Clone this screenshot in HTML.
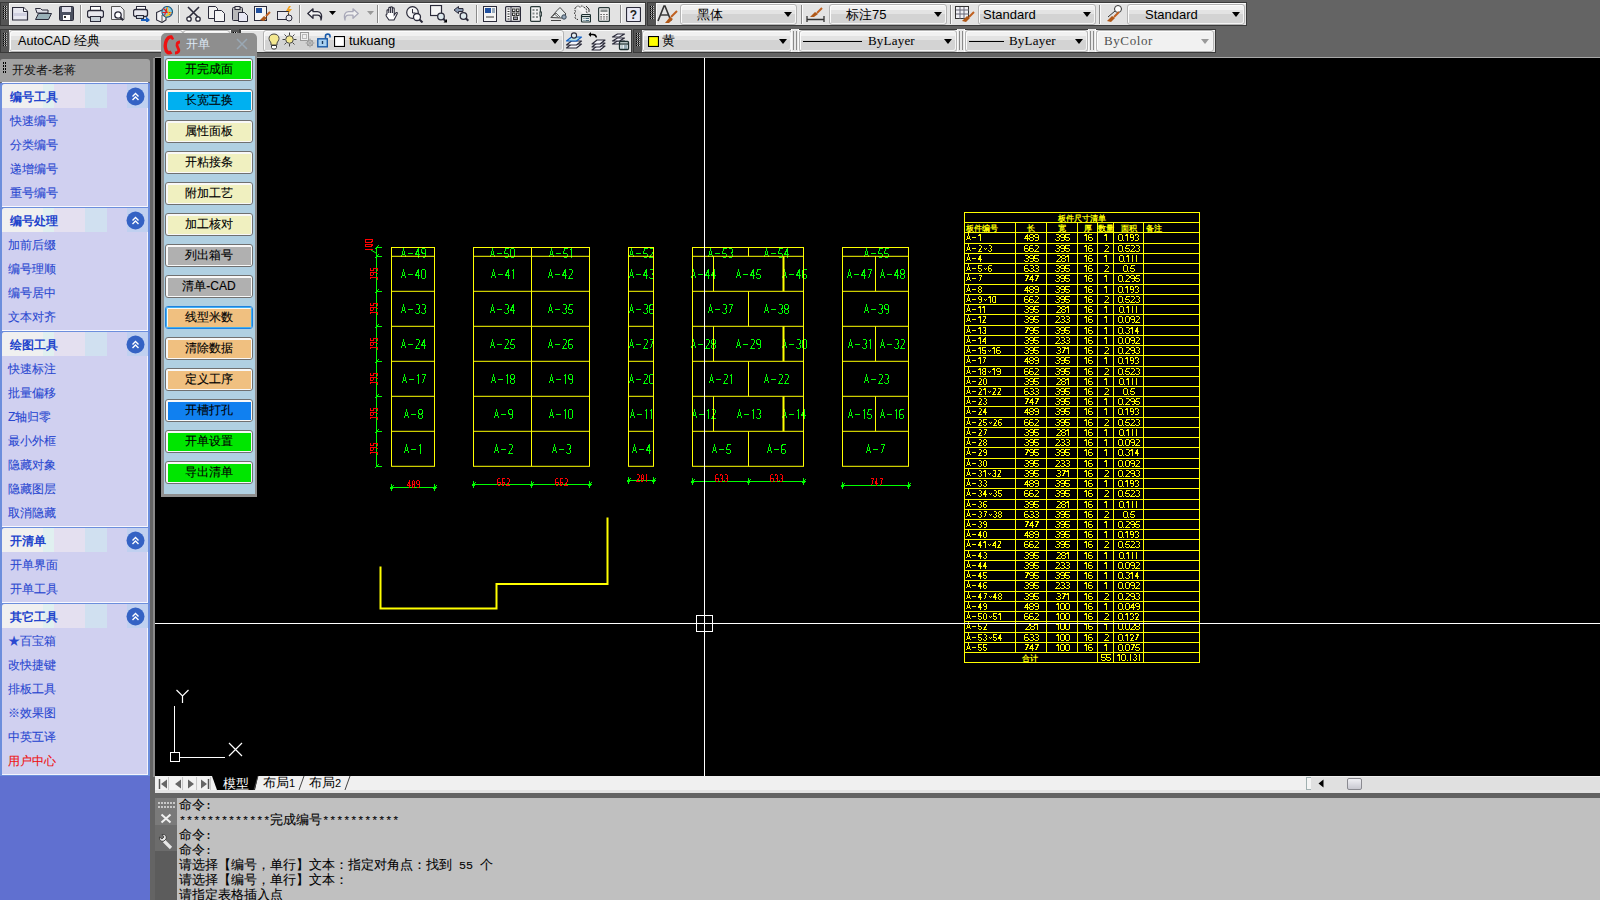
<!DOCTYPE html><html><head><meta charset="utf-8"><title>AutoCAD</title><style>
*{margin:0;padding:0;box-sizing:border-box}
html,body{width:1600px;height:900px;overflow:hidden}
body{background:#646464;position:relative;font-family:"Liberation Sans",sans-serif;font-size:12px;color:#000}
.a{position:absolute}
.cb{position:absolute;background:linear-gradient(#f1f1f1 0,#f1f1f1 5px,#e3e3e3 5px,#e3e3e3 9px,#d3d3d3 9px,#d3d3d3 100%);border:1px solid #b4b4b4;border-radius:3px;box-shadow:inset 1px 1px 0 #fcfcfc,inset -1px -1px 0 #f4f4f4}
.arr{position:absolute;width:0;height:0;border-left:4.5px solid transparent;border-right:4.5px solid transparent;border-top:5px solid #000}
.ic{position:absolute}
.sep{position:absolute;width:1px;background:#8a8a8a;box-shadow:1px 0 0 #fafafa}
.cjk{font-family:"Liberation Sans",sans-serif}
.bt{-webkit-text-stroke:0.12px #000}
.it{-webkit-text-stroke:0.1px currentColor}
</style></head><body>
<div class="a" style="left:0px;top:2px;width:646px;height:24px;background:#3a3a3a;"></div>
<div class="a" style="left:1px;top:3px;width:8px;height:22px;background:#555555;"></div>
<div class="a" style="left:3px;top:6px;width:1px;height:1px;background:#000"></div><div class="a" style="left:4px;top:6px;width:1px;height:1px;background:#c0c0c0"></div><div class="a" style="left:5px;top:6px;width:1px;height:1px;background:#000"></div><div class="a" style="left:6px;top:6px;width:1px;height:1px;background:#c0c0c0"></div><div class="a" style="left:3px;top:8px;width:1px;height:1px;background:#000"></div><div class="a" style="left:4px;top:8px;width:1px;height:1px;background:#c0c0c0"></div><div class="a" style="left:5px;top:8px;width:1px;height:1px;background:#000"></div><div class="a" style="left:6px;top:8px;width:1px;height:1px;background:#c0c0c0"></div><div class="a" style="left:3px;top:10px;width:1px;height:1px;background:#000"></div><div class="a" style="left:4px;top:10px;width:1px;height:1px;background:#c0c0c0"></div><div class="a" style="left:5px;top:10px;width:1px;height:1px;background:#000"></div><div class="a" style="left:6px;top:10px;width:1px;height:1px;background:#c0c0c0"></div><div class="a" style="left:3px;top:12px;width:1px;height:1px;background:#000"></div><div class="a" style="left:4px;top:12px;width:1px;height:1px;background:#c0c0c0"></div><div class="a" style="left:5px;top:12px;width:1px;height:1px;background:#000"></div><div class="a" style="left:6px;top:12px;width:1px;height:1px;background:#c0c0c0"></div><div class="a" style="left:3px;top:14px;width:1px;height:1px;background:#000"></div><div class="a" style="left:4px;top:14px;width:1px;height:1px;background:#c0c0c0"></div><div class="a" style="left:5px;top:14px;width:1px;height:1px;background:#000"></div><div class="a" style="left:6px;top:14px;width:1px;height:1px;background:#c0c0c0"></div><div class="a" style="left:3px;top:16px;width:1px;height:1px;background:#000"></div><div class="a" style="left:4px;top:16px;width:1px;height:1px;background:#c0c0c0"></div><div class="a" style="left:5px;top:16px;width:1px;height:1px;background:#000"></div><div class="a" style="left:6px;top:16px;width:1px;height:1px;background:#c0c0c0"></div><div class="a" style="left:3px;top:18px;width:1px;height:1px;background:#000"></div><div class="a" style="left:4px;top:18px;width:1px;height:1px;background:#c0c0c0"></div><div class="a" style="left:5px;top:18px;width:1px;height:1px;background:#000"></div><div class="a" style="left:6px;top:18px;width:1px;height:1px;background:#c0c0c0"></div>
<div class="a" style="left:9px;top:3px;width:636px;height:22px;background:#e3e3e3;box-shadow:inset 1px 1px 0 #fafafa"></div>
<div class="a" style="left:647px;top:2px;width:600px;height:24px;background:#3a3a3a;"></div>
<div class="a" style="left:648px;top:3px;width:8px;height:22px;background:#555555;"></div>
<div class="a" style="left:650px;top:6px;width:1px;height:1px;background:#000"></div><div class="a" style="left:651px;top:6px;width:1px;height:1px;background:#c0c0c0"></div><div class="a" style="left:652px;top:6px;width:1px;height:1px;background:#000"></div><div class="a" style="left:653px;top:6px;width:1px;height:1px;background:#c0c0c0"></div><div class="a" style="left:650px;top:8px;width:1px;height:1px;background:#000"></div><div class="a" style="left:651px;top:8px;width:1px;height:1px;background:#c0c0c0"></div><div class="a" style="left:652px;top:8px;width:1px;height:1px;background:#000"></div><div class="a" style="left:653px;top:8px;width:1px;height:1px;background:#c0c0c0"></div><div class="a" style="left:650px;top:10px;width:1px;height:1px;background:#000"></div><div class="a" style="left:651px;top:10px;width:1px;height:1px;background:#c0c0c0"></div><div class="a" style="left:652px;top:10px;width:1px;height:1px;background:#000"></div><div class="a" style="left:653px;top:10px;width:1px;height:1px;background:#c0c0c0"></div><div class="a" style="left:650px;top:12px;width:1px;height:1px;background:#000"></div><div class="a" style="left:651px;top:12px;width:1px;height:1px;background:#c0c0c0"></div><div class="a" style="left:652px;top:12px;width:1px;height:1px;background:#000"></div><div class="a" style="left:653px;top:12px;width:1px;height:1px;background:#c0c0c0"></div><div class="a" style="left:650px;top:14px;width:1px;height:1px;background:#000"></div><div class="a" style="left:651px;top:14px;width:1px;height:1px;background:#c0c0c0"></div><div class="a" style="left:652px;top:14px;width:1px;height:1px;background:#000"></div><div class="a" style="left:653px;top:14px;width:1px;height:1px;background:#c0c0c0"></div><div class="a" style="left:650px;top:16px;width:1px;height:1px;background:#000"></div><div class="a" style="left:651px;top:16px;width:1px;height:1px;background:#c0c0c0"></div><div class="a" style="left:652px;top:16px;width:1px;height:1px;background:#000"></div><div class="a" style="left:653px;top:16px;width:1px;height:1px;background:#c0c0c0"></div><div class="a" style="left:650px;top:18px;width:1px;height:1px;background:#000"></div><div class="a" style="left:651px;top:18px;width:1px;height:1px;background:#c0c0c0"></div><div class="a" style="left:652px;top:18px;width:1px;height:1px;background:#000"></div><div class="a" style="left:653px;top:18px;width:1px;height:1px;background:#c0c0c0"></div>
<div class="a" style="left:656px;top:3px;width:590px;height:22px;background:#e3e3e3;box-shadow:inset 1px 1px 0 #fafafa"></div>
<div class="sep" style="left:80px;top:5px;height:18px"></div>
<div class="sep" style="left:178px;top:5px;height:18px"></div>
<div class="sep" style="left:299px;top:5px;height:18px"></div>
<div class="sep" style="left:377px;top:5px;height:18px"></div>
<div class="sep" style="left:476px;top:5px;height:18px"></div>
<div class="sep" style="left:620px;top:5px;height:18px"></div>
<svg class="ic" style="left:12px;top:7px" width="17" height="14" viewBox="0 0 17 14"><path d="M0.5 0.5h11l4 4v8.5h-15z" fill="#e8e8f0" stroke="#2b2b3a" stroke-width="1.2"/><path d="M1 6h14v3H1z" fill="#d0d0e0"/><path d="M11.5 0.5v4h4" fill="#fff" stroke="#2b2b3a"/></svg>
<svg class="ic" style="left:35px;top:8px" width="17" height="12" viewBox="0 0 17 12"><path d="M0.5 0.5h5l1.5 1.5h6v3h-11z" fill="#e0e0e8" stroke="#2b2b3a"/><path d="M0.5 11.5l3-6h13l-3 6z" fill="#9ab0b8" stroke="#2b2b3a"/></svg>
<svg class="ic" style="left:59px;top:6px" width="15" height="15" viewBox="0 0 15 15"><rect x="0.5" y="0.5" width="14" height="14" rx="1" fill="#4a5060" stroke="#2b2b3a"/><rect x="3" y="1" width="9" height="5" fill="#e0e0ea"/><rect x="4" y="9" width="7" height="5" fill="#fff"/><rect x="5" y="10" width="2" height="2" fill="#333"/></svg>
<svg class="ic" style="left:87px;top:6px" width="17" height="16" viewBox="0 0 17 16"><rect x="3.5" y="0.5" width="10" height="5" fill="#fff" stroke="#2b2b3a"/><rect x="0.5" y="4.5" width="16" height="7" rx="2" fill="#e8e8ee" stroke="#2b2b3a" stroke-width="1.3"/><rect x="3.5" y="10.5" width="10" height="5" fill="#c8d0d8" stroke="#2b2b3a"/></svg>
<svg class="ic" style="left:111px;top:6px" width="14" height="16" viewBox="0 0 14 16"><path d="M0.5 0.5h9l3.5 3.5v9.5h-12.5z" fill="#f0f0f4" stroke="#555"/><circle cx="7" cy="9" r="3.2" fill="#fff" stroke="#2b2b3a" stroke-width="1.3"/><path d="M9.2 11.2l3 3" stroke="#2b2b3a" stroke-width="2"/></svg>
<svg class="ic" style="left:133px;top:6px" width="17" height="16" viewBox="0 0 17 16"><rect x="3.5" y="0.5" width="9" height="4" fill="#fff" stroke="#2b2b3a"/><rect x="0.5" y="3.5" width="14" height="7" rx="2" fill="#e8e8ee" stroke="#2b2b3a" stroke-width="1.3"/><rect x="3.5" y="9.5" width="7" height="3" fill="#c8d0d8" stroke="#2b2b3a"/><path d="M8 13h5v-2.5l4 3.5-4 3.5v-2.5h-5z" fill="#1a60c0"/></svg>
<svg class="ic" style="left:156px;top:6px" width="17" height="17" viewBox="0 0 17 17"><path d="M0.6 6.5L6 4l4 1.5V14l-4 2.5-5.4-2.5z" fill="#f2f2f4" stroke="#2b2b3a" stroke-width="1.1"/><path d="M6 16.5V9l8 -2" stroke="#555" fill="none"/><circle cx="11.2" cy="5.8" r="5.3" fill="#88c8e0" stroke="#1a5a80" stroke-width="1.1"/><path d="M7.5 2.5l7 6.5M8.5 9.5l3-8.5M6.5 6.5h9" stroke="#e02020" stroke-width="1.1"/><path d="M9.5 10.5l5.5-4M11 1l2 9" stroke="#f0d020" stroke-width="1.1"/></svg>
<svg class="ic" style="left:186px;top:6px" width="15" height="16" viewBox="0 0 15 16"><path d="M2 1l11 11M13 1L2 12" stroke="#2b2b3a" stroke-width="1.6"/><circle cx="3" cy="13" r="2.2" fill="#fff" stroke="#2b2b3a" stroke-width="1.3"/><circle cx="12" cy="13" r="2.2" fill="#fff" stroke="#2b2b3a" stroke-width="1.3"/></svg>
<svg class="ic" style="left:208px;top:6px" width="17" height="16" viewBox="0 0 17 16"><path d="M0.5 0.5h7l2 2v10h-9z" fill="#f0f0f0" stroke="#2b2b3a"/><path d="M6.5 4.5h7l3 3v8h-10z" fill="#f4f4f4" stroke="#2b2b3a"/></svg>
<svg class="ic" style="left:232px;top:6px" width="16" height="16" viewBox="0 0 16 16"><rect x="0.5" y="1.5" width="10" height="13" rx="1" fill="#b8b8b8" stroke="#2b2b3a"/><rect x="3" y="0.5" width="5" height="3" fill="#ddd" stroke="#2b2b3a"/><path d="M6.5 6.5h6l3 3v6h-9z" fill="#e8e8f4" stroke="#2b2b3a"/></svg>
<svg class="ic" style="left:254px;top:6px" width="17" height="16" viewBox="0 0 17 16"><rect x="0.5" y="0.5" width="12" height="14" fill="#f4f4f4" stroke="#2b2b3a"/><rect x="2" y="2" width="6" height="5" fill="#2050a0"/><path d="M6 14l4-4 3 2-3 3z" fill="#b05818"/><path d="M12 10l4-4" stroke="#c06020" stroke-width="2"/></svg>
<svg class="ic" style="left:277px;top:6px" width="17" height="16" viewBox="0 0 17 16"><rect x="0.5" y="5.5" width="11" height="8" fill="#e8e8ee" stroke="#2b2b3a"/><circle cx="12" cy="12" r="3" fill="#e8e8ee" stroke="#2b2b3a"/><path d="M12 0l-3 5h3l-2 4 5-6h-3l2-3z" fill="#f0a020"/></svg>
<svg class="ic" style="left:307px;top:8px" width="16" height="13" viewBox="0 0 16 13"><path d="M6 0.8L0.8 5.5 6 10.2V7.2h4.5c2.5 0 3.5 1.5 3.5 4.8 1.5-5 0-8.3-3.5-8.3H6z" fill="#f4f4f4" stroke="#2b2b3a" stroke-width="1.3" stroke-linejoin="round"/></svg>
<svg class="ic" style="left:329px;top:11px" width="7" height="4" viewBox="0 0 7 4"><path d="M0 0h7L3.5 4z" fill="#000"/></svg>
<svg class="ic" style="left:343px;top:8px" width="16" height="13" viewBox="0 0 16 13"><path d="M10 0.8l5.2 4.7L10 10.2V7.2H5.5C3 7.2 2 8.7 2 12 .5 7 2 3.7 5.5 3.7H10z" fill="#f0f0f0" stroke="#a8a8b8" stroke-width="1.3" stroke-linejoin="round"/></svg>
<svg class="ic" style="left:367px;top:11px" width="7" height="4" viewBox="0 0 7 4"><path d="M0 0h7L3.5 4z" fill="#999"/></svg>
<svg class="ic" style="left:384px;top:6px" width="17" height="16" viewBox="0 0 17 16"><path d="M3 8V4.5c0-1 1.8-1 1.8 0V7V2c0-1 1.8-1 1.8 0v5V1.5c0-1 1.8-1 1.8 0V7V2.5c0-1 1.8-1 1.8 0V9l1.5-2c.8-1 2-.3 1.5.7L10 14H5L2.5 10.5C1.8 9.5 2 8 3 8z" fill="#fff" stroke="#2b2b3a" stroke-width="1.1"/></svg>
<svg class="ic" style="left:406px;top:6px" width="18" height="17" viewBox="0 0 18 17"><circle cx="6.5" cy="6.5" r="5.8" fill="#f4f4f4" stroke="#2b2b3a" stroke-width="1.2"/><path d="M6.5 3v4h3" stroke="#2b2b3a" fill="none"/><circle cx="11" cy="11" r="3.5" fill="#fff" stroke="#2b2b3a" stroke-width="1.3"/><path d="M13.5 13.5l3 3" stroke="#2b2b3a" stroke-width="2"/></svg>
<svg class="ic" style="left:430px;top:5px" width="17" height="18" viewBox="0 0 17 18"><rect x="0.5" y="0.5" width="11" height="10" fill="#f4f4f4" stroke="#2b2b3a" stroke-width="1.2"/><circle cx="11" cy="11.5" r="3.3" fill="#dde8ec" stroke="#2b2b3a" stroke-width="1.3"/><path d="M13.3 13.8l2.2 2.2" stroke="#2b2b3a" stroke-width="2"/><path d="M13.5 17.5h3.5v-3.5z" fill="#000"/></svg>
<svg class="ic" style="left:453px;top:5px" width="17" height="18" viewBox="0 0 17 18"><path d="M1 5l4.5-3.5V3.5H10V6.5H5.5v2z" fill="#8898b0" stroke="#2b2b3a" stroke-width="1" stroke-linejoin="round"/><circle cx="10.5" cy="11" r="3.3" fill="#dde8ec" stroke="#2b2b3a" stroke-width="1.3"/><path d="M12.8 13.3l2.5 2.5" stroke="#2b2b3a" stroke-width="2"/></svg>
<svg class="ic" style="left:483px;top:6px" width="14" height="16" viewBox="0 0 14 16"><rect x="0.5" y="0.5" width="13" height="15" fill="#f4f4f4" stroke="#2b2b3a"/><rect x="2" y="2" width="6" height="5" fill="#2050a0"/><rect x="9" y="2" width="3" height="5" fill="#9ab"/><path d="M3 11h8" stroke="#333"/></svg>
<svg class="ic" style="left:505px;top:6px" width="16" height="16" viewBox="0 0 16 16"><rect x="0.6" y="0.6" width="14.8" height="14.8" rx="1" fill="#f4f4f4" stroke="#2b2b3a" stroke-width="1.2"/><path d="M6 1v14" stroke="#2b2b3a"/><path d="M2.5 3h2M2.5 5.5h2M2.5 8h2M2.5 10.5h2M2.5 13h2" stroke="#333"/><rect x="7.5" y="3" width="2.5" height="2.5" fill="none" stroke="#333"/><rect x="11.5" y="3" width="2.5" height="2.5" fill="none" stroke="#333"/><rect x="7.5" y="7" width="2.5" height="2.5" fill="none" stroke="#333"/><rect x="11.5" y="7" width="2.5" height="2.5" fill="none" stroke="#333"/><rect x="8.5" y="11" width="4" height="2.5" fill="#99a" stroke="#333"/></svg>
<svg class="ic" style="left:530px;top:6px" width="12" height="16" viewBox="0 0 12 16"><rect x="0.6" y="0.6" width="9.8" height="14.8" rx="1" fill="#f0f0f0" stroke="#2b3a3a" stroke-width="1.2"/><rect x="10" y="6" width="1.6" height="4" fill="#f0f0f0" stroke="#2b3a3a"/><path d="M2.5 3h2v2h-2zM6 3h2v2H6zM2.5 6.5h2v2h-2zM6 6.5h2v2H6zM2.5 10h2v2h-2zM6 10h2v2H6z" fill="#8a9090"/></svg>
<svg class="ic" style="left:550px;top:6px" width="18" height="16" viewBox="0 0 18 16"><path d="M1 11.5l6-7 3-3 6 6.5-4 4z" fill="#e8ecec" stroke="#444" stroke-width="1"/><path d="M1 11.5l3.5-3.5 4.5 4M3 10l3-3 4 4" stroke="#666" fill="none"/><circle cx="14" cy="11" r="2.2" fill="#9ab" stroke="#345"/><path d="M1 14.5h10" stroke="#444"/></svg>
<svg class="ic" style="left:574px;top:5px" width="17" height="18" viewBox="0 0 17 18"><path d="M2 2.5c1-2 3-2 4 0 1-2 3-2 4 0 2 0 3 2 2 4 2 1 1 4-1 4" stroke="#333" stroke-dasharray="2 1" fill="#f2f2f2"/><path d="M2 2.5c-2 1-2 3 0 4-2 1-2 3 0 4-2 1-1 4 2 4" stroke="#333" stroke-dasharray="2 1" fill="none"/><rect x="7.5" y="9.5" width="9" height="7.5" rx="1" fill="#e8f0f0" stroke="#1e3030" stroke-width="1.2"/><path d="M7.5 11.5h9" stroke="#1e3030" stroke-width="1.2"/><path d="M9.5 13.5h1M11.5 13.5h3.5M9.5 15.5h1M11.5 15.5h3.5" stroke="#4a6a7a"/><path d="M12 1l3 3v3" stroke="#333" fill="none"/></svg>
<svg class="ic" style="left:598px;top:7px" width="12" height="15" viewBox="0 0 12 15"><rect x="0.6" y="0.6" width="10.8" height="13.8" rx="1" fill="#f0f0f0" stroke="#2b3a3a" stroke-width="1.2"/><rect x="2.5" y="2.5" width="7" height="2.5" fill="#8a9090"/><path d="M2.5 7.5h1.2M5.4 7.5h1.2M8.3 7.5h1.2M2.5 9.8h1.2M5.4 9.8h1.2M8.3 9.8h1.2M2.5 12h1.2M5.4 12h1.2M8.3 12h1.2" stroke="#333" stroke-width="1.2"/></svg>
<svg class="ic" style="left:626px;top:7px" width="15" height="15" viewBox="0 0 15 15"><rect x="0.5" y="0.5" width="14" height="14" rx="1" fill="#e8e8f4" stroke="#2b2b3a" stroke-width="1.2"/><text x="7.5" y="12" font-family="Liberation Sans" font-weight="bold" font-size="12" text-anchor="middle" fill="#222">?</text></svg>
<svg class="ic" style="left:657px;top:5px" width="21" height="19" viewBox="0 0 21 19"><path d="M1 16L7 1h1l6 15" stroke="#333" stroke-width="1.6" fill="none"/><path d="M4 10h7" stroke="#333" stroke-width="1.4"/><path d="M8 18l5-6 3 2-4 4z" fill="#b05818"/><path d="M14 12l6-6" stroke="#c06020" stroke-width="2"/></svg>
<div class="cb" style="left:680px;top:4px;width:117px;height:21px;"></div>
<div class="a" style="left:697px;top:4px;height:21px;line-height:21px;white-space:nowrap;"><span class="cjk" style="font-size:13px">黑体</span></div>
<div class="arr" style="left:784px;top:12px;border-top-color:#000"></div>
<div class="sep" style="left:801px;top:5px;height:19px"></div>
<svg class="ic" style="left:806px;top:5px" width="20" height="17" viewBox="0 0 20 17"><path d="M1 11v7M1 14.5h17M18 11v7" stroke="#333" stroke-width="1.3" fill="none"/><path d="M4 12l5-5 3 2-4 3z" fill="#b05818"/><path d="M11 8l5-5" stroke="#c06020" stroke-width="2"/></svg>
<div class="cb" style="left:829px;top:4px;width:118px;height:21px;"></div>
<div class="a" style="left:846px;top:4px;height:21px;line-height:21px;white-space:nowrap;"><span class="cjk" style="font-size:13px">标注75</span></div>
<div class="arr" style="left:934px;top:12px;border-top-color:#000"></div>
<div class="sep" style="left:950px;top:5px;height:19px"></div>
<svg class="ic" style="left:955px;top:6px" width="20" height="17" viewBox="0 0 20 17"><rect x="0.5" y="0.5" width="13" height="12" fill="#f0f0f4" stroke="#333"/><path d="M1 4h13M5 1v12M9 1v12M1 8h13" stroke="#667"/><path d="M7 15l5-5 3 2-4 4z" fill="#b05818"/><path d="M14 11l5-5" stroke="#c06020" stroke-width="2"/></svg>
<div class="cb" style="left:978px;top:4px;width:118px;height:21px;"></div>
<div class="a" style="left:983px;top:4px;height:21px;line-height:21px;white-space:nowrap;font-size:13px">Standard</div>
<div class="arr" style="left:1083px;top:12px;border-top-color:#000"></div>
<div class="sep" style="left:1099px;top:5px;height:19px"></div>
<svg class="ic" style="left:1104px;top:5px" width="20" height="18" viewBox="0 0 20 18"><circle cx="14" cy="4" r="3.5" fill="#fff" stroke="#333"/><path d="M11 6L4 12" stroke="#333"/><path d="M3 16l5-5 3 2-4 4z" fill="#b05818"/><path d="M10 12l5-5" stroke="#c06020" stroke-width="2"/></svg>
<div class="cb" style="left:1127px;top:4px;width:118px;height:21px;"></div>
<div class="a" style="left:1145px;top:4px;height:21px;line-height:21px;white-space:nowrap;font-size:13px">Standard</div>
<div class="arr" style="left:1232px;top:12px;border-top-color:#000"></div>
<div class="a" style="left:0px;top:29px;width:632px;height:24px;background:#3a3a3a;"></div>
<div class="a" style="left:1px;top:30px;width:8px;height:22px;background:#555555;"></div>
<div class="a" style="left:3px;top:33px;width:1px;height:1px;background:#000"></div><div class="a" style="left:4px;top:33px;width:1px;height:1px;background:#c0c0c0"></div><div class="a" style="left:5px;top:33px;width:1px;height:1px;background:#000"></div><div class="a" style="left:6px;top:33px;width:1px;height:1px;background:#c0c0c0"></div><div class="a" style="left:3px;top:35px;width:1px;height:1px;background:#000"></div><div class="a" style="left:4px;top:35px;width:1px;height:1px;background:#c0c0c0"></div><div class="a" style="left:5px;top:35px;width:1px;height:1px;background:#000"></div><div class="a" style="left:6px;top:35px;width:1px;height:1px;background:#c0c0c0"></div><div class="a" style="left:3px;top:37px;width:1px;height:1px;background:#000"></div><div class="a" style="left:4px;top:37px;width:1px;height:1px;background:#c0c0c0"></div><div class="a" style="left:5px;top:37px;width:1px;height:1px;background:#000"></div><div class="a" style="left:6px;top:37px;width:1px;height:1px;background:#c0c0c0"></div><div class="a" style="left:3px;top:39px;width:1px;height:1px;background:#000"></div><div class="a" style="left:4px;top:39px;width:1px;height:1px;background:#c0c0c0"></div><div class="a" style="left:5px;top:39px;width:1px;height:1px;background:#000"></div><div class="a" style="left:6px;top:39px;width:1px;height:1px;background:#c0c0c0"></div><div class="a" style="left:3px;top:41px;width:1px;height:1px;background:#000"></div><div class="a" style="left:4px;top:41px;width:1px;height:1px;background:#c0c0c0"></div><div class="a" style="left:5px;top:41px;width:1px;height:1px;background:#000"></div><div class="a" style="left:6px;top:41px;width:1px;height:1px;background:#c0c0c0"></div><div class="a" style="left:3px;top:43px;width:1px;height:1px;background:#000"></div><div class="a" style="left:4px;top:43px;width:1px;height:1px;background:#c0c0c0"></div><div class="a" style="left:5px;top:43px;width:1px;height:1px;background:#000"></div><div class="a" style="left:6px;top:43px;width:1px;height:1px;background:#c0c0c0"></div><div class="a" style="left:3px;top:45px;width:1px;height:1px;background:#000"></div><div class="a" style="left:4px;top:45px;width:1px;height:1px;background:#c0c0c0"></div><div class="a" style="left:5px;top:45px;width:1px;height:1px;background:#000"></div><div class="a" style="left:6px;top:45px;width:1px;height:1px;background:#c0c0c0"></div>
<div class="a" style="left:9px;top:30px;width:622px;height:22px;background:#e3e3e3;box-shadow:inset 1px 1px 0 #fafafa"></div>
<div class="cb" style="left:9px;top:30px;width:174px;height:22px;"></div>
<div class="a" style="left:18px;top:30px;height:22px;line-height:22px;white-space:nowrap;font-size:12.6px">AutoCAD <span class="cjk">经典</span></div>
<div class="arr" style="left:170px;top:39px;border-top-color:#000"></div>
<div class="a" style="left:183px;top:30px;width:47px;height:22px;background:#e3e3e3;"></div>
<div class="cb" style="left:183px;top:30px;width:47px;height:22px"></div>
<div class="a" style="left:231px;top:29px;width:8px;height:23px;background:#555555;"></div>
<div class="a" style="left:233px;top:32px;width:1px;height:1px;background:#000"></div><div class="a" style="left:234px;top:32px;width:1px;height:1px;background:#c0c0c0"></div><div class="a" style="left:235px;top:32px;width:1px;height:1px;background:#000"></div><div class="a" style="left:236px;top:32px;width:1px;height:1px;background:#c0c0c0"></div><div class="a" style="left:233px;top:34px;width:1px;height:1px;background:#000"></div><div class="a" style="left:234px;top:34px;width:1px;height:1px;background:#c0c0c0"></div><div class="a" style="left:235px;top:34px;width:1px;height:1px;background:#000"></div><div class="a" style="left:236px;top:34px;width:1px;height:1px;background:#c0c0c0"></div><div class="a" style="left:233px;top:36px;width:1px;height:1px;background:#000"></div><div class="a" style="left:234px;top:36px;width:1px;height:1px;background:#c0c0c0"></div><div class="a" style="left:235px;top:36px;width:1px;height:1px;background:#000"></div><div class="a" style="left:236px;top:36px;width:1px;height:1px;background:#c0c0c0"></div><div class="a" style="left:233px;top:38px;width:1px;height:1px;background:#000"></div><div class="a" style="left:234px;top:38px;width:1px;height:1px;background:#c0c0c0"></div><div class="a" style="left:235px;top:38px;width:1px;height:1px;background:#000"></div><div class="a" style="left:236px;top:38px;width:1px;height:1px;background:#c0c0c0"></div><div class="a" style="left:233px;top:40px;width:1px;height:1px;background:#000"></div><div class="a" style="left:234px;top:40px;width:1px;height:1px;background:#c0c0c0"></div><div class="a" style="left:235px;top:40px;width:1px;height:1px;background:#000"></div><div class="a" style="left:236px;top:40px;width:1px;height:1px;background:#c0c0c0"></div><div class="a" style="left:233px;top:42px;width:1px;height:1px;background:#000"></div><div class="a" style="left:234px;top:42px;width:1px;height:1px;background:#c0c0c0"></div><div class="a" style="left:235px;top:42px;width:1px;height:1px;background:#000"></div><div class="a" style="left:236px;top:42px;width:1px;height:1px;background:#c0c0c0"></div><div class="a" style="left:233px;top:44px;width:1px;height:1px;background:#000"></div><div class="a" style="left:234px;top:44px;width:1px;height:1px;background:#c0c0c0"></div><div class="a" style="left:235px;top:44px;width:1px;height:1px;background:#000"></div><div class="a" style="left:236px;top:44px;width:1px;height:1px;background:#c0c0c0"></div>
<div class="a" style="left:239px;top:29px;width:2px;height:23px;background:#3a3a3a;"></div>
<div class="cb" style="left:263px;top:30px;width:301px;height:22px;"></div>
<div class="arr" style="left:551px;top:39px;border-top-color:#000"></div>
<svg class="ic" style="left:268px;top:33px" width="12" height="17" viewBox="0 0 12 17"><path d="M6 1C3 1 1 3 1 5.5c0 2 1.5 3 2 4.5v2h6v-2c.5-1.5 2-2.5 2-4.5C11 3 9 1 6 1z" fill="#f4e890" stroke="#444" stroke-width="1"/><path d="M3.5 12.5h5v2l-1 1.5h-3l-1-1.5z" fill="#fff" stroke="#333"/></svg>
<svg class="ic" style="left:282px;top:32px" width="15" height="15" viewBox="0 0 15 15"><circle cx="7.5" cy="7.5" r="3.8" fill="#f4e890" stroke="#444"/><path d="M7.5 0.5v2.5M7.5 12v2.5M0.5 7.5h2.5M12 7.5h2.5M2.5 2.5l1.8 1.8M10.7 10.7l1.8 1.8M12.5 2.5l-1.8 1.8M4.3 10.7l-1.8 1.8" stroke="#444"/></svg>
<svg class="ic" style="left:300px;top:32px" width="15" height="16" viewBox="0 0 15 16"><rect x="0.5" y="0.5" width="8" height="8" fill="#f0f0f0" stroke="#999"/><rect x="2.5" y="2.5" width="4" height="4" fill="none" stroke="#bbb"/><circle cx="10" cy="11" r="3" fill="#ccc" stroke="#999"/><path d="M10 6.5v9M5.5 11h9M7 8l6 6M13 8l-6 6" stroke="#aaa"/></svg>
<svg class="ic" style="left:317px;top:32px" width="15" height="17" viewBox="0 0 15 17"><path d="M8.5 6.5V4c0-2.5 4.5-2.5 4.5 0v1.5" stroke="#1a5aa8" stroke-width="1.6" fill="none"/><rect x="0.8" y="6.8" width="9.5" height="8" fill="#a8d0f0" stroke="#1a5aa8" stroke-width="1.4"/><path d="M5.5 9v3" stroke="#1a3a60" stroke-width="1.4"/></svg>
<svg class="ic" style="left:334px;top:36px" width="11" height="11" viewBox="0 0 11 11"><rect x="0.5" y="0.5" width="10" height="10" fill="#fff" stroke="#000" stroke-width="1.2"/></svg>
<div class="a" style="left:349px;top:30px;height:22px;line-height:22px;font-size:13px">tukuang</div>
<svg class="ic" style="left:565px;top:31px" width="20" height="20" viewBox="0 0 20 20"><path d="M1.5 17H11.5L16.5 13H6.5Z" fill="#f4f4fa" stroke="#2b2b3a" stroke-width="1.2" stroke-linejoin="round"/><path d="M1.5 14H11.5L16.5 10H6.5Z" fill="#f4f4fa" stroke="#2b2b3a" stroke-width="1.2" stroke-linejoin="round"/><path d="M1.5 10H11.5L16.5 6H6.5Z" fill="#b8e0e0" stroke="#1060c8" stroke-width="1.2" stroke-linejoin="round"/><circle cx="9" cy="4.5" r="2.6" fill="#e0ecf0" stroke="#2b2b3a" stroke-width="1.1"/></svg>
<svg class="ic" style="left:588px;top:31px" width="20" height="20" viewBox="0 0 20 20"><path d="M4 19H12L17 15H9Z" fill="#f4f4fa" stroke="#2b2b3a" stroke-width="1.2" stroke-linejoin="round"/><path d="M4 16H12L17 12H9Z" fill="#f4f4fa" stroke="#2b2b3a" stroke-width="1.2" stroke-linejoin="round"/><path d="M4 13H12L17 9H9Z" fill="#f4f4fa" stroke="#2b2b3a" stroke-width="1.2" stroke-linejoin="round"/><path d="M1 3.5h4c2 0 3 1 3.5 3" stroke="#000" stroke-width="1.3" fill="none"/><path d="M0.5 3.5l2.5-2.5v5z" fill="#000"/></svg>
<svg class="ic" style="left:611px;top:31px" width="20" height="20" viewBox="0 0 20 20"><path d="M1.5 13H8.5L13.5 10H6.5Z" fill="#f4f4fa" stroke="#2b2b3a" stroke-width="1.2" stroke-linejoin="round"/><path d="M1.5 10H8.5L13.5 7H6.5Z" fill="#f4f4fa" stroke="#2b2b3a" stroke-width="1.2" stroke-linejoin="round"/><path d="M1.5 6H8.5L13.5 3H6.5Z" fill="#f4f4fa" stroke="#2b2b3a" stroke-width="1.2" stroke-linejoin="round"/><rect x="8.5" y="10.5" width="9" height="8" rx="1" fill="#e8f0f0" stroke="#1e3030" stroke-width="1.3"/><path d="M8.5 13h9" stroke="#1e3030" stroke-width="1.3"/><path d="M10.5 15h1M13 15h3M10.5 17h1M13 17h3" stroke="#4a6a7a"/></svg>
<div class="a" style="left:633px;top:29px;width:583px;height:24px;background:#3a3a3a;"></div>
<div class="a" style="left:634px;top:30px;width:8px;height:22px;background:#555555;"></div>
<div class="a" style="left:636px;top:33px;width:1px;height:1px;background:#000"></div><div class="a" style="left:637px;top:33px;width:1px;height:1px;background:#c0c0c0"></div><div class="a" style="left:638px;top:33px;width:1px;height:1px;background:#000"></div><div class="a" style="left:639px;top:33px;width:1px;height:1px;background:#c0c0c0"></div><div class="a" style="left:636px;top:35px;width:1px;height:1px;background:#000"></div><div class="a" style="left:637px;top:35px;width:1px;height:1px;background:#c0c0c0"></div><div class="a" style="left:638px;top:35px;width:1px;height:1px;background:#000"></div><div class="a" style="left:639px;top:35px;width:1px;height:1px;background:#c0c0c0"></div><div class="a" style="left:636px;top:37px;width:1px;height:1px;background:#000"></div><div class="a" style="left:637px;top:37px;width:1px;height:1px;background:#c0c0c0"></div><div class="a" style="left:638px;top:37px;width:1px;height:1px;background:#000"></div><div class="a" style="left:639px;top:37px;width:1px;height:1px;background:#c0c0c0"></div><div class="a" style="left:636px;top:39px;width:1px;height:1px;background:#000"></div><div class="a" style="left:637px;top:39px;width:1px;height:1px;background:#c0c0c0"></div><div class="a" style="left:638px;top:39px;width:1px;height:1px;background:#000"></div><div class="a" style="left:639px;top:39px;width:1px;height:1px;background:#c0c0c0"></div><div class="a" style="left:636px;top:41px;width:1px;height:1px;background:#000"></div><div class="a" style="left:637px;top:41px;width:1px;height:1px;background:#c0c0c0"></div><div class="a" style="left:638px;top:41px;width:1px;height:1px;background:#000"></div><div class="a" style="left:639px;top:41px;width:1px;height:1px;background:#c0c0c0"></div><div class="a" style="left:636px;top:43px;width:1px;height:1px;background:#000"></div><div class="a" style="left:637px;top:43px;width:1px;height:1px;background:#c0c0c0"></div><div class="a" style="left:638px;top:43px;width:1px;height:1px;background:#000"></div><div class="a" style="left:639px;top:43px;width:1px;height:1px;background:#c0c0c0"></div><div class="a" style="left:636px;top:45px;width:1px;height:1px;background:#000"></div><div class="a" style="left:637px;top:45px;width:1px;height:1px;background:#c0c0c0"></div><div class="a" style="left:638px;top:45px;width:1px;height:1px;background:#000"></div><div class="a" style="left:639px;top:45px;width:1px;height:1px;background:#c0c0c0"></div>
<div class="a" style="left:642px;top:30px;width:573px;height:22px;background:#e3e3e3;box-shadow:inset 1px 1px 0 #fafafa"></div>
<div class="cb" style="left:642px;top:30px;width:150px;height:22px;"></div>
<div class="arr" style="left:779px;top:39px;border-top-color:#000"></div>
<svg class="ic" style="left:648px;top:36px" width="11" height="11" viewBox="0 0 11 11"><rect x="0.5" y="0.5" width="10" height="10" fill="#ffff00" stroke="#000" stroke-width="1.2"/></svg>
<div class="a cjk" style="left:662px;top:30px;height:22px;line-height:22px;font-size:13px">黄</div>
<div class="a" style="left:791px;top:29px;width:8px;height:23px;background:#e8e8e8;border-left:1px solid #fafafa;border-right:1px solid #fafafa"></div>
<div class="a" style="left:793px;top:31px;width:1px;height:19px;background:#8a8a8a;"></div>
<div class="a" style="left:796px;top:31px;width:1px;height:19px;background:#8a8a8a;"></div>
<div class="cb" style="left:799px;top:30px;width:158px;height:22px;"></div>
<div class="a" style="left:868px;top:30px;height:22px;line-height:22px;white-space:nowrap;font-family:'Liberation Serif',serif;font-size:13px;letter-spacing:0.2px">ByLayer</div>
<div class="arr" style="left:944px;top:39px;border-top-color:#000"></div>
<div class="a" style="left:803px;top:41px;width:59px;height:1px;background:#000;"></div>
<div class="a" style="left:957px;top:29px;width:8px;height:23px;background:#e8e8e8;border-left:1px solid #fafafa;border-right:1px solid #fafafa"></div>
<div class="a" style="left:959px;top:31px;width:1px;height:19px;background:#8a8a8a;"></div>
<div class="a" style="left:962px;top:31px;width:1px;height:19px;background:#8a8a8a;"></div>
<div class="cb" style="left:965px;top:30px;width:123px;height:22px;"></div>
<div class="a" style="left:1009px;top:30px;height:22px;line-height:22px;white-space:nowrap;font-family:'Liberation Serif',serif;font-size:13px;letter-spacing:0.2px">ByLayer</div>
<div class="arr" style="left:1075px;top:39px;border-top-color:#000"></div>
<div class="a" style="left:969px;top:41px;width:35px;height:1px;background:#000;"></div>
<div class="a" style="left:1088px;top:29px;width:8px;height:23px;background:#e8e8e8;border-left:1px solid #fafafa;border-right:1px solid #fafafa"></div>
<div class="a" style="left:1090px;top:31px;width:1px;height:19px;background:#8a8a8a;"></div>
<div class="a" style="left:1093px;top:31px;width:1px;height:19px;background:#8a8a8a;"></div>
<div class="cb" style="left:1096px;top:30px;width:118px;height:22px;background:#f1f1f1"></div>
<div class="a" style="left:1104px;top:30px;height:22px;line-height:22px;white-space:nowrap;font-family:'Liberation Serif',serif;font-size:13px;color:#505050;letter-spacing:0.6px">ByColor</div>
<div class="arr" style="left:1201px;top:39px;border-top-color:#999"></div>
<div class="a" style="left:0px;top:53px;width:1600px;height:4px;background:#646464;"></div>
<div class="a" style="left:155px;top:57px;width:1445px;height:1px;background:#a8a8a8;"></div>
<div class="a" style="left:0px;top:58px;width:150px;height:842px;background:#6070d0;"></div>
<div class="a" style="left:0px;top:58px;width:150px;height:25px;background:#646464;"></div>
<div class="a" style="left:150px;top:58px;width:5px;height:842px;background:#646464;"></div>
<div class="a" style="left:153px;top:58px;width:2px;height:719px;background:#8a8a8a;"></div>
<div class="a" style="left:0;top:59px;width:150px;height:23px;background:#a2a2a2;border-radius:3px 3px 0 0"></div>
<div class="a" style="left:3px;top:62px;width:1px;height:2px;background:#000"></div><div class="a" style="left:5px;top:62px;width:1px;height:2px;background:#000"></div>
<div class="a" style="left:3px;top:65px;width:1px;height:2px;background:#000"></div><div class="a" style="left:5px;top:65px;width:1px;height:2px;background:#000"></div>
<div class="a" style="left:3px;top:68px;width:1px;height:2px;background:#000"></div><div class="a" style="left:5px;top:68px;width:1px;height:2px;background:#000"></div>
<div class="a" style="left:3px;top:71px;width:1px;height:2px;background:#000"></div><div class="a" style="left:5px;top:71px;width:1px;height:2px;background:#000"></div>
<div class="a cjk" style="left:12px;top:59px;height:23px;line-height:23px;font-size:12px;color:#111">开发者-老蒋</div>
<div class="a" style="left:0px;top:82px;width:150px;height:126px;background:#6c8edc;border-radius:4px 4px 0 0"></div>
<div class="a" style="left:2px;top:82px;width:146px;height:1px;background:#f8f8ff;"></div>
<div class="a" style="left:2px;top:84px;width:146px;height:123px;background:#d0d0f0;border-radius:3px 3px 0 0"></div>
<div class="a" style="left:2px;top:84px;width:41px;height:24px;background:#f0f0f0;border-top-left-radius:3px"></div>
<div class="a" style="left:43px;top:84px;width:11px;height:24px;background:#e0f0f0;"></div>
<div class="a" style="left:54px;top:84px;width:31px;height:24px;background:#e4e0f0;"></div>
<div class="a" style="left:85px;top:84px;width:22px;height:24px;background:#d0e0f0;"></div>
<div class="a" style="left:107px;top:84px;width:20px;height:24px;background:#d0d0f0;"></div>
<div class="a" style="left:127px;top:84px;width:21px;height:24px;background:#c0d0f0;"></div>
<div class="a cjk" style="left:10px;top:85px;height:24px;line-height:24px;font-size:12px;font-weight:bold;color:#2244cc">编号工具</div>
<svg class="ic" style="left:126px;top:87px" width="19" height="19" viewBox="0 0 19 19"><circle cx="9.5" cy="9.5" r="9" fill="#3462c4"/><path d="M6.5 9.5l3-3 3 3M6.5 13l3-3 3 3" stroke="#fff" stroke-width="1.4" fill="none"/></svg>
<div class="a cjk it" style="left:10px;top:109px;height:24px;line-height:24px;font-size:12px;color:#2a48d0">快速编号</div>
<div class="a cjk it" style="left:10px;top:133px;height:24px;line-height:24px;font-size:12px;color:#2a48d0">分类编号</div>
<div class="a cjk it" style="left:10px;top:157px;height:24px;line-height:24px;font-size:12px;color:#2a48d0">递增编号</div>
<div class="a cjk it" style="left:10px;top:181px;height:24px;line-height:24px;font-size:12px;color:#2a48d0">重号编号</div>
<div class="a" style="left:2px;top:206px;width:146px;height:1px;background:#f4f4fc;"></div>
<div class="a" style="left:147px;top:108px;width:1px;height:98px;background:#f4f4fc;"></div>
<div class="a" style="left:0px;top:206px;width:150px;height:126px;background:#6c8edc;border-radius:4px 4px 0 0"></div>
<div class="a" style="left:2px;top:206px;width:146px;height:1px;background:#f8f8ff;"></div>
<div class="a" style="left:2px;top:208px;width:146px;height:123px;background:#d0d0f0;border-radius:3px 3px 0 0"></div>
<div class="a" style="left:2px;top:208px;width:41px;height:24px;background:#f0f0f0;border-top-left-radius:3px"></div>
<div class="a" style="left:43px;top:208px;width:11px;height:24px;background:#e0f0f0;"></div>
<div class="a" style="left:54px;top:208px;width:31px;height:24px;background:#e4e0f0;"></div>
<div class="a" style="left:85px;top:208px;width:22px;height:24px;background:#d0e0f0;"></div>
<div class="a" style="left:107px;top:208px;width:20px;height:24px;background:#d0d0f0;"></div>
<div class="a" style="left:127px;top:208px;width:21px;height:24px;background:#c0d0f0;"></div>
<div class="a cjk" style="left:10px;top:209px;height:24px;line-height:24px;font-size:12px;font-weight:bold;color:#2244cc">编号处理</div>
<svg class="ic" style="left:126px;top:211px" width="19" height="19" viewBox="0 0 19 19"><circle cx="9.5" cy="9.5" r="9" fill="#3462c4"/><path d="M6.5 9.5l3-3 3 3M6.5 13l3-3 3 3" stroke="#fff" stroke-width="1.4" fill="none"/></svg>
<div class="a cjk it" style="left:8px;top:233px;height:24px;line-height:24px;font-size:12px;color:#2a48d0">加前后缀</div>
<div class="a cjk it" style="left:8px;top:257px;height:24px;line-height:24px;font-size:12px;color:#2a48d0">编号理顺</div>
<div class="a cjk it" style="left:8px;top:281px;height:24px;line-height:24px;font-size:12px;color:#2a48d0">编号居中</div>
<div class="a cjk it" style="left:8px;top:305px;height:24px;line-height:24px;font-size:12px;color:#2a48d0">文本对齐</div>
<div class="a" style="left:2px;top:330px;width:146px;height:1px;background:#f4f4fc;"></div>
<div class="a" style="left:147px;top:232px;width:1px;height:98px;background:#f4f4fc;"></div>
<div class="a" style="left:0px;top:330px;width:150px;height:198px;background:#6c8edc;border-radius:4px 4px 0 0"></div>
<div class="a" style="left:2px;top:330px;width:146px;height:1px;background:#f8f8ff;"></div>
<div class="a" style="left:2px;top:332px;width:146px;height:195px;background:#d0d0f0;border-radius:3px 3px 0 0"></div>
<div class="a" style="left:2px;top:332px;width:41px;height:24px;background:#f0f0f0;border-top-left-radius:3px"></div>
<div class="a" style="left:43px;top:332px;width:11px;height:24px;background:#e0f0f0;"></div>
<div class="a" style="left:54px;top:332px;width:31px;height:24px;background:#e4e0f0;"></div>
<div class="a" style="left:85px;top:332px;width:22px;height:24px;background:#d0e0f0;"></div>
<div class="a" style="left:107px;top:332px;width:20px;height:24px;background:#d0d0f0;"></div>
<div class="a" style="left:127px;top:332px;width:21px;height:24px;background:#c0d0f0;"></div>
<div class="a cjk" style="left:10px;top:333px;height:24px;line-height:24px;font-size:12px;font-weight:bold;color:#2244cc">绘图工具</div>
<svg class="ic" style="left:126px;top:335px" width="19" height="19" viewBox="0 0 19 19"><circle cx="9.5" cy="9.5" r="9" fill="#3462c4"/><path d="M6.5 9.5l3-3 3 3M6.5 13l3-3 3 3" stroke="#fff" stroke-width="1.4" fill="none"/></svg>
<div class="a cjk it" style="left:8px;top:357px;height:24px;line-height:24px;font-size:12px;color:#2a48d0">快速标注</div>
<div class="a cjk it" style="left:8px;top:381px;height:24px;line-height:24px;font-size:12px;color:#2a48d0">批量偏移</div>
<div class="a cjk it" style="left:8px;top:405px;height:24px;line-height:24px;font-size:12px;color:#2a48d0">Z轴归零</div>
<div class="a cjk it" style="left:8px;top:429px;height:24px;line-height:24px;font-size:12px;color:#2a48d0">最小外框</div>
<div class="a cjk it" style="left:8px;top:453px;height:24px;line-height:24px;font-size:12px;color:#2a48d0">隐藏对象</div>
<div class="a cjk it" style="left:8px;top:477px;height:24px;line-height:24px;font-size:12px;color:#2a48d0">隐藏图层</div>
<div class="a cjk it" style="left:8px;top:501px;height:24px;line-height:24px;font-size:12px;color:#2a48d0">取消隐藏</div>
<div class="a" style="left:2px;top:526px;width:146px;height:1px;background:#f4f4fc;"></div>
<div class="a" style="left:147px;top:356px;width:1px;height:170px;background:#f4f4fc;"></div>
<div class="a" style="left:0px;top:526px;width:150px;height:78px;background:#6c8edc;border-radius:4px 4px 0 0"></div>
<div class="a" style="left:2px;top:526px;width:146px;height:1px;background:#f8f8ff;"></div>
<div class="a" style="left:2px;top:528px;width:146px;height:75px;background:#d0d0f0;border-radius:3px 3px 0 0"></div>
<div class="a" style="left:2px;top:528px;width:41px;height:24px;background:#f0f0f0;border-top-left-radius:3px"></div>
<div class="a" style="left:43px;top:528px;width:11px;height:24px;background:#e0f0f0;"></div>
<div class="a" style="left:54px;top:528px;width:31px;height:24px;background:#e4e0f0;"></div>
<div class="a" style="left:85px;top:528px;width:22px;height:24px;background:#d0e0f0;"></div>
<div class="a" style="left:107px;top:528px;width:20px;height:24px;background:#d0d0f0;"></div>
<div class="a" style="left:127px;top:528px;width:21px;height:24px;background:#c0d0f0;"></div>
<div class="a cjk" style="left:10px;top:529px;height:24px;line-height:24px;font-size:12px;font-weight:bold;color:#2244cc">开清单</div>
<svg class="ic" style="left:126px;top:531px" width="19" height="19" viewBox="0 0 19 19"><circle cx="9.5" cy="9.5" r="9" fill="#3462c4"/><path d="M6.5 9.5l3-3 3 3M6.5 13l3-3 3 3" stroke="#fff" stroke-width="1.4" fill="none"/></svg>
<div class="a cjk it" style="left:10px;top:553px;height:24px;line-height:24px;font-size:12px;color:#2a48d0">开单界面</div>
<div class="a cjk it" style="left:10px;top:577px;height:24px;line-height:24px;font-size:12px;color:#2a48d0">开单工具</div>
<div class="a" style="left:2px;top:602px;width:146px;height:1px;background:#f4f4fc;"></div>
<div class="a" style="left:147px;top:552px;width:1px;height:50px;background:#f4f4fc;"></div>
<div class="a" style="left:0px;top:602px;width:150px;height:174px;background:#6c8edc;border-radius:4px 4px 0 0"></div>
<div class="a" style="left:2px;top:602px;width:146px;height:1px;background:#f8f8ff;"></div>
<div class="a" style="left:2px;top:604px;width:146px;height:171px;background:#d0d0f0;border-radius:3px 3px 0 0"></div>
<div class="a" style="left:2px;top:604px;width:41px;height:24px;background:#f0f0f0;border-top-left-radius:3px"></div>
<div class="a" style="left:43px;top:604px;width:11px;height:24px;background:#e0f0f0;"></div>
<div class="a" style="left:54px;top:604px;width:31px;height:24px;background:#e4e0f0;"></div>
<div class="a" style="left:85px;top:604px;width:22px;height:24px;background:#d0e0f0;"></div>
<div class="a" style="left:107px;top:604px;width:20px;height:24px;background:#d0d0f0;"></div>
<div class="a" style="left:127px;top:604px;width:21px;height:24px;background:#c0d0f0;"></div>
<div class="a cjk" style="left:10px;top:605px;height:24px;line-height:24px;font-size:12px;font-weight:bold;color:#2244cc">其它工具</div>
<svg class="ic" style="left:126px;top:607px" width="19" height="19" viewBox="0 0 19 19"><circle cx="9.5" cy="9.5" r="9" fill="#3462c4"/><path d="M6.5 9.5l3-3 3 3M6.5 13l3-3 3 3" stroke="#fff" stroke-width="1.4" fill="none"/></svg>
<div class="a cjk it" style="left:8px;top:629px;height:24px;line-height:24px;font-size:12px;color:#2a48d0">★百宝箱</div>
<div class="a cjk it" style="left:8px;top:653px;height:24px;line-height:24px;font-size:12px;color:#2a48d0">改快捷键</div>
<div class="a cjk it" style="left:8px;top:677px;height:24px;line-height:24px;font-size:12px;color:#2a48d0">排板工具</div>
<div class="a cjk it" style="left:8px;top:701px;height:24px;line-height:24px;font-size:12px;color:#2a48d0">※效果图</div>
<div class="a cjk it" style="left:8px;top:725px;height:24px;line-height:24px;font-size:12px;color:#2a48d0">中英互译</div>
<div class="a cjk it" style="left:8px;top:749px;height:24px;line-height:24px;font-size:12px;color:#ee1111">用户中心</div>
<div class="a" style="left:2px;top:774px;width:146px;height:1px;background:#f4f4fc;"></div>
<div class="a" style="left:147px;top:628px;width:1px;height:146px;background:#f4f4fc;"></div>
<div class="a" style="left:155px;top:58px;width:1445px;height:719px;background:#000"></div>
<svg class="a" style="left:155px;top:58px" width="1445" height="719" viewBox="155 58 1445 719" font-family="Liberation Sans, sans-serif"><g shape-rendering="crispEdges"><path d="M401.5 257.5L403.5 248.5L405.5 257.5 M402.5 254.5L404.5 254.5 M407.5 253.5L412.5 253.5 M418.5 257.5L418.5 248.5L415.5 254.5L419.5 254.5 M425.5 253.5L422.5 253.5L421.5 251.5L421.5 249.5L422.5 248.5L424.5 248.5L425.5 249.5L425.5 256.5L424.5 257.5L422.5 257.5" stroke="#00ff00" stroke-width="1" fill="none"/><path d="M401.5 278.5L403.5 269.5L405.5 278.5 M402.5 275.5L404.5 275.5 M407.5 274.5L412.5 274.5 M418.5 278.5L418.5 269.5L415.5 275.5L419.5 275.5 M422.5 269.5L424.5 269.5L425.5 270.5L425.5 277.5L424.5 278.5L422.5 278.5L421.5 277.5L421.5 270.5L422.5 269.5" stroke="#00ff00" stroke-width="1" fill="none"/><path d="M401.5 313.5L403.5 304.5L405.5 313.5 M402.5 310.5L404.5 310.5 M407.5 309.5L412.5 309.5 M415.5 305.5L416.5 304.5L418.5 304.5L419.5 305.5L419.5 307.5L418.5 309.5L417.5 309.5 M418.5 309.5L419.5 310.5L419.5 312.5L418.5 313.5L416.5 313.5L415.5 312.5 M421.5 305.5L422.5 304.5L424.5 304.5L425.5 305.5L425.5 307.5L424.5 309.5L423.5 309.5 M424.5 309.5L425.5 310.5L425.5 312.5L424.5 313.5L422.5 313.5L421.5 312.5" stroke="#00ff00" stroke-width="1" fill="none"/><path d="M401.5 348.5L403.5 339.5L405.5 348.5 M402.5 345.5L404.5 345.5 M407.5 344.5L412.5 344.5 M415.5 340.5L416.5 339.5L418.5 339.5L419.5 340.5L419.5 342.5L415.5 348.5L419.5 348.5 M424.5 348.5L424.5 339.5L421.5 345.5L425.5 345.5" stroke="#00ff00" stroke-width="1" fill="none"/><path d="M402.5 383.5L404.5 374.5L406.5 383.5 M403.5 380.5L405.5 380.5 M408.5 379.5L413.5 379.5 M416.5 376.5L418.5 374.5L418.5 383.5 M421.5 374.5L425.5 374.5L422.5 383.5" stroke="#00ff00" stroke-width="1" fill="none"/><path d="M404.5 418.5L406.5 409.5L408.5 418.5 M405.5 415.5L407.5 415.5 M410.5 414.5L415.5 414.5 M419.5 409.5L421.5 409.5L422.5 410.5L422.5 412.5L421.5 414.5L419.5 414.5L418.5 412.5L418.5 410.5L419.5 409.5 M419.5 414.5L421.5 414.5L422.5 415.5L422.5 417.5L421.5 418.5L419.5 418.5L418.5 417.5L418.5 415.5L419.5 414.5" stroke="#00ff00" stroke-width="1" fill="none"/><path d="M404.5 453.5L406.5 444.5L408.5 453.5 M405.5 450.5L407.5 450.5 M410.5 449.5L415.5 449.5 M418.5 446.5L420.5 444.5L420.5 453.5" stroke="#00ff00" stroke-width="1" fill="none"/><path d="M490.5 257.5L492.5 248.5L494.5 257.5 M491.5 254.5L493.5 254.5 M496.5 253.5L501.5 253.5 M508.5 248.5L505.5 248.5L504.5 253.5L507.5 253.5L508.5 254.5L508.5 256.5L507.5 257.5L505.5 257.5L504.5 256.5 M511.5 248.5L513.5 248.5L514.5 249.5L514.5 256.5L513.5 257.5L511.5 257.5L510.5 256.5L510.5 249.5L511.5 248.5" stroke="#00ff00" stroke-width="1" fill="none"/><path d="M549.5 257.5L551.5 248.5L553.5 257.5 M550.5 254.5L552.5 254.5 M555.5 253.5L560.5 253.5 M567.5 248.5L564.5 248.5L563.5 253.5L566.5 253.5L567.5 254.5L567.5 256.5L566.5 257.5L564.5 257.5L563.5 256.5 M569.5 250.5L571.5 248.5L571.5 257.5" stroke="#00ff00" stroke-width="1" fill="none"/><path d="M491.5 278.5L493.5 269.5L495.5 278.5 M492.5 275.5L494.5 275.5 M497.5 274.5L502.5 274.5 M508.5 278.5L508.5 269.5L505.5 275.5L509.5 275.5 M511.5 271.5L513.5 269.5L513.5 278.5" stroke="#00ff00" stroke-width="1" fill="none"/><path d="M548.5 278.5L550.5 269.5L552.5 278.5 M549.5 275.5L551.5 275.5 M554.5 274.5L559.5 274.5 M565.5 278.5L565.5 269.5L562.5 275.5L566.5 275.5 M568.5 270.5L569.5 269.5L571.5 269.5L572.5 270.5L572.5 272.5L568.5 278.5L572.5 278.5" stroke="#00ff00" stroke-width="1" fill="none"/><path d="M490.5 313.5L492.5 304.5L494.5 313.5 M491.5 310.5L493.5 310.5 M496.5 309.5L501.5 309.5 M504.5 305.5L505.5 304.5L507.5 304.5L508.5 305.5L508.5 307.5L507.5 309.5L506.5 309.5 M507.5 309.5L508.5 310.5L508.5 312.5L507.5 313.5L505.5 313.5L504.5 312.5 M513.5 313.5L513.5 304.5L510.5 310.5L514.5 310.5" stroke="#00ff00" stroke-width="1" fill="none"/><path d="M548.5 313.5L550.5 304.5L552.5 313.5 M549.5 310.5L551.5 310.5 M554.5 309.5L559.5 309.5 M562.5 305.5L563.5 304.5L565.5 304.5L566.5 305.5L566.5 307.5L565.5 309.5L564.5 309.5 M565.5 309.5L566.5 310.5L566.5 312.5L565.5 313.5L563.5 313.5L562.5 312.5 M572.5 304.5L569.5 304.5L568.5 309.5L571.5 309.5L572.5 310.5L572.5 312.5L571.5 313.5L569.5 313.5L568.5 312.5" stroke="#00ff00" stroke-width="1" fill="none"/><path d="M490.5 348.5L492.5 339.5L494.5 348.5 M491.5 345.5L493.5 345.5 M496.5 344.5L501.5 344.5 M504.5 340.5L505.5 339.5L507.5 339.5L508.5 340.5L508.5 342.5L504.5 348.5L508.5 348.5 M514.5 339.5L511.5 339.5L510.5 344.5L513.5 344.5L514.5 345.5L514.5 347.5L513.5 348.5L511.5 348.5L510.5 347.5" stroke="#00ff00" stroke-width="1" fill="none"/><path d="M548.5 348.5L550.5 339.5L552.5 348.5 M549.5 345.5L551.5 345.5 M554.5 344.5L559.5 344.5 M562.5 340.5L563.5 339.5L565.5 339.5L566.5 340.5L566.5 342.5L562.5 348.5L566.5 348.5 M572.5 339.5L569.5 339.5L568.5 341.5L568.5 347.5L569.5 348.5L571.5 348.5L572.5 347.5L572.5 345.5L571.5 344.5L568.5 344.5" stroke="#00ff00" stroke-width="1" fill="none"/><path d="M491.5 383.5L493.5 374.5L495.5 383.5 M492.5 380.5L494.5 380.5 M497.5 379.5L502.5 379.5 M505.5 376.5L507.5 374.5L507.5 383.5 M511.5 374.5L513.5 374.5L514.5 375.5L514.5 377.5L513.5 379.5L511.5 379.5L510.5 377.5L510.5 375.5L511.5 374.5 M511.5 379.5L513.5 379.5L514.5 380.5L514.5 382.5L513.5 383.5L511.5 383.5L510.5 382.5L510.5 380.5L511.5 379.5" stroke="#00ff00" stroke-width="1" fill="none"/><path d="M549.5 383.5L551.5 374.5L553.5 383.5 M550.5 380.5L552.5 380.5 M555.5 379.5L560.5 379.5 M563.5 376.5L565.5 374.5L565.5 383.5 M572.5 379.5L569.5 379.5L568.5 377.5L568.5 375.5L569.5 374.5L571.5 374.5L572.5 375.5L572.5 382.5L571.5 383.5L569.5 383.5" stroke="#00ff00" stroke-width="1" fill="none"/><path d="M494.5 418.5L496.5 409.5L498.5 418.5 M495.5 415.5L497.5 415.5 M500.5 414.5L505.5 414.5 M512.5 414.5L509.5 414.5L508.5 412.5L508.5 410.5L509.5 409.5L511.5 409.5L512.5 410.5L512.5 417.5L511.5 418.5L509.5 418.5" stroke="#00ff00" stroke-width="1" fill="none"/><path d="M549.5 418.5L551.5 409.5L553.5 418.5 M550.5 415.5L552.5 415.5 M555.5 414.5L560.5 414.5 M563.5 411.5L565.5 409.5L565.5 418.5 M569.5 409.5L571.5 409.5L572.5 410.5L572.5 417.5L571.5 418.5L569.5 418.5L568.5 417.5L568.5 410.5L569.5 409.5" stroke="#00ff00" stroke-width="1" fill="none"/><path d="M494.5 453.5L496.5 444.5L498.5 453.5 M495.5 450.5L497.5 450.5 M500.5 449.5L505.5 449.5 M508.5 445.5L509.5 444.5L511.5 444.5L512.5 445.5L512.5 447.5L508.5 453.5L512.5 453.5" stroke="#00ff00" stroke-width="1" fill="none"/><path d="M552.5 453.5L554.5 444.5L556.5 453.5 M553.5 450.5L555.5 450.5 M558.5 449.5L563.5 449.5 M566.5 445.5L567.5 444.5L569.5 444.5L570.5 445.5L570.5 447.5L569.5 449.5L568.5 449.5 M569.5 449.5L570.5 450.5L570.5 452.5L569.5 453.5L567.5 453.5L566.5 452.5" stroke="#00ff00" stroke-width="1" fill="none"/><path d="M629.5 257.5L631.5 248.5L633.5 257.5 M630.5 254.5L632.5 254.5 M635.5 253.5L640.5 253.5 M647.5 248.5L644.5 248.5L643.5 253.5L646.5 253.5L647.5 254.5L647.5 256.5L646.5 257.5L644.5 257.5L643.5 256.5 M649.5 249.5L650.5 248.5L652.5 248.5L653.5 249.5L653.5 251.5L649.5 257.5L653.5 257.5" stroke="#00ff00" stroke-width="1" fill="none"/><path d="M629.5 278.5L631.5 269.5L633.5 278.5 M630.5 275.5L632.5 275.5 M635.5 274.5L640.5 274.5 M646.5 278.5L646.5 269.5L643.5 275.5L647.5 275.5 M649.5 270.5L650.5 269.5L652.5 269.5L653.5 270.5L653.5 272.5L652.5 274.5L651.5 274.5 M652.5 274.5L653.5 275.5L653.5 277.5L652.5 278.5L650.5 278.5L649.5 277.5" stroke="#00ff00" stroke-width="1" fill="none"/><path d="M629.5 313.5L631.5 304.5L633.5 313.5 M630.5 310.5L632.5 310.5 M635.5 309.5L640.5 309.5 M643.5 305.5L644.5 304.5L646.5 304.5L647.5 305.5L647.5 307.5L646.5 309.5L645.5 309.5 M646.5 309.5L647.5 310.5L647.5 312.5L646.5 313.5L644.5 313.5L643.5 312.5 M653.5 304.5L650.5 304.5L649.5 306.5L649.5 312.5L650.5 313.5L652.5 313.5L653.5 312.5L653.5 310.5L652.5 309.5L649.5 309.5" stroke="#00ff00" stroke-width="1" fill="none"/><path d="M629.5 348.5L631.5 339.5L633.5 348.5 M630.5 345.5L632.5 345.5 M635.5 344.5L640.5 344.5 M643.5 340.5L644.5 339.5L646.5 339.5L647.5 340.5L647.5 342.5L643.5 348.5L647.5 348.5 M649.5 339.5L653.5 339.5L650.5 348.5" stroke="#00ff00" stroke-width="1" fill="none"/><path d="M629.5 383.5L631.5 374.5L633.5 383.5 M630.5 380.5L632.5 380.5 M635.5 379.5L640.5 379.5 M643.5 375.5L644.5 374.5L646.5 374.5L647.5 375.5L647.5 377.5L643.5 383.5L647.5 383.5 M650.5 374.5L652.5 374.5L653.5 375.5L653.5 382.5L652.5 383.5L650.5 383.5L649.5 382.5L649.5 375.5L650.5 374.5" stroke="#00ff00" stroke-width="1" fill="none"/><path d="M630.5 418.5L632.5 409.5L634.5 418.5 M631.5 415.5L633.5 415.5 M636.5 414.5L641.5 414.5 M644.5 411.5L646.5 409.5L646.5 418.5 M649.5 411.5L651.5 409.5L651.5 418.5" stroke="#00ff00" stroke-width="1" fill="none"/><path d="M632.5 453.5L634.5 444.5L636.5 453.5 M633.5 450.5L635.5 450.5 M638.5 449.5L643.5 449.5 M649.5 453.5L649.5 444.5L646.5 450.5L650.5 450.5" stroke="#00ff00" stroke-width="1" fill="none"/><path d="M708.5 257.5L710.5 248.5L712.5 257.5 M709.5 254.5L711.5 254.5 M714.5 253.5L719.5 253.5 M726.5 248.5L723.5 248.5L722.5 253.5L725.5 253.5L726.5 254.5L726.5 256.5L725.5 257.5L723.5 257.5L722.5 256.5 M728.5 249.5L729.5 248.5L731.5 248.5L732.5 249.5L732.5 251.5L731.5 253.5L730.5 253.5 M731.5 253.5L732.5 254.5L732.5 256.5L731.5 257.5L729.5 257.5L728.5 256.5" stroke="#00ff00" stroke-width="1" fill="none"/><path d="M764.5 257.5L766.5 248.5L768.5 257.5 M765.5 254.5L767.5 254.5 M770.5 253.5L775.5 253.5 M782.5 248.5L779.5 248.5L778.5 253.5L781.5 253.5L782.5 254.5L782.5 256.5L781.5 257.5L779.5 257.5L778.5 256.5 M787.5 257.5L787.5 248.5L784.5 254.5L788.5 254.5" stroke="#00ff00" stroke-width="1" fill="none"/><path d="M691.5 278.5L693.5 269.5L695.5 278.5 M692.5 275.5L694.5 275.5 M697.5 274.5L702.5 274.5 M708.5 278.5L708.5 269.5L705.5 275.5L709.5 275.5 M714.5 278.5L714.5 269.5L711.5 275.5L715.5 275.5" stroke="#00ff00" stroke-width="1" fill="none"/><path d="M736.5 278.5L738.5 269.5L740.5 278.5 M737.5 275.5L739.5 275.5 M742.5 274.5L747.5 274.5 M753.5 278.5L753.5 269.5L750.5 275.5L754.5 275.5 M760.5 269.5L757.5 269.5L756.5 274.5L759.5 274.5L760.5 275.5L760.5 277.5L759.5 278.5L757.5 278.5L756.5 277.5" stroke="#00ff00" stroke-width="1" fill="none"/><path d="M782.5 278.5L784.5 269.5L786.5 278.5 M783.5 275.5L785.5 275.5 M788.5 274.5L793.5 274.5 M799.5 278.5L799.5 269.5L796.5 275.5L800.5 275.5 M806.5 269.5L803.5 269.5L802.5 271.5L802.5 277.5L803.5 278.5L805.5 278.5L806.5 277.5L806.5 275.5L805.5 274.5L802.5 274.5" stroke="#00ff00" stroke-width="1" fill="none"/><path d="M708.5 313.5L710.5 304.5L712.5 313.5 M709.5 310.5L711.5 310.5 M714.5 309.5L719.5 309.5 M722.5 305.5L723.5 304.5L725.5 304.5L726.5 305.5L726.5 307.5L725.5 309.5L724.5 309.5 M725.5 309.5L726.5 310.5L726.5 312.5L725.5 313.5L723.5 313.5L722.5 312.5 M728.5 304.5L732.5 304.5L729.5 313.5" stroke="#00ff00" stroke-width="1" fill="none"/><path d="M764.5 313.5L766.5 304.5L768.5 313.5 M765.5 310.5L767.5 310.5 M770.5 309.5L775.5 309.5 M778.5 305.5L779.5 304.5L781.5 304.5L782.5 305.5L782.5 307.5L781.5 309.5L780.5 309.5 M781.5 309.5L782.5 310.5L782.5 312.5L781.5 313.5L779.5 313.5L778.5 312.5 M785.5 304.5L787.5 304.5L788.5 305.5L788.5 307.5L787.5 309.5L785.5 309.5L784.5 307.5L784.5 305.5L785.5 304.5 M785.5 309.5L787.5 309.5L788.5 310.5L788.5 312.5L787.5 313.5L785.5 313.5L784.5 312.5L784.5 310.5L785.5 309.5" stroke="#00ff00" stroke-width="1" fill="none"/><path d="M691.5 348.5L693.5 339.5L695.5 348.5 M692.5 345.5L694.5 345.5 M697.5 344.5L702.5 344.5 M705.5 340.5L706.5 339.5L708.5 339.5L709.5 340.5L709.5 342.5L705.5 348.5L709.5 348.5 M712.5 339.5L714.5 339.5L715.5 340.5L715.5 342.5L714.5 344.5L712.5 344.5L711.5 342.5L711.5 340.5L712.5 339.5 M712.5 344.5L714.5 344.5L715.5 345.5L715.5 347.5L714.5 348.5L712.5 348.5L711.5 347.5L711.5 345.5L712.5 344.5" stroke="#00ff00" stroke-width="1" fill="none"/><path d="M736.5 348.5L738.5 339.5L740.5 348.5 M737.5 345.5L739.5 345.5 M742.5 344.5L747.5 344.5 M750.5 340.5L751.5 339.5L753.5 339.5L754.5 340.5L754.5 342.5L750.5 348.5L754.5 348.5 M760.5 344.5L757.5 344.5L756.5 342.5L756.5 340.5L757.5 339.5L759.5 339.5L760.5 340.5L760.5 347.5L759.5 348.5L757.5 348.5" stroke="#00ff00" stroke-width="1" fill="none"/><path d="M782.5 348.5L784.5 339.5L786.5 348.5 M783.5 345.5L785.5 345.5 M788.5 344.5L793.5 344.5 M796.5 340.5L797.5 339.5L799.5 339.5L800.5 340.5L800.5 342.5L799.5 344.5L798.5 344.5 M799.5 344.5L800.5 345.5L800.5 347.5L799.5 348.5L797.5 348.5L796.5 347.5 M803.5 339.5L805.5 339.5L806.5 340.5L806.5 347.5L805.5 348.5L803.5 348.5L802.5 347.5L802.5 340.5L803.5 339.5" stroke="#00ff00" stroke-width="1" fill="none"/><path d="M709.5 383.5L711.5 374.5L713.5 383.5 M710.5 380.5L712.5 380.5 M715.5 379.5L720.5 379.5 M723.5 375.5L724.5 374.5L726.5 374.5L727.5 375.5L727.5 377.5L723.5 383.5L727.5 383.5 M729.5 376.5L731.5 374.5L731.5 383.5" stroke="#00ff00" stroke-width="1" fill="none"/><path d="M764.5 383.5L766.5 374.5L768.5 383.5 M765.5 380.5L767.5 380.5 M770.5 379.5L775.5 379.5 M778.5 375.5L779.5 374.5L781.5 374.5L782.5 375.5L782.5 377.5L778.5 383.5L782.5 383.5 M784.5 375.5L785.5 374.5L787.5 374.5L788.5 375.5L788.5 377.5L784.5 383.5L788.5 383.5" stroke="#00ff00" stroke-width="1" fill="none"/><path d="M692.5 418.5L694.5 409.5L696.5 418.5 M693.5 415.5L695.5 415.5 M698.5 414.5L703.5 414.5 M706.5 411.5L708.5 409.5L708.5 418.5 M711.5 410.5L712.5 409.5L714.5 409.5L715.5 410.5L715.5 412.5L711.5 418.5L715.5 418.5" stroke="#00ff00" stroke-width="1" fill="none"/><path d="M737.5 418.5L739.5 409.5L741.5 418.5 M738.5 415.5L740.5 415.5 M743.5 414.5L748.5 414.5 M751.5 411.5L753.5 409.5L753.5 418.5 M756.5 410.5L757.5 409.5L759.5 409.5L760.5 410.5L760.5 412.5L759.5 414.5L758.5 414.5 M759.5 414.5L760.5 415.5L760.5 417.5L759.5 418.5L757.5 418.5L756.5 417.5" stroke="#00ff00" stroke-width="1" fill="none"/><path d="M782.5 418.5L784.5 409.5L786.5 418.5 M783.5 415.5L785.5 415.5 M788.5 414.5L793.5 414.5 M796.5 411.5L798.5 409.5L798.5 418.5 M804.5 418.5L804.5 409.5L801.5 415.5L805.5 415.5" stroke="#00ff00" stroke-width="1" fill="none"/><path d="M712.5 453.5L714.5 444.5L716.5 453.5 M713.5 450.5L715.5 450.5 M718.5 449.5L723.5 449.5 M730.5 444.5L727.5 444.5L726.5 449.5L729.5 449.5L730.5 450.5L730.5 452.5L729.5 453.5L727.5 453.5L726.5 452.5" stroke="#00ff00" stroke-width="1" fill="none"/><path d="M767.5 453.5L769.5 444.5L771.5 453.5 M768.5 450.5L770.5 450.5 M773.5 449.5L778.5 449.5 M785.5 444.5L782.5 444.5L781.5 446.5L781.5 452.5L782.5 453.5L784.5 453.5L785.5 452.5L785.5 450.5L784.5 449.5L781.5 449.5" stroke="#00ff00" stroke-width="1" fill="none"/><path d="M864.5 257.5L866.5 248.5L868.5 257.5 M865.5 254.5L867.5 254.5 M870.5 253.5L875.5 253.5 M882.5 248.5L879.5 248.5L878.5 253.5L881.5 253.5L882.5 254.5L882.5 256.5L881.5 257.5L879.5 257.5L878.5 256.5 M888.5 248.5L885.5 248.5L884.5 253.5L887.5 253.5L888.5 254.5L888.5 256.5L887.5 257.5L885.5 257.5L884.5 256.5" stroke="#00ff00" stroke-width="1" fill="none"/><path d="M847.5 278.5L849.5 269.5L851.5 278.5 M848.5 275.5L850.5 275.5 M853.5 274.5L858.5 274.5 M864.5 278.5L864.5 269.5L861.5 275.5L865.5 275.5 M867.5 269.5L871.5 269.5L868.5 278.5" stroke="#00ff00" stroke-width="1" fill="none"/><path d="M880.5 278.5L882.5 269.5L884.5 278.5 M881.5 275.5L883.5 275.5 M886.5 274.5L891.5 274.5 M897.5 278.5L897.5 269.5L894.5 275.5L898.5 275.5 M901.5 269.5L903.5 269.5L904.5 270.5L904.5 272.5L903.5 274.5L901.5 274.5L900.5 272.5L900.5 270.5L901.5 269.5 M901.5 274.5L903.5 274.5L904.5 275.5L904.5 277.5L903.5 278.5L901.5 278.5L900.5 277.5L900.5 275.5L901.5 274.5" stroke="#00ff00" stroke-width="1" fill="none"/><path d="M864.5 313.5L866.5 304.5L868.5 313.5 M865.5 310.5L867.5 310.5 M870.5 309.5L875.5 309.5 M878.5 305.5L879.5 304.5L881.5 304.5L882.5 305.5L882.5 307.5L881.5 309.5L880.5 309.5 M881.5 309.5L882.5 310.5L882.5 312.5L881.5 313.5L879.5 313.5L878.5 312.5 M888.5 309.5L885.5 309.5L884.5 307.5L884.5 305.5L885.5 304.5L887.5 304.5L888.5 305.5L888.5 312.5L887.5 313.5L885.5 313.5" stroke="#00ff00" stroke-width="1" fill="none"/><path d="M848.5 348.5L850.5 339.5L852.5 348.5 M849.5 345.5L851.5 345.5 M854.5 344.5L859.5 344.5 M862.5 340.5L863.5 339.5L865.5 339.5L866.5 340.5L866.5 342.5L865.5 344.5L864.5 344.5 M865.5 344.5L866.5 345.5L866.5 347.5L865.5 348.5L863.5 348.5L862.5 347.5 M868.5 341.5L870.5 339.5L870.5 348.5" stroke="#00ff00" stroke-width="1" fill="none"/><path d="M880.5 348.5L882.5 339.5L884.5 348.5 M881.5 345.5L883.5 345.5 M886.5 344.5L891.5 344.5 M894.5 340.5L895.5 339.5L897.5 339.5L898.5 340.5L898.5 342.5L897.5 344.5L896.5 344.5 M897.5 344.5L898.5 345.5L898.5 347.5L897.5 348.5L895.5 348.5L894.5 347.5 M900.5 340.5L901.5 339.5L903.5 339.5L904.5 340.5L904.5 342.5L900.5 348.5L904.5 348.5" stroke="#00ff00" stroke-width="1" fill="none"/><path d="M864.5 383.5L866.5 374.5L868.5 383.5 M865.5 380.5L867.5 380.5 M870.5 379.5L875.5 379.5 M878.5 375.5L879.5 374.5L881.5 374.5L882.5 375.5L882.5 377.5L878.5 383.5L882.5 383.5 M884.5 375.5L885.5 374.5L887.5 374.5L888.5 375.5L888.5 377.5L887.5 379.5L886.5 379.5 M887.5 379.5L888.5 380.5L888.5 382.5L887.5 383.5L885.5 383.5L884.5 382.5" stroke="#00ff00" stroke-width="1" fill="none"/><path d="M848.5 418.5L850.5 409.5L852.5 418.5 M849.5 415.5L851.5 415.5 M854.5 414.5L859.5 414.5 M862.5 411.5L864.5 409.5L864.5 418.5 M871.5 409.5L868.5 409.5L867.5 414.5L870.5 414.5L871.5 415.5L871.5 417.5L870.5 418.5L868.5 418.5L867.5 417.5" stroke="#00ff00" stroke-width="1" fill="none"/><path d="M880.5 418.5L882.5 409.5L884.5 418.5 M881.5 415.5L883.5 415.5 M886.5 414.5L891.5 414.5 M894.5 411.5L896.5 409.5L896.5 418.5 M903.5 409.5L900.5 409.5L899.5 411.5L899.5 417.5L900.5 418.5L902.5 418.5L903.5 417.5L903.5 415.5L902.5 414.5L899.5 414.5" stroke="#00ff00" stroke-width="1" fill="none"/><path d="M866.5 453.5L868.5 444.5L870.5 453.5 M867.5 450.5L869.5 450.5 M872.5 449.5L877.5 449.5 M880.5 444.5L884.5 444.5L881.5 453.5" stroke="#00ff00" stroke-width="1" fill="none"/><path d="M389.5 487.5H436.5" stroke="#00ff00" stroke-width="1"/><path d="M391.5 483.5V490.5M389.5 489.5L393.5 485.5M390.5 488.5h2" stroke="#00ff00" stroke-width="1" fill="none"/><path d="M434.5 483.5V490.5M432.5 489.5L436.5 485.5M433.5 488.5h2" stroke="#00ff00" stroke-width="1" fill="none"/><path d="M409.5 487.5L409.5 480.5L407.5 485.5L410.5 485.5 M412.5 480.5L413.5 480.5L414.5 481.5L414.5 483.5L413.5 484.5L412.5 484.5L412.5 483.5L412.5 481.5L412.5 480.5 M412.5 484.5L413.5 484.5L414.5 484.5L414.5 486.5L413.5 487.5L412.5 487.5L412.5 486.5L412.5 484.5L412.5 484.5 M419.5 484.5L417.5 484.5L416.5 483.5L416.5 481.5L417.5 480.5L418.5 480.5L419.5 481.5L419.5 486.5L418.5 487.5L416.5 487.5" stroke="#ff0000" stroke-width="1" fill="none"/><path d="M471.5 484.5H591.5" stroke="#00ff00" stroke-width="1"/><path d="M473.5 480.5V487.5M471.5 486.5L475.5 482.5M472.5 485.5h2" stroke="#00ff00" stroke-width="1" fill="none"/><path d="M531.5 480.5V487.5M529.5 486.5L533.5 482.5M530.5 485.5h2" stroke="#00ff00" stroke-width="1" fill="none"/><path d="M589.5 480.5V487.5M587.5 486.5L591.5 482.5M588.5 485.5h2" stroke="#00ff00" stroke-width="1" fill="none"/><path d="M499.5 478.5L498.5 478.5L497.5 479.5L497.5 484.5L498.5 485.5L499.5 485.5L500.5 484.5L500.5 482.5L499.5 482.5L497.5 482.5 M504.5 478.5L502.5 478.5L502.5 479.5L502.5 484.5L502.5 485.5L503.5 485.5L504.5 484.5L504.5 482.5L503.5 482.5L502.5 482.5 M506.5 479.5L507.5 478.5L508.5 478.5L509.5 479.5L509.5 481.5L506.5 485.5L509.5 485.5" stroke="#ff0000" stroke-width="1" fill="none"/><path d="M557.5 478.5L556.5 478.5L555.5 479.5L555.5 484.5L556.5 485.5L557.5 485.5L558.5 484.5L558.5 482.5L557.5 482.5L555.5 482.5 M562.5 478.5L560.5 478.5L560.5 479.5L560.5 484.5L560.5 485.5L561.5 485.5L562.5 484.5L562.5 482.5L561.5 482.5L560.5 482.5 M564.5 479.5L565.5 478.5L566.5 478.5L567.5 479.5L567.5 481.5L564.5 485.5L567.5 485.5" stroke="#ff0000" stroke-width="1" fill="none"/><path d="M626.5 480.5H655.5" stroke="#00ff00" stroke-width="1"/><path d="M628.5 476.5V483.5M626.5 482.5L630.5 478.5M627.5 481.5h2" stroke="#00ff00" stroke-width="1" fill="none"/><path d="M653.5 476.5V483.5M651.5 482.5L655.5 478.5M652.5 481.5h2" stroke="#00ff00" stroke-width="1" fill="none"/><path d="M636.5 475.5L637.5 474.5L638.5 474.5L639.5 475.5L639.5 477.5L636.5 481.5L639.5 481.5 M641.5 474.5L642.5 474.5L643.5 475.5L643.5 477.5L642.5 478.5L641.5 478.5L641.5 477.5L641.5 475.5L641.5 474.5 M641.5 478.5L642.5 478.5L643.5 478.5L643.5 480.5L642.5 481.5L641.5 481.5L641.5 480.5L641.5 478.5L641.5 478.5 M645.5 475.5L646.5 474.5L646.5 481.5" stroke="#ff0000" stroke-width="1" fill="none"/><path d="M690.5 481.5H805.5" stroke="#00ff00" stroke-width="1"/><path d="M692.5 477.5V484.5M690.5 483.5L694.5 479.5M691.5 482.5h2" stroke="#00ff00" stroke-width="1" fill="none"/><path d="M748.5 477.5V484.5M746.5 483.5L750.5 479.5M747.5 482.5h2" stroke="#00ff00" stroke-width="1" fill="none"/><path d="M803.5 477.5V484.5M801.5 483.5L805.5 479.5M802.5 482.5h2" stroke="#00ff00" stroke-width="1" fill="none"/><path d="M717.5 474.5L716.5 474.5L715.5 475.5L715.5 480.5L716.5 481.5L717.5 481.5L718.5 480.5L718.5 478.5L717.5 478.5L715.5 478.5 M720.5 475.5L720.5 474.5L721.5 474.5L722.5 475.5L722.5 477.5L721.5 478.5L720.5 478.5 M721.5 478.5L722.5 478.5L722.5 480.5L721.5 481.5L720.5 481.5L720.5 480.5 M724.5 475.5L725.5 474.5L726.5 474.5L727.5 475.5L727.5 477.5L726.5 478.5L725.5 478.5 M726.5 478.5L727.5 478.5L727.5 480.5L726.5 481.5L725.5 481.5L724.5 480.5" stroke="#ff0000" stroke-width="1" fill="none"/><path d="M772.5 474.5L771.5 474.5L770.5 475.5L770.5 480.5L771.5 481.5L772.5 481.5L773.5 480.5L773.5 478.5L772.5 478.5L770.5 478.5 M775.5 475.5L775.5 474.5L776.5 474.5L777.5 475.5L777.5 477.5L776.5 478.5L775.5 478.5 M776.5 478.5L777.5 478.5L777.5 480.5L776.5 481.5L775.5 481.5L775.5 480.5 M779.5 475.5L780.5 474.5L781.5 474.5L782.5 475.5L782.5 477.5L781.5 478.5L780.5 478.5 M781.5 478.5L782.5 478.5L782.5 480.5L781.5 481.5L780.5 481.5L779.5 480.5" stroke="#ff0000" stroke-width="1" fill="none"/><path d="M840.5 485.5H910.5" stroke="#00ff00" stroke-width="1"/><path d="M842.5 481.5V488.5M840.5 487.5L844.5 483.5M841.5 486.5h2" stroke="#00ff00" stroke-width="1" fill="none"/><path d="M908.5 481.5V488.5M906.5 487.5L910.5 483.5M907.5 486.5h2" stroke="#00ff00" stroke-width="1" fill="none"/><path d="M870.5 478.5L873.5 478.5L871.5 485.5 M876.5 485.5L876.5 478.5L875.5 483.5L877.5 483.5 M879.5 478.5L882.5 478.5L880.5 485.5" stroke="#ff0000" stroke-width="1" fill="none"/><path d="M376.5 247.5V467" stroke="#00ff00" stroke-width="1"/><path d="M375.5 247.5H381.5M374.5 249.5L378.5 245.5M376.5 246.5v2" stroke="#00ff00" stroke-width="1" fill="none"/><path d="M375.5 256.3H381.5M374.5 258.3L378.5 254.3M376.5 255.3v2" stroke="#00ff00" stroke-width="1" fill="none"/><path d="M375.5 291.3H381.5M374.5 293.3L378.5 289.3M376.5 290.3v2" stroke="#00ff00" stroke-width="1" fill="none"/><path d="M375.5 326.3H381.5M374.5 328.3L378.5 324.3M376.5 325.3v2" stroke="#00ff00" stroke-width="1" fill="none"/><path d="M375.5 361.3H381.5M374.5 363.3L378.5 359.3M376.5 360.3v2" stroke="#00ff00" stroke-width="1" fill="none"/><path d="M375.5 396.3H381.5M374.5 398.3L378.5 394.3M376.5 395.3v2" stroke="#00ff00" stroke-width="1" fill="none"/><path d="M375.5 431.3H381.5M374.5 433.3L378.5 429.3M376.5 430.3v2" stroke="#00ff00" stroke-width="1" fill="none"/><path d="M375.5 466.3H381.5M374.5 468.3L378.5 464.3M376.5 465.3v2" stroke="#00ff00" stroke-width="1" fill="none"/><g transform="translate(377 273.8) rotate(-90)"><path d="M-5.5 -6.5L-5.5 -6.5L-3.5 -6.5L-3.5 -6.5L-3.5 -4.5L-3.5 -3.5L-4.5 -3.5 M-3.5 -3.5L-3.5 -2.5L-3.5 -0.5L-3.5 0.5L-5.5 0.5L-5.5 -0.5 M1.5 -3.5L-0.5 -3.5L-1.5 -4.5L-1.5 -6.5L-0.5 -6.5L0.5 -6.5L1.5 -6.5L1.5 -0.5L0.5 0.5L-0.5 0.5 M5.5 -6.5L3.5 -6.5L3.5 -3.5L5.5 -3.5L5.5 -2.5L5.5 -0.5L5.5 0.5L3.5 0.5L3.5 -0.5" stroke="#ff0000" stroke-width="1" fill="none"/></g><g transform="translate(377 308.8) rotate(-90)"><path d="M-5.5 -6.5L-5.5 -6.5L-3.5 -6.5L-3.5 -6.5L-3.5 -4.5L-3.5 -3.5L-4.5 -3.5 M-3.5 -3.5L-3.5 -2.5L-3.5 -0.5L-3.5 0.5L-5.5 0.5L-5.5 -0.5 M1.5 -3.5L-0.5 -3.5L-1.5 -4.5L-1.5 -6.5L-0.5 -6.5L0.5 -6.5L1.5 -6.5L1.5 -0.5L0.5 0.5L-0.5 0.5 M5.5 -6.5L3.5 -6.5L3.5 -3.5L5.5 -3.5L5.5 -2.5L5.5 -0.5L5.5 0.5L3.5 0.5L3.5 -0.5" stroke="#ff0000" stroke-width="1" fill="none"/></g><g transform="translate(377 343.8) rotate(-90)"><path d="M-5.5 -6.5L-5.5 -6.5L-3.5 -6.5L-3.5 -6.5L-3.5 -4.5L-3.5 -3.5L-4.5 -3.5 M-3.5 -3.5L-3.5 -2.5L-3.5 -0.5L-3.5 0.5L-5.5 0.5L-5.5 -0.5 M1.5 -3.5L-0.5 -3.5L-1.5 -4.5L-1.5 -6.5L-0.5 -6.5L0.5 -6.5L1.5 -6.5L1.5 -0.5L0.5 0.5L-0.5 0.5 M5.5 -6.5L3.5 -6.5L3.5 -3.5L5.5 -3.5L5.5 -2.5L5.5 -0.5L5.5 0.5L3.5 0.5L3.5 -0.5" stroke="#ff0000" stroke-width="1" fill="none"/></g><g transform="translate(377 378.8) rotate(-90)"><path d="M-5.5 -6.5L-5.5 -6.5L-3.5 -6.5L-3.5 -6.5L-3.5 -4.5L-3.5 -3.5L-4.5 -3.5 M-3.5 -3.5L-3.5 -2.5L-3.5 -0.5L-3.5 0.5L-5.5 0.5L-5.5 -0.5 M1.5 -3.5L-0.5 -3.5L-1.5 -4.5L-1.5 -6.5L-0.5 -6.5L0.5 -6.5L1.5 -6.5L1.5 -0.5L0.5 0.5L-0.5 0.5 M5.5 -6.5L3.5 -6.5L3.5 -3.5L5.5 -3.5L5.5 -2.5L5.5 -0.5L5.5 0.5L3.5 0.5L3.5 -0.5" stroke="#ff0000" stroke-width="1" fill="none"/></g><g transform="translate(377 413.8) rotate(-90)"><path d="M-5.5 -6.5L-5.5 -6.5L-3.5 -6.5L-3.5 -6.5L-3.5 -4.5L-3.5 -3.5L-4.5 -3.5 M-3.5 -3.5L-3.5 -2.5L-3.5 -0.5L-3.5 0.5L-5.5 0.5L-5.5 -0.5 M1.5 -3.5L-0.5 -3.5L-1.5 -4.5L-1.5 -6.5L-0.5 -6.5L0.5 -6.5L1.5 -6.5L1.5 -0.5L0.5 0.5L-0.5 0.5 M5.5 -6.5L3.5 -6.5L3.5 -3.5L5.5 -3.5L5.5 -2.5L5.5 -0.5L5.5 0.5L3.5 0.5L3.5 -0.5" stroke="#ff0000" stroke-width="1" fill="none"/></g><g transform="translate(377 448.8) rotate(-90)"><path d="M-5.5 -6.5L-5.5 -6.5L-3.5 -6.5L-3.5 -6.5L-3.5 -4.5L-3.5 -3.5L-4.5 -3.5 M-3.5 -3.5L-3.5 -2.5L-3.5 -0.5L-3.5 0.5L-5.5 0.5L-5.5 -0.5 M1.5 -3.5L-0.5 -3.5L-1.5 -4.5L-1.5 -6.5L-0.5 -6.5L0.5 -6.5L1.5 -6.5L1.5 -0.5L0.5 0.5L-0.5 0.5 M5.5 -6.5L3.5 -6.5L3.5 -3.5L5.5 -3.5L5.5 -2.5L5.5 -0.5L5.5 0.5L3.5 0.5L3.5 -0.5" stroke="#ff0000" stroke-width="1" fill="none"/></g><g transform="translate(372 244.5) rotate(-90)"><path d="M-5.5 -5.5L-4.5 -6.5L-4.5 0.5 M-0.5 -6.5L0.5 -6.5L0.5 -6.5L0.5 -0.5L0.5 0.5L-0.5 0.5L-1.5 -0.5L-1.5 -6.5L-0.5 -6.5 M3.5 -6.5L4.5 -6.5L5.5 -6.5L5.5 -0.5L4.5 0.5L3.5 0.5L2.5 -0.5L2.5 -6.5L3.5 -6.5" stroke="#ff0000" stroke-width="1" fill="none"/></g><path d="M966.5 240.5L968.5 234.5L970.5 240.5 M967.5 238.5L969.5 238.5 M971.5 237.5L975.5 237.5 M978.5 235.5L980.5 234.5L980.5 240.5" stroke="#ffff00" stroke-width="1" fill="none"/><path d="M1027.5 240.5L1027.5 234.5L1024.5 238.5L1028.5 238.5 M1030.5 234.5L1032.5 234.5L1033.5 235.5L1033.5 236.5L1032.5 237.5L1030.5 237.5L1029.5 236.5L1029.5 235.5L1030.5 234.5 M1030.5 237.5L1032.5 237.5L1033.5 238.5L1033.5 239.5L1032.5 240.5L1030.5 240.5L1029.5 239.5L1029.5 238.5L1030.5 237.5 M1038.5 237.5L1035.5 237.5L1034.5 236.5L1034.5 235.5L1035.5 234.5L1037.5 234.5L1038.5 235.5L1038.5 239.5L1037.5 240.5L1034.5 240.5" stroke="#ffff00" stroke-width="1" fill="none"/><path d="M1055.5 235.5L1056.5 234.5L1058.5 234.5L1059.5 235.5L1059.5 236.5L1058.5 237.5L1056.5 237.5 M1058.5 237.5L1059.5 238.5L1059.5 239.5L1058.5 240.5L1056.5 240.5L1055.5 239.5 M1064.5 237.5L1061.5 237.5L1060.5 236.5L1060.5 235.5L1061.5 234.5L1063.5 234.5L1064.5 235.5L1064.5 239.5L1063.5 240.5L1060.5 240.5 M1069.5 234.5L1065.5 234.5L1065.5 237.5L1068.5 237.5L1069.5 238.5L1069.5 239.5L1068.5 240.5L1066.5 240.5L1065.5 239.5" stroke="#ffff00" stroke-width="1" fill="none"/><path d="M1084.5 235.5L1086.5 234.5L1086.5 240.5 M1091.5 234.5L1089.5 234.5L1088.5 235.5L1088.5 239.5L1089.5 240.5L1091.5 240.5L1092.5 239.5L1092.5 238.5L1091.5 237.5L1088.5 237.5" stroke="#ffff00" stroke-width="1" fill="none"/><path d="M1104.5 235.5L1106.5 234.5L1106.5 240.5" stroke="#ffff00" stroke-width="1" fill="none"/><path d="M1119.5 234.5L1121.5 234.5L1122.5 235.5L1122.5 239.5L1121.5 240.5L1119.5 240.5L1118.5 239.5L1118.5 235.5L1119.5 234.5 M1123.5 239.5L1123.5 240.5 M1125.5 235.5L1127.5 234.5L1127.5 240.5 M1133.5 237.5L1130.5 237.5L1130.5 236.5L1130.5 235.5L1130.5 234.5L1132.5 234.5L1133.5 235.5L1133.5 239.5L1132.5 240.5L1130.5 240.5 M1135.5 235.5L1135.5 234.5L1137.5 234.5L1138.5 235.5L1138.5 236.5L1137.5 237.5L1136.5 237.5 M1137.5 237.5L1138.5 238.5L1138.5 239.5L1137.5 240.5L1135.5 240.5L1135.5 239.5" stroke="#ffff00" stroke-width="1" fill="none"/><path d="M966.5 251.5L968.5 245.5L970.5 251.5 M967.5 249.5L969.5 249.5 M971.5 248.5L975.5 248.5 M978.5 246.5L979.5 245.5L980.5 245.5L981.5 246.5L981.5 247.5L978.5 251.5L981.5 251.5 M983.5 249.5L984.5 248.5L985.5 249.5L986.5 248.5 M988.5 246.5L989.5 245.5L990.5 245.5L991.5 246.5L991.5 247.5L990.5 248.5L989.5 248.5 M990.5 248.5L991.5 249.5L991.5 250.5L990.5 251.5L989.5 251.5L988.5 250.5" stroke="#ffff00" stroke-width="1" fill="none"/><path d="M1027.5 245.5L1025.5 245.5L1024.5 246.5L1024.5 250.5L1025.5 251.5L1027.5 251.5L1028.5 250.5L1028.5 249.5L1027.5 248.5L1024.5 248.5 M1032.5 245.5L1030.5 245.5L1029.5 246.5L1029.5 250.5L1030.5 251.5L1032.5 251.5L1033.5 250.5L1033.5 249.5L1032.5 248.5L1029.5 248.5 M1034.5 246.5L1035.5 245.5L1037.5 245.5L1038.5 246.5L1038.5 247.5L1034.5 251.5L1038.5 251.5" stroke="#ffff00" stroke-width="1" fill="none"/><path d="M1055.5 246.5L1056.5 245.5L1058.5 245.5L1059.5 246.5L1059.5 247.5L1058.5 248.5L1056.5 248.5 M1058.5 248.5L1059.5 249.5L1059.5 250.5L1058.5 251.5L1056.5 251.5L1055.5 250.5 M1064.5 248.5L1061.5 248.5L1060.5 247.5L1060.5 246.5L1061.5 245.5L1063.5 245.5L1064.5 246.5L1064.5 250.5L1063.5 251.5L1060.5 251.5 M1069.5 245.5L1065.5 245.5L1065.5 248.5L1068.5 248.5L1069.5 249.5L1069.5 250.5L1068.5 251.5L1066.5 251.5L1065.5 250.5" stroke="#ffff00" stroke-width="1" fill="none"/><path d="M1084.5 246.5L1086.5 245.5L1086.5 251.5 M1091.5 245.5L1089.5 245.5L1088.5 246.5L1088.5 250.5L1089.5 251.5L1091.5 251.5L1092.5 250.5L1092.5 249.5L1091.5 248.5L1088.5 248.5" stroke="#ffff00" stroke-width="1" fill="none"/><path d="M1104.5 246.5L1105.5 245.5L1107.5 245.5L1108.5 246.5L1108.5 247.5L1104.5 251.5L1108.5 251.5" stroke="#ffff00" stroke-width="1" fill="none"/><path d="M1119.5 245.5L1121.5 245.5L1122.5 246.5L1122.5 250.5L1121.5 251.5L1119.5 251.5L1118.5 250.5L1118.5 246.5L1119.5 245.5 M1123.5 250.5L1123.5 251.5 M1129.5 245.5L1126.5 245.5L1125.5 248.5L1128.5 248.5L1129.5 249.5L1129.5 250.5L1128.5 251.5L1126.5 251.5L1125.5 250.5 M1130.5 246.5L1131.5 245.5L1133.5 245.5L1134.5 246.5L1134.5 247.5L1130.5 251.5L1134.5 251.5 M1135.5 246.5L1136.5 245.5L1138.5 245.5L1139.5 246.5L1139.5 247.5L1138.5 248.5L1137.5 248.5 M1138.5 248.5L1139.5 249.5L1139.5 250.5L1138.5 251.5L1136.5 251.5L1135.5 250.5" stroke="#ffff00" stroke-width="1" fill="none"/><path d="M966.5 261.5L968.5 255.5L970.5 261.5 M967.5 259.5L969.5 259.5 M971.5 258.5L975.5 258.5 M980.5 261.5L980.5 255.5L978.5 259.5L981.5 259.5" stroke="#ffff00" stroke-width="1" fill="none"/><path d="M1024.5 256.5L1025.5 255.5L1027.5 255.5L1028.5 256.5L1028.5 257.5L1027.5 258.5L1025.5 258.5 M1027.5 258.5L1028.5 259.5L1028.5 260.5L1027.5 261.5L1025.5 261.5L1024.5 260.5 M1033.5 258.5L1030.5 258.5L1029.5 257.5L1029.5 256.5L1030.5 255.5L1032.5 255.5L1033.5 256.5L1033.5 260.5L1032.5 261.5L1029.5 261.5 M1038.5 255.5L1034.5 255.5L1034.5 258.5L1037.5 258.5L1038.5 259.5L1038.5 260.5L1037.5 261.5L1035.5 261.5L1034.5 260.5" stroke="#ffff00" stroke-width="1" fill="none"/><path d="M1056.5 256.5L1057.5 255.5L1059.5 255.5L1060.5 256.5L1060.5 257.5L1056.5 261.5L1060.5 261.5 M1062.5 255.5L1064.5 255.5L1065.5 256.5L1065.5 257.5L1064.5 258.5L1062.5 258.5L1061.5 257.5L1061.5 256.5L1062.5 255.5 M1062.5 258.5L1064.5 258.5L1065.5 259.5L1065.5 260.5L1064.5 261.5L1062.5 261.5L1061.5 260.5L1061.5 259.5L1062.5 258.5 M1066.5 256.5L1068.5 255.5L1068.5 261.5" stroke="#ffff00" stroke-width="1" fill="none"/><path d="M1084.5 256.5L1086.5 255.5L1086.5 261.5 M1091.5 255.5L1089.5 255.5L1088.5 256.5L1088.5 260.5L1089.5 261.5L1091.5 261.5L1092.5 260.5L1092.5 259.5L1091.5 258.5L1088.5 258.5" stroke="#ffff00" stroke-width="1" fill="none"/><path d="M1104.5 256.5L1106.5 255.5L1106.5 261.5" stroke="#ffff00" stroke-width="1" fill="none"/><path d="M1120.5 255.5L1122.5 255.5L1123.5 256.5L1123.5 260.5L1122.5 261.5L1120.5 261.5L1119.5 260.5L1119.5 256.5L1120.5 255.5 M1124.5 260.5L1124.5 261.5 M1126.5 256.5L1128.5 255.5L1128.5 261.5 M1131.5 256.5L1132.5 255.5L1132.5 261.5 M1135.5 256.5L1136.5 255.5L1136.5 261.5" stroke="#ffff00" stroke-width="1" fill="none"/><path d="M966.5 271.5L968.5 265.5L970.5 271.5 M967.5 269.5L969.5 269.5 M971.5 268.5L975.5 268.5 M981.5 265.5L978.5 265.5L978.5 268.5L980.5 268.5L981.5 269.5L981.5 270.5L980.5 271.5L979.5 271.5L978.5 270.5 M983.5 269.5L984.5 268.5L985.5 269.5L986.5 268.5 M991.5 265.5L989.5 265.5L988.5 266.5L988.5 270.5L989.5 271.5L990.5 271.5L991.5 270.5L991.5 269.5L990.5 268.5L988.5 268.5" stroke="#ffff00" stroke-width="1" fill="none"/><path d="M1027.5 265.5L1025.5 265.5L1024.5 266.5L1024.5 270.5L1025.5 271.5L1027.5 271.5L1028.5 270.5L1028.5 269.5L1027.5 268.5L1024.5 268.5 M1029.5 266.5L1030.5 265.5L1032.5 265.5L1033.5 266.5L1033.5 267.5L1032.5 268.5L1030.5 268.5 M1032.5 268.5L1033.5 269.5L1033.5 270.5L1032.5 271.5L1030.5 271.5L1029.5 270.5 M1034.5 266.5L1035.5 265.5L1037.5 265.5L1038.5 266.5L1038.5 267.5L1037.5 268.5L1035.5 268.5 M1037.5 268.5L1038.5 269.5L1038.5 270.5L1037.5 271.5L1035.5 271.5L1034.5 270.5" stroke="#ffff00" stroke-width="1" fill="none"/><path d="M1055.5 266.5L1056.5 265.5L1058.5 265.5L1059.5 266.5L1059.5 267.5L1058.5 268.5L1056.5 268.5 M1058.5 268.5L1059.5 269.5L1059.5 270.5L1058.5 271.5L1056.5 271.5L1055.5 270.5 M1064.5 268.5L1061.5 268.5L1060.5 267.5L1060.5 266.5L1061.5 265.5L1063.5 265.5L1064.5 266.5L1064.5 270.5L1063.5 271.5L1060.5 271.5 M1069.5 265.5L1065.5 265.5L1065.5 268.5L1068.5 268.5L1069.5 269.5L1069.5 270.5L1068.5 271.5L1066.5 271.5L1065.5 270.5" stroke="#ffff00" stroke-width="1" fill="none"/><path d="M1084.5 266.5L1086.5 265.5L1086.5 271.5 M1091.5 265.5L1089.5 265.5L1088.5 266.5L1088.5 270.5L1089.5 271.5L1091.5 271.5L1092.5 270.5L1092.5 269.5L1091.5 268.5L1088.5 268.5" stroke="#ffff00" stroke-width="1" fill="none"/><path d="M1104.5 266.5L1105.5 265.5L1107.5 265.5L1108.5 266.5L1108.5 267.5L1104.5 271.5L1108.5 271.5" stroke="#ffff00" stroke-width="1" fill="none"/><path d="M1124.5 265.5L1126.5 265.5L1127.5 266.5L1127.5 270.5L1126.5 271.5L1124.5 271.5L1123.5 270.5L1123.5 266.5L1124.5 265.5 M1128.5 270.5L1128.5 271.5 M1134.5 265.5L1131.5 265.5L1130.5 268.5L1133.5 268.5L1134.5 269.5L1134.5 270.5L1133.5 271.5L1131.5 271.5L1130.5 270.5" stroke="#ffff00" stroke-width="1" fill="none"/><path d="M966.5 281.5L968.5 275.5L970.5 281.5 M967.5 279.5L969.5 279.5 M971.5 278.5L975.5 278.5 M978.5 275.5L981.5 275.5L979.5 281.5" stroke="#ffff00" stroke-width="1" fill="none"/><path d="M1024.5 275.5L1028.5 275.5L1025.5 281.5 M1032.5 281.5L1032.5 275.5L1029.5 279.5L1033.5 279.5 M1034.5 275.5L1038.5 275.5L1035.5 281.5" stroke="#ffff00" stroke-width="1" fill="none"/><path d="M1055.5 276.5L1056.5 275.5L1058.5 275.5L1059.5 276.5L1059.5 277.5L1058.5 278.5L1056.5 278.5 M1058.5 278.5L1059.5 279.5L1059.5 280.5L1058.5 281.5L1056.5 281.5L1055.5 280.5 M1064.5 278.5L1061.5 278.5L1060.5 277.5L1060.5 276.5L1061.5 275.5L1063.5 275.5L1064.5 276.5L1064.5 280.5L1063.5 281.5L1060.5 281.5 M1069.5 275.5L1065.5 275.5L1065.5 278.5L1068.5 278.5L1069.5 279.5L1069.5 280.5L1068.5 281.5L1066.5 281.5L1065.5 280.5" stroke="#ffff00" stroke-width="1" fill="none"/><path d="M1084.5 276.5L1086.5 275.5L1086.5 281.5 M1091.5 275.5L1089.5 275.5L1088.5 276.5L1088.5 280.5L1089.5 281.5L1091.5 281.5L1092.5 280.5L1092.5 279.5L1091.5 278.5L1088.5 278.5" stroke="#ffff00" stroke-width="1" fill="none"/><path d="M1104.5 276.5L1106.5 275.5L1106.5 281.5" stroke="#ffff00" stroke-width="1" fill="none"/><path d="M1119.5 275.5L1121.5 275.5L1122.5 276.5L1122.5 280.5L1121.5 281.5L1119.5 281.5L1118.5 280.5L1118.5 276.5L1119.5 275.5 M1123.5 280.5L1123.5 281.5 M1125.5 276.5L1126.5 275.5L1128.5 275.5L1129.5 276.5L1129.5 277.5L1125.5 281.5L1129.5 281.5 M1134.5 278.5L1131.5 278.5L1130.5 277.5L1130.5 276.5L1131.5 275.5L1133.5 275.5L1134.5 276.5L1134.5 280.5L1133.5 281.5L1131.5 281.5 M1139.5 275.5L1136.5 275.5L1135.5 278.5L1138.5 278.5L1139.5 279.5L1139.5 280.5L1138.5 281.5L1136.5 281.5L1135.5 280.5" stroke="#ffff00" stroke-width="1" fill="none"/><path d="M966.5 292.5L968.5 286.5L970.5 292.5 M967.5 290.5L969.5 290.5 M971.5 289.5L975.5 289.5 M979.5 286.5L980.5 286.5L981.5 287.5L981.5 288.5L980.5 289.5L979.5 289.5L978.5 288.5L978.5 287.5L979.5 286.5 M979.5 289.5L980.5 289.5L981.5 290.5L981.5 291.5L980.5 292.5L979.5 292.5L978.5 291.5L978.5 290.5L979.5 289.5" stroke="#ffff00" stroke-width="1" fill="none"/><path d="M1027.5 292.5L1027.5 286.5L1024.5 290.5L1028.5 290.5 M1030.5 286.5L1032.5 286.5L1033.5 287.5L1033.5 288.5L1032.5 289.5L1030.5 289.5L1029.5 288.5L1029.5 287.5L1030.5 286.5 M1030.5 289.5L1032.5 289.5L1033.5 290.5L1033.5 291.5L1032.5 292.5L1030.5 292.5L1029.5 291.5L1029.5 290.5L1030.5 289.5 M1038.5 289.5L1035.5 289.5L1034.5 288.5L1034.5 287.5L1035.5 286.5L1037.5 286.5L1038.5 287.5L1038.5 291.5L1037.5 292.5L1034.5 292.5" stroke="#ffff00" stroke-width="1" fill="none"/><path d="M1055.5 287.5L1056.5 286.5L1058.5 286.5L1059.5 287.5L1059.5 288.5L1058.5 289.5L1056.5 289.5 M1058.5 289.5L1059.5 290.5L1059.5 291.5L1058.5 292.5L1056.5 292.5L1055.5 291.5 M1064.5 289.5L1061.5 289.5L1060.5 288.5L1060.5 287.5L1061.5 286.5L1063.5 286.5L1064.5 287.5L1064.5 291.5L1063.5 292.5L1060.5 292.5 M1069.5 286.5L1065.5 286.5L1065.5 289.5L1068.5 289.5L1069.5 290.5L1069.5 291.5L1068.5 292.5L1066.5 292.5L1065.5 291.5" stroke="#ffff00" stroke-width="1" fill="none"/><path d="M1084.5 287.5L1086.5 286.5L1086.5 292.5 M1091.5 286.5L1089.5 286.5L1088.5 287.5L1088.5 291.5L1089.5 292.5L1091.5 292.5L1092.5 291.5L1092.5 290.5L1091.5 289.5L1088.5 289.5" stroke="#ffff00" stroke-width="1" fill="none"/><path d="M1104.5 287.5L1106.5 286.5L1106.5 292.5" stroke="#ffff00" stroke-width="1" fill="none"/><path d="M1119.5 286.5L1121.5 286.5L1122.5 287.5L1122.5 291.5L1121.5 292.5L1119.5 292.5L1118.5 291.5L1118.5 287.5L1119.5 286.5 M1123.5 291.5L1123.5 292.5 M1125.5 287.5L1127.5 286.5L1127.5 292.5 M1133.5 289.5L1130.5 289.5L1130.5 288.5L1130.5 287.5L1130.5 286.5L1132.5 286.5L1133.5 287.5L1133.5 291.5L1132.5 292.5L1130.5 292.5 M1135.5 287.5L1135.5 286.5L1137.5 286.5L1138.5 287.5L1138.5 288.5L1137.5 289.5L1136.5 289.5 M1137.5 289.5L1138.5 290.5L1138.5 291.5L1137.5 292.5L1135.5 292.5L1135.5 291.5" stroke="#ffff00" stroke-width="1" fill="none"/><path d="M966.5 302.5L968.5 296.5L970.5 302.5 M967.5 300.5L969.5 300.5 M971.5 299.5L975.5 299.5 M981.5 299.5L979.5 299.5L978.5 298.5L978.5 297.5L979.5 296.5L980.5 296.5L981.5 297.5L981.5 301.5L980.5 302.5L978.5 302.5 M983.5 300.5L984.5 299.5L985.5 300.5L986.5 299.5 M988.5 297.5L990.5 296.5L990.5 302.5 M993.5 296.5L995.5 296.5L995.5 297.5L995.5 301.5L995.5 302.5L993.5 302.5L992.5 301.5L992.5 297.5L993.5 296.5" stroke="#ffff00" stroke-width="1" fill="none"/><path d="M1027.5 296.5L1025.5 296.5L1024.5 297.5L1024.5 301.5L1025.5 302.5L1027.5 302.5L1028.5 301.5L1028.5 300.5L1027.5 299.5L1024.5 299.5 M1032.5 296.5L1030.5 296.5L1029.5 297.5L1029.5 301.5L1030.5 302.5L1032.5 302.5L1033.5 301.5L1033.5 300.5L1032.5 299.5L1029.5 299.5 M1034.5 297.5L1035.5 296.5L1037.5 296.5L1038.5 297.5L1038.5 298.5L1034.5 302.5L1038.5 302.5" stroke="#ffff00" stroke-width="1" fill="none"/><path d="M1055.5 297.5L1056.5 296.5L1058.5 296.5L1059.5 297.5L1059.5 298.5L1058.5 299.5L1056.5 299.5 M1058.5 299.5L1059.5 300.5L1059.5 301.5L1058.5 302.5L1056.5 302.5L1055.5 301.5 M1064.5 299.5L1061.5 299.5L1060.5 298.5L1060.5 297.5L1061.5 296.5L1063.5 296.5L1064.5 297.5L1064.5 301.5L1063.5 302.5L1060.5 302.5 M1069.5 296.5L1065.5 296.5L1065.5 299.5L1068.5 299.5L1069.5 300.5L1069.5 301.5L1068.5 302.5L1066.5 302.5L1065.5 301.5" stroke="#ffff00" stroke-width="1" fill="none"/><path d="M1084.5 297.5L1086.5 296.5L1086.5 302.5 M1091.5 296.5L1089.5 296.5L1088.5 297.5L1088.5 301.5L1089.5 302.5L1091.5 302.5L1092.5 301.5L1092.5 300.5L1091.5 299.5L1088.5 299.5" stroke="#ffff00" stroke-width="1" fill="none"/><path d="M1104.5 297.5L1105.5 296.5L1107.5 296.5L1108.5 297.5L1108.5 298.5L1104.5 302.5L1108.5 302.5" stroke="#ffff00" stroke-width="1" fill="none"/><path d="M1119.5 296.5L1121.5 296.5L1122.5 297.5L1122.5 301.5L1121.5 302.5L1119.5 302.5L1118.5 301.5L1118.5 297.5L1119.5 296.5 M1123.5 301.5L1123.5 302.5 M1129.5 296.5L1126.5 296.5L1125.5 299.5L1128.5 299.5L1129.5 300.5L1129.5 301.5L1128.5 302.5L1126.5 302.5L1125.5 301.5 M1130.5 297.5L1131.5 296.5L1133.5 296.5L1134.5 297.5L1134.5 298.5L1130.5 302.5L1134.5 302.5 M1135.5 297.5L1136.5 296.5L1138.5 296.5L1139.5 297.5L1139.5 298.5L1138.5 299.5L1137.5 299.5 M1138.5 299.5L1139.5 300.5L1139.5 301.5L1138.5 302.5L1136.5 302.5L1135.5 301.5" stroke="#ffff00" stroke-width="1" fill="none"/><path d="M966.5 312.5L968.5 306.5L970.5 312.5 M967.5 310.5L969.5 310.5 M971.5 309.5L975.5 309.5 M978.5 307.5L980.5 306.5L980.5 312.5 M982.5 307.5L984.5 306.5L984.5 312.5" stroke="#ffff00" stroke-width="1" fill="none"/><path d="M1024.5 307.5L1025.5 306.5L1027.5 306.5L1028.5 307.5L1028.5 308.5L1027.5 309.5L1025.5 309.5 M1027.5 309.5L1028.5 310.5L1028.5 311.5L1027.5 312.5L1025.5 312.5L1024.5 311.5 M1033.5 309.5L1030.5 309.5L1029.5 308.5L1029.5 307.5L1030.5 306.5L1032.5 306.5L1033.5 307.5L1033.5 311.5L1032.5 312.5L1029.5 312.5 M1038.5 306.5L1034.5 306.5L1034.5 309.5L1037.5 309.5L1038.5 310.5L1038.5 311.5L1037.5 312.5L1035.5 312.5L1034.5 311.5" stroke="#ffff00" stroke-width="1" fill="none"/><path d="M1056.5 307.5L1057.5 306.5L1059.5 306.5L1060.5 307.5L1060.5 308.5L1056.5 312.5L1060.5 312.5 M1062.5 306.5L1064.5 306.5L1065.5 307.5L1065.5 308.5L1064.5 309.5L1062.5 309.5L1061.5 308.5L1061.5 307.5L1062.5 306.5 M1062.5 309.5L1064.5 309.5L1065.5 310.5L1065.5 311.5L1064.5 312.5L1062.5 312.5L1061.5 311.5L1061.5 310.5L1062.5 309.5 M1066.5 307.5L1068.5 306.5L1068.5 312.5" stroke="#ffff00" stroke-width="1" fill="none"/><path d="M1084.5 307.5L1086.5 306.5L1086.5 312.5 M1091.5 306.5L1089.5 306.5L1088.5 307.5L1088.5 311.5L1089.5 312.5L1091.5 312.5L1092.5 311.5L1092.5 310.5L1091.5 309.5L1088.5 309.5" stroke="#ffff00" stroke-width="1" fill="none"/><path d="M1104.5 307.5L1106.5 306.5L1106.5 312.5" stroke="#ffff00" stroke-width="1" fill="none"/><path d="M1120.5 306.5L1122.5 306.5L1123.5 307.5L1123.5 311.5L1122.5 312.5L1120.5 312.5L1119.5 311.5L1119.5 307.5L1120.5 306.5 M1124.5 311.5L1124.5 312.5 M1126.5 307.5L1128.5 306.5L1128.5 312.5 M1131.5 307.5L1132.5 306.5L1132.5 312.5 M1135.5 307.5L1136.5 306.5L1136.5 312.5" stroke="#ffff00" stroke-width="1" fill="none"/><path d="M966.5 322.5L968.5 316.5L970.5 322.5 M967.5 320.5L969.5 320.5 M971.5 319.5L975.5 319.5 M978.5 317.5L980.5 316.5L980.5 322.5 M982.5 317.5L983.5 316.5L985.5 316.5L985.5 317.5L985.5 318.5L982.5 322.5L985.5 322.5" stroke="#ffff00" stroke-width="1" fill="none"/><path d="M1024.5 317.5L1025.5 316.5L1027.5 316.5L1028.5 317.5L1028.5 318.5L1027.5 319.5L1025.5 319.5 M1027.5 319.5L1028.5 320.5L1028.5 321.5L1027.5 322.5L1025.5 322.5L1024.5 321.5 M1033.5 319.5L1030.5 319.5L1029.5 318.5L1029.5 317.5L1030.5 316.5L1032.5 316.5L1033.5 317.5L1033.5 321.5L1032.5 322.5L1029.5 322.5 M1038.5 316.5L1034.5 316.5L1034.5 319.5L1037.5 319.5L1038.5 320.5L1038.5 321.5L1037.5 322.5L1035.5 322.5L1034.5 321.5" stroke="#ffff00" stroke-width="1" fill="none"/><path d="M1055.5 317.5L1056.5 316.5L1058.5 316.5L1059.5 317.5L1059.5 318.5L1055.5 322.5L1059.5 322.5 M1060.5 317.5L1061.5 316.5L1063.5 316.5L1064.5 317.5L1064.5 318.5L1063.5 319.5L1061.5 319.5 M1063.5 319.5L1064.5 320.5L1064.5 321.5L1063.5 322.5L1061.5 322.5L1060.5 321.5 M1065.5 317.5L1066.5 316.5L1068.5 316.5L1069.5 317.5L1069.5 318.5L1068.5 319.5L1066.5 319.5 M1068.5 319.5L1069.5 320.5L1069.5 321.5L1068.5 322.5L1066.5 322.5L1065.5 321.5" stroke="#ffff00" stroke-width="1" fill="none"/><path d="M1084.5 317.5L1086.5 316.5L1086.5 322.5 M1091.5 316.5L1089.5 316.5L1088.5 317.5L1088.5 321.5L1089.5 322.5L1091.5 322.5L1092.5 321.5L1092.5 320.5L1091.5 319.5L1088.5 319.5" stroke="#ffff00" stroke-width="1" fill="none"/><path d="M1104.5 317.5L1106.5 316.5L1106.5 322.5" stroke="#ffff00" stroke-width="1" fill="none"/><path d="M1119.5 316.5L1121.5 316.5L1122.5 317.5L1122.5 321.5L1121.5 322.5L1119.5 322.5L1118.5 321.5L1118.5 317.5L1119.5 316.5 M1123.5 321.5L1123.5 322.5 M1126.5 316.5L1128.5 316.5L1129.5 317.5L1129.5 321.5L1128.5 322.5L1126.5 322.5L1125.5 321.5L1125.5 317.5L1126.5 316.5 M1134.5 319.5L1131.5 319.5L1130.5 318.5L1130.5 317.5L1131.5 316.5L1133.5 316.5L1134.5 317.5L1134.5 321.5L1133.5 322.5L1131.5 322.5 M1135.5 317.5L1136.5 316.5L1138.5 316.5L1139.5 317.5L1139.5 318.5L1135.5 322.5L1139.5 322.5" stroke="#ffff00" stroke-width="1" fill="none"/><path d="M966.5 333.5L968.5 327.5L970.5 333.5 M967.5 331.5L969.5 331.5 M971.5 330.5L975.5 330.5 M978.5 328.5L980.5 327.5L980.5 333.5 M982.5 328.5L983.5 327.5L985.5 327.5L985.5 328.5L985.5 329.5L985.5 330.5L983.5 330.5 M985.5 330.5L985.5 331.5L985.5 332.5L985.5 333.5L983.5 333.5L982.5 332.5" stroke="#ffff00" stroke-width="1" fill="none"/><path d="M1024.5 327.5L1028.5 327.5L1025.5 333.5 M1033.5 330.5L1030.5 330.5L1029.5 329.5L1029.5 328.5L1030.5 327.5L1032.5 327.5L1033.5 328.5L1033.5 332.5L1032.5 333.5L1029.5 333.5 M1038.5 327.5L1034.5 327.5L1034.5 330.5L1037.5 330.5L1038.5 331.5L1038.5 332.5L1037.5 333.5L1035.5 333.5L1034.5 332.5" stroke="#ffff00" stroke-width="1" fill="none"/><path d="M1055.5 328.5L1056.5 327.5L1058.5 327.5L1059.5 328.5L1059.5 329.5L1058.5 330.5L1056.5 330.5 M1058.5 330.5L1059.5 331.5L1059.5 332.5L1058.5 333.5L1056.5 333.5L1055.5 332.5 M1064.5 330.5L1061.5 330.5L1060.5 329.5L1060.5 328.5L1061.5 327.5L1063.5 327.5L1064.5 328.5L1064.5 332.5L1063.5 333.5L1060.5 333.5 M1069.5 327.5L1065.5 327.5L1065.5 330.5L1068.5 330.5L1069.5 331.5L1069.5 332.5L1068.5 333.5L1066.5 333.5L1065.5 332.5" stroke="#ffff00" stroke-width="1" fill="none"/><path d="M1084.5 328.5L1086.5 327.5L1086.5 333.5 M1091.5 327.5L1089.5 327.5L1088.5 328.5L1088.5 332.5L1089.5 333.5L1091.5 333.5L1092.5 332.5L1092.5 331.5L1091.5 330.5L1088.5 330.5" stroke="#ffff00" stroke-width="1" fill="none"/><path d="M1104.5 328.5L1106.5 327.5L1106.5 333.5" stroke="#ffff00" stroke-width="1" fill="none"/><path d="M1119.5 327.5L1121.5 327.5L1122.5 328.5L1122.5 332.5L1121.5 333.5L1119.5 333.5L1118.5 332.5L1118.5 328.5L1119.5 327.5 M1123.5 332.5L1123.5 333.5 M1125.5 328.5L1126.5 327.5L1128.5 327.5L1129.5 328.5L1129.5 329.5L1128.5 330.5L1127.5 330.5 M1128.5 330.5L1129.5 331.5L1129.5 332.5L1128.5 333.5L1126.5 333.5L1125.5 332.5 M1130.5 328.5L1132.5 327.5L1132.5 333.5 M1137.5 333.5L1137.5 327.5L1135.5 331.5L1138.5 331.5" stroke="#ffff00" stroke-width="1" fill="none"/><path d="M966.5 343.5L968.5 337.5L970.5 343.5 M967.5 341.5L969.5 341.5 M971.5 340.5L975.5 340.5 M978.5 338.5L980.5 337.5L980.5 343.5 M985.5 343.5L985.5 337.5L982.5 341.5L985.5 341.5" stroke="#ffff00" stroke-width="1" fill="none"/><path d="M1024.5 338.5L1025.5 337.5L1027.5 337.5L1028.5 338.5L1028.5 339.5L1027.5 340.5L1025.5 340.5 M1027.5 340.5L1028.5 341.5L1028.5 342.5L1027.5 343.5L1025.5 343.5L1024.5 342.5 M1033.5 340.5L1030.5 340.5L1029.5 339.5L1029.5 338.5L1030.5 337.5L1032.5 337.5L1033.5 338.5L1033.5 342.5L1032.5 343.5L1029.5 343.5 M1038.5 337.5L1034.5 337.5L1034.5 340.5L1037.5 340.5L1038.5 341.5L1038.5 342.5L1037.5 343.5L1035.5 343.5L1034.5 342.5" stroke="#ffff00" stroke-width="1" fill="none"/><path d="M1055.5 338.5L1056.5 337.5L1058.5 337.5L1059.5 338.5L1059.5 339.5L1055.5 343.5L1059.5 343.5 M1060.5 338.5L1061.5 337.5L1063.5 337.5L1064.5 338.5L1064.5 339.5L1063.5 340.5L1061.5 340.5 M1063.5 340.5L1064.5 341.5L1064.5 342.5L1063.5 343.5L1061.5 343.5L1060.5 342.5 M1065.5 338.5L1066.5 337.5L1068.5 337.5L1069.5 338.5L1069.5 339.5L1068.5 340.5L1066.5 340.5 M1068.5 340.5L1069.5 341.5L1069.5 342.5L1068.5 343.5L1066.5 343.5L1065.5 342.5" stroke="#ffff00" stroke-width="1" fill="none"/><path d="M1084.5 338.5L1086.5 337.5L1086.5 343.5 M1091.5 337.5L1089.5 337.5L1088.5 338.5L1088.5 342.5L1089.5 343.5L1091.5 343.5L1092.5 342.5L1092.5 341.5L1091.5 340.5L1088.5 340.5" stroke="#ffff00" stroke-width="1" fill="none"/><path d="M1104.5 338.5L1106.5 337.5L1106.5 343.5" stroke="#ffff00" stroke-width="1" fill="none"/><path d="M1119.5 337.5L1121.5 337.5L1122.5 338.5L1122.5 342.5L1121.5 343.5L1119.5 343.5L1118.5 342.5L1118.5 338.5L1119.5 337.5 M1123.5 342.5L1123.5 343.5 M1126.5 337.5L1128.5 337.5L1129.5 338.5L1129.5 342.5L1128.5 343.5L1126.5 343.5L1125.5 342.5L1125.5 338.5L1126.5 337.5 M1134.5 340.5L1131.5 340.5L1130.5 339.5L1130.5 338.5L1131.5 337.5L1133.5 337.5L1134.5 338.5L1134.5 342.5L1133.5 343.5L1131.5 343.5 M1135.5 338.5L1136.5 337.5L1138.5 337.5L1139.5 338.5L1139.5 339.5L1135.5 343.5L1139.5 343.5" stroke="#ffff00" stroke-width="1" fill="none"/><path d="M966.5 353.5L968.5 347.5L970.5 353.5 M967.5 351.5L969.5 351.5 M971.5 350.5L975.5 350.5 M978.5 348.5L980.5 347.5L980.5 353.5 M985.5 347.5L982.5 347.5L982.5 350.5L985.5 350.5L985.5 351.5L985.5 352.5L985.5 353.5L983.5 353.5L982.5 352.5 M987.5 351.5L988.5 350.5L989.5 351.5L990.5 350.5 M992.5 348.5L994.5 347.5L994.5 353.5 M999.5 347.5L997.5 347.5L996.5 348.5L996.5 352.5L997.5 353.5L999.5 353.5L1000.5 352.5L1000.5 351.5L999.5 350.5L996.5 350.5" stroke="#ffff00" stroke-width="1" fill="none"/><path d="M1024.5 348.5L1025.5 347.5L1027.5 347.5L1028.5 348.5L1028.5 349.5L1027.5 350.5L1025.5 350.5 M1027.5 350.5L1028.5 351.5L1028.5 352.5L1027.5 353.5L1025.5 353.5L1024.5 352.5 M1033.5 350.5L1030.5 350.5L1029.5 349.5L1029.5 348.5L1030.5 347.5L1032.5 347.5L1033.5 348.5L1033.5 352.5L1032.5 353.5L1029.5 353.5 M1038.5 347.5L1034.5 347.5L1034.5 350.5L1037.5 350.5L1038.5 351.5L1038.5 352.5L1037.5 353.5L1035.5 353.5L1034.5 352.5" stroke="#ffff00" stroke-width="1" fill="none"/><path d="M1056.5 348.5L1057.5 347.5L1059.5 347.5L1060.5 348.5L1060.5 349.5L1059.5 350.5L1057.5 350.5 M1059.5 350.5L1060.5 351.5L1060.5 352.5L1059.5 353.5L1057.5 353.5L1056.5 352.5 M1061.5 347.5L1065.5 347.5L1062.5 353.5 M1066.5 348.5L1068.5 347.5L1068.5 353.5" stroke="#ffff00" stroke-width="1" fill="none"/><path d="M1084.5 348.5L1086.5 347.5L1086.5 353.5 M1091.5 347.5L1089.5 347.5L1088.5 348.5L1088.5 352.5L1089.5 353.5L1091.5 353.5L1092.5 352.5L1092.5 351.5L1091.5 350.5L1088.5 350.5" stroke="#ffff00" stroke-width="1" fill="none"/><path d="M1104.5 348.5L1105.5 347.5L1107.5 347.5L1108.5 348.5L1108.5 349.5L1104.5 353.5L1108.5 353.5" stroke="#ffff00" stroke-width="1" fill="none"/><path d="M1119.5 347.5L1121.5 347.5L1122.5 348.5L1122.5 352.5L1121.5 353.5L1119.5 353.5L1118.5 352.5L1118.5 348.5L1119.5 347.5 M1123.5 352.5L1123.5 353.5 M1125.5 348.5L1126.5 347.5L1128.5 347.5L1129.5 348.5L1129.5 349.5L1125.5 353.5L1129.5 353.5 M1134.5 350.5L1131.5 350.5L1130.5 349.5L1130.5 348.5L1131.5 347.5L1133.5 347.5L1134.5 348.5L1134.5 352.5L1133.5 353.5L1131.5 353.5 M1135.5 348.5L1136.5 347.5L1138.5 347.5L1139.5 348.5L1139.5 349.5L1138.5 350.5L1137.5 350.5 M1138.5 350.5L1139.5 351.5L1139.5 352.5L1138.5 353.5L1136.5 353.5L1135.5 352.5" stroke="#ffff00" stroke-width="1" fill="none"/><path d="M966.5 363.5L968.5 357.5L970.5 363.5 M967.5 361.5L969.5 361.5 M971.5 360.5L975.5 360.5 M978.5 358.5L980.5 357.5L980.5 363.5 M982.5 357.5L985.5 357.5L983.5 363.5" stroke="#ffff00" stroke-width="1" fill="none"/><path d="M1027.5 363.5L1027.5 357.5L1024.5 361.5L1028.5 361.5 M1030.5 357.5L1032.5 357.5L1033.5 358.5L1033.5 359.5L1032.5 360.5L1030.5 360.5L1029.5 359.5L1029.5 358.5L1030.5 357.5 M1030.5 360.5L1032.5 360.5L1033.5 361.5L1033.5 362.5L1032.5 363.5L1030.5 363.5L1029.5 362.5L1029.5 361.5L1030.5 360.5 M1038.5 360.5L1035.5 360.5L1034.5 359.5L1034.5 358.5L1035.5 357.5L1037.5 357.5L1038.5 358.5L1038.5 362.5L1037.5 363.5L1034.5 363.5" stroke="#ffff00" stroke-width="1" fill="none"/><path d="M1055.5 358.5L1056.5 357.5L1058.5 357.5L1059.5 358.5L1059.5 359.5L1058.5 360.5L1056.5 360.5 M1058.5 360.5L1059.5 361.5L1059.5 362.5L1058.5 363.5L1056.5 363.5L1055.5 362.5 M1064.5 360.5L1061.5 360.5L1060.5 359.5L1060.5 358.5L1061.5 357.5L1063.5 357.5L1064.5 358.5L1064.5 362.5L1063.5 363.5L1060.5 363.5 M1069.5 357.5L1065.5 357.5L1065.5 360.5L1068.5 360.5L1069.5 361.5L1069.5 362.5L1068.5 363.5L1066.5 363.5L1065.5 362.5" stroke="#ffff00" stroke-width="1" fill="none"/><path d="M1084.5 358.5L1086.5 357.5L1086.5 363.5 M1091.5 357.5L1089.5 357.5L1088.5 358.5L1088.5 362.5L1089.5 363.5L1091.5 363.5L1092.5 362.5L1092.5 361.5L1091.5 360.5L1088.5 360.5" stroke="#ffff00" stroke-width="1" fill="none"/><path d="M1104.5 358.5L1106.5 357.5L1106.5 363.5" stroke="#ffff00" stroke-width="1" fill="none"/><path d="M1119.5 357.5L1121.5 357.5L1122.5 358.5L1122.5 362.5L1121.5 363.5L1119.5 363.5L1118.5 362.5L1118.5 358.5L1119.5 357.5 M1123.5 362.5L1123.5 363.5 M1125.5 358.5L1127.5 357.5L1127.5 363.5 M1133.5 360.5L1130.5 360.5L1130.5 359.5L1130.5 358.5L1130.5 357.5L1132.5 357.5L1133.5 358.5L1133.5 362.5L1132.5 363.5L1130.5 363.5 M1135.5 358.5L1135.5 357.5L1137.5 357.5L1138.5 358.5L1138.5 359.5L1137.5 360.5L1136.5 360.5 M1137.5 360.5L1138.5 361.5L1138.5 362.5L1137.5 363.5L1135.5 363.5L1135.5 362.5" stroke="#ffff00" stroke-width="1" fill="none"/><path d="M966.5 374.5L968.5 368.5L970.5 374.5 M967.5 372.5L969.5 372.5 M971.5 371.5L975.5 371.5 M978.5 369.5L980.5 368.5L980.5 374.5 M983.5 368.5L985.5 368.5L985.5 369.5L985.5 370.5L985.5 371.5L983.5 371.5L982.5 370.5L982.5 369.5L983.5 368.5 M983.5 371.5L985.5 371.5L985.5 372.5L985.5 373.5L985.5 374.5L983.5 374.5L982.5 373.5L982.5 372.5L983.5 371.5 M987.5 372.5L988.5 371.5L989.5 372.5L990.5 371.5 M992.5 369.5L994.5 368.5L994.5 374.5 M1000.5 371.5L997.5 371.5L996.5 370.5L996.5 369.5L997.5 368.5L999.5 368.5L1000.5 369.5L1000.5 373.5L999.5 374.5L996.5 374.5" stroke="#ffff00" stroke-width="1" fill="none"/><path d="M1027.5 368.5L1025.5 368.5L1024.5 369.5L1024.5 373.5L1025.5 374.5L1027.5 374.5L1028.5 373.5L1028.5 372.5L1027.5 371.5L1024.5 371.5 M1032.5 368.5L1030.5 368.5L1029.5 369.5L1029.5 373.5L1030.5 374.5L1032.5 374.5L1033.5 373.5L1033.5 372.5L1032.5 371.5L1029.5 371.5 M1034.5 369.5L1035.5 368.5L1037.5 368.5L1038.5 369.5L1038.5 370.5L1034.5 374.5L1038.5 374.5" stroke="#ffff00" stroke-width="1" fill="none"/><path d="M1055.5 369.5L1056.5 368.5L1058.5 368.5L1059.5 369.5L1059.5 370.5L1058.5 371.5L1056.5 371.5 M1058.5 371.5L1059.5 372.5L1059.5 373.5L1058.5 374.5L1056.5 374.5L1055.5 373.5 M1064.5 371.5L1061.5 371.5L1060.5 370.5L1060.5 369.5L1061.5 368.5L1063.5 368.5L1064.5 369.5L1064.5 373.5L1063.5 374.5L1060.5 374.5 M1069.5 368.5L1065.5 368.5L1065.5 371.5L1068.5 371.5L1069.5 372.5L1069.5 373.5L1068.5 374.5L1066.5 374.5L1065.5 373.5" stroke="#ffff00" stroke-width="1" fill="none"/><path d="M1084.5 369.5L1086.5 368.5L1086.5 374.5 M1091.5 368.5L1089.5 368.5L1088.5 369.5L1088.5 373.5L1089.5 374.5L1091.5 374.5L1092.5 373.5L1092.5 372.5L1091.5 371.5L1088.5 371.5" stroke="#ffff00" stroke-width="1" fill="none"/><path d="M1104.5 369.5L1105.5 368.5L1107.5 368.5L1108.5 369.5L1108.5 370.5L1104.5 374.5L1108.5 374.5" stroke="#ffff00" stroke-width="1" fill="none"/><path d="M1119.5 368.5L1121.5 368.5L1122.5 369.5L1122.5 373.5L1121.5 374.5L1119.5 374.5L1118.5 373.5L1118.5 369.5L1119.5 368.5 M1123.5 373.5L1123.5 374.5 M1129.5 368.5L1126.5 368.5L1125.5 371.5L1128.5 371.5L1129.5 372.5L1129.5 373.5L1128.5 374.5L1126.5 374.5L1125.5 373.5 M1130.5 369.5L1131.5 368.5L1133.5 368.5L1134.5 369.5L1134.5 370.5L1130.5 374.5L1134.5 374.5 M1135.5 369.5L1136.5 368.5L1138.5 368.5L1139.5 369.5L1139.5 370.5L1138.5 371.5L1137.5 371.5 M1138.5 371.5L1139.5 372.5L1139.5 373.5L1138.5 374.5L1136.5 374.5L1135.5 373.5" stroke="#ffff00" stroke-width="1" fill="none"/><path d="M966.5 384.5L968.5 378.5L970.5 384.5 M967.5 382.5L969.5 382.5 M971.5 381.5L975.5 381.5 M978.5 379.5L979.5 378.5L980.5 378.5L981.5 379.5L981.5 380.5L978.5 384.5L981.5 384.5 M984.5 378.5L985.5 378.5L986.5 379.5L986.5 383.5L985.5 384.5L984.5 384.5L983.5 383.5L983.5 379.5L984.5 378.5" stroke="#ffff00" stroke-width="1" fill="none"/><path d="M1024.5 379.5L1025.5 378.5L1027.5 378.5L1028.5 379.5L1028.5 380.5L1027.5 381.5L1025.5 381.5 M1027.5 381.5L1028.5 382.5L1028.5 383.5L1027.5 384.5L1025.5 384.5L1024.5 383.5 M1033.5 381.5L1030.5 381.5L1029.5 380.5L1029.5 379.5L1030.5 378.5L1032.5 378.5L1033.5 379.5L1033.5 383.5L1032.5 384.5L1029.5 384.5 M1038.5 378.5L1034.5 378.5L1034.5 381.5L1037.5 381.5L1038.5 382.5L1038.5 383.5L1037.5 384.5L1035.5 384.5L1034.5 383.5" stroke="#ffff00" stroke-width="1" fill="none"/><path d="M1056.5 379.5L1057.5 378.5L1059.5 378.5L1060.5 379.5L1060.5 380.5L1056.5 384.5L1060.5 384.5 M1062.5 378.5L1064.5 378.5L1065.5 379.5L1065.5 380.5L1064.5 381.5L1062.5 381.5L1061.5 380.5L1061.5 379.5L1062.5 378.5 M1062.5 381.5L1064.5 381.5L1065.5 382.5L1065.5 383.5L1064.5 384.5L1062.5 384.5L1061.5 383.5L1061.5 382.5L1062.5 381.5 M1066.5 379.5L1068.5 378.5L1068.5 384.5" stroke="#ffff00" stroke-width="1" fill="none"/><path d="M1084.5 379.5L1086.5 378.5L1086.5 384.5 M1091.5 378.5L1089.5 378.5L1088.5 379.5L1088.5 383.5L1089.5 384.5L1091.5 384.5L1092.5 383.5L1092.5 382.5L1091.5 381.5L1088.5 381.5" stroke="#ffff00" stroke-width="1" fill="none"/><path d="M1104.5 379.5L1106.5 378.5L1106.5 384.5" stroke="#ffff00" stroke-width="1" fill="none"/><path d="M1120.5 378.5L1122.5 378.5L1123.5 379.5L1123.5 383.5L1122.5 384.5L1120.5 384.5L1119.5 383.5L1119.5 379.5L1120.5 378.5 M1124.5 383.5L1124.5 384.5 M1126.5 379.5L1128.5 378.5L1128.5 384.5 M1131.5 379.5L1132.5 378.5L1132.5 384.5 M1135.5 379.5L1136.5 378.5L1136.5 384.5" stroke="#ffff00" stroke-width="1" fill="none"/><path d="M966.5 394.5L968.5 388.5L970.5 394.5 M967.5 392.5L969.5 392.5 M971.5 391.5L975.5 391.5 M978.5 389.5L979.5 388.5L980.5 388.5L981.5 389.5L981.5 390.5L978.5 394.5L981.5 394.5 M983.5 389.5L985.5 388.5L985.5 394.5 M987.5 392.5L988.5 391.5L989.5 392.5L990.5 391.5 M992.5 389.5L993.5 388.5L995.5 388.5L995.5 389.5L995.5 390.5L992.5 394.5L995.5 394.5 M997.5 389.5L998.5 388.5L1000.5 388.5L1000.5 389.5L1000.5 390.5L997.5 394.5L1000.5 394.5" stroke="#ffff00" stroke-width="1" fill="none"/><path d="M1027.5 388.5L1025.5 388.5L1024.5 389.5L1024.5 393.5L1025.5 394.5L1027.5 394.5L1028.5 393.5L1028.5 392.5L1027.5 391.5L1024.5 391.5 M1029.5 389.5L1030.5 388.5L1032.5 388.5L1033.5 389.5L1033.5 390.5L1032.5 391.5L1030.5 391.5 M1032.5 391.5L1033.5 392.5L1033.5 393.5L1032.5 394.5L1030.5 394.5L1029.5 393.5 M1034.5 389.5L1035.5 388.5L1037.5 388.5L1038.5 389.5L1038.5 390.5L1037.5 391.5L1035.5 391.5 M1037.5 391.5L1038.5 392.5L1038.5 393.5L1037.5 394.5L1035.5 394.5L1034.5 393.5" stroke="#ffff00" stroke-width="1" fill="none"/><path d="M1055.5 389.5L1056.5 388.5L1058.5 388.5L1059.5 389.5L1059.5 390.5L1058.5 391.5L1056.5 391.5 M1058.5 391.5L1059.5 392.5L1059.5 393.5L1058.5 394.5L1056.5 394.5L1055.5 393.5 M1064.5 391.5L1061.5 391.5L1060.5 390.5L1060.5 389.5L1061.5 388.5L1063.5 388.5L1064.5 389.5L1064.5 393.5L1063.5 394.5L1060.5 394.5 M1069.5 388.5L1065.5 388.5L1065.5 391.5L1068.5 391.5L1069.5 392.5L1069.5 393.5L1068.5 394.5L1066.5 394.5L1065.5 393.5" stroke="#ffff00" stroke-width="1" fill="none"/><path d="M1084.5 389.5L1086.5 388.5L1086.5 394.5 M1091.5 388.5L1089.5 388.5L1088.5 389.5L1088.5 393.5L1089.5 394.5L1091.5 394.5L1092.5 393.5L1092.5 392.5L1091.5 391.5L1088.5 391.5" stroke="#ffff00" stroke-width="1" fill="none"/><path d="M1104.5 389.5L1105.5 388.5L1107.5 388.5L1108.5 389.5L1108.5 390.5L1104.5 394.5L1108.5 394.5" stroke="#ffff00" stroke-width="1" fill="none"/><path d="M1124.5 388.5L1126.5 388.5L1127.5 389.5L1127.5 393.5L1126.5 394.5L1124.5 394.5L1123.5 393.5L1123.5 389.5L1124.5 388.5 M1128.5 393.5L1128.5 394.5 M1134.5 388.5L1131.5 388.5L1130.5 391.5L1133.5 391.5L1134.5 392.5L1134.5 393.5L1133.5 394.5L1131.5 394.5L1130.5 393.5" stroke="#ffff00" stroke-width="1" fill="none"/><path d="M966.5 404.5L968.5 398.5L970.5 404.5 M967.5 402.5L969.5 402.5 M971.5 401.5L975.5 401.5 M978.5 399.5L979.5 398.5L980.5 398.5L981.5 399.5L981.5 400.5L978.5 404.5L981.5 404.5 M983.5 399.5L984.5 398.5L985.5 398.5L986.5 399.5L986.5 400.5L985.5 401.5L984.5 401.5 M985.5 401.5L986.5 402.5L986.5 403.5L985.5 404.5L984.5 404.5L983.5 403.5" stroke="#ffff00" stroke-width="1" fill="none"/><path d="M1024.5 398.5L1028.5 398.5L1025.5 404.5 M1032.5 404.5L1032.5 398.5L1029.5 402.5L1033.5 402.5 M1034.5 398.5L1038.5 398.5L1035.5 404.5" stroke="#ffff00" stroke-width="1" fill="none"/><path d="M1055.5 399.5L1056.5 398.5L1058.5 398.5L1059.5 399.5L1059.5 400.5L1058.5 401.5L1056.5 401.5 M1058.5 401.5L1059.5 402.5L1059.5 403.5L1058.5 404.5L1056.5 404.5L1055.5 403.5 M1064.5 401.5L1061.5 401.5L1060.5 400.5L1060.5 399.5L1061.5 398.5L1063.5 398.5L1064.5 399.5L1064.5 403.5L1063.5 404.5L1060.5 404.5 M1069.5 398.5L1065.5 398.5L1065.5 401.5L1068.5 401.5L1069.5 402.5L1069.5 403.5L1068.5 404.5L1066.5 404.5L1065.5 403.5" stroke="#ffff00" stroke-width="1" fill="none"/><path d="M1084.5 399.5L1086.5 398.5L1086.5 404.5 M1091.5 398.5L1089.5 398.5L1088.5 399.5L1088.5 403.5L1089.5 404.5L1091.5 404.5L1092.5 403.5L1092.5 402.5L1091.5 401.5L1088.5 401.5" stroke="#ffff00" stroke-width="1" fill="none"/><path d="M1104.5 399.5L1106.5 398.5L1106.5 404.5" stroke="#ffff00" stroke-width="1" fill="none"/><path d="M1119.5 398.5L1121.5 398.5L1122.5 399.5L1122.5 403.5L1121.5 404.5L1119.5 404.5L1118.5 403.5L1118.5 399.5L1119.5 398.5 M1123.5 403.5L1123.5 404.5 M1125.5 399.5L1126.5 398.5L1128.5 398.5L1129.5 399.5L1129.5 400.5L1125.5 404.5L1129.5 404.5 M1134.5 401.5L1131.5 401.5L1130.5 400.5L1130.5 399.5L1131.5 398.5L1133.5 398.5L1134.5 399.5L1134.5 403.5L1133.5 404.5L1131.5 404.5 M1139.5 398.5L1136.5 398.5L1135.5 401.5L1138.5 401.5L1139.5 402.5L1139.5 403.5L1138.5 404.5L1136.5 404.5L1135.5 403.5" stroke="#ffff00" stroke-width="1" fill="none"/><path d="M966.5 414.5L968.5 408.5L970.5 414.5 M967.5 412.5L969.5 412.5 M971.5 411.5L975.5 411.5 M978.5 409.5L979.5 408.5L980.5 408.5L981.5 409.5L981.5 410.5L978.5 414.5L981.5 414.5 M985.5 414.5L985.5 408.5L983.5 412.5L986.5 412.5" stroke="#ffff00" stroke-width="1" fill="none"/><path d="M1027.5 414.5L1027.5 408.5L1024.5 412.5L1028.5 412.5 M1030.5 408.5L1032.5 408.5L1033.5 409.5L1033.5 410.5L1032.5 411.5L1030.5 411.5L1029.5 410.5L1029.5 409.5L1030.5 408.5 M1030.5 411.5L1032.5 411.5L1033.5 412.5L1033.5 413.5L1032.5 414.5L1030.5 414.5L1029.5 413.5L1029.5 412.5L1030.5 411.5 M1038.5 411.5L1035.5 411.5L1034.5 410.5L1034.5 409.5L1035.5 408.5L1037.5 408.5L1038.5 409.5L1038.5 413.5L1037.5 414.5L1034.5 414.5" stroke="#ffff00" stroke-width="1" fill="none"/><path d="M1055.5 409.5L1056.5 408.5L1058.5 408.5L1059.5 409.5L1059.5 410.5L1058.5 411.5L1056.5 411.5 M1058.5 411.5L1059.5 412.5L1059.5 413.5L1058.5 414.5L1056.5 414.5L1055.5 413.5 M1064.5 411.5L1061.5 411.5L1060.5 410.5L1060.5 409.5L1061.5 408.5L1063.5 408.5L1064.5 409.5L1064.5 413.5L1063.5 414.5L1060.5 414.5 M1069.5 408.5L1065.5 408.5L1065.5 411.5L1068.5 411.5L1069.5 412.5L1069.5 413.5L1068.5 414.5L1066.5 414.5L1065.5 413.5" stroke="#ffff00" stroke-width="1" fill="none"/><path d="M1084.5 409.5L1086.5 408.5L1086.5 414.5 M1091.5 408.5L1089.5 408.5L1088.5 409.5L1088.5 413.5L1089.5 414.5L1091.5 414.5L1092.5 413.5L1092.5 412.5L1091.5 411.5L1088.5 411.5" stroke="#ffff00" stroke-width="1" fill="none"/><path d="M1104.5 409.5L1106.5 408.5L1106.5 414.5" stroke="#ffff00" stroke-width="1" fill="none"/><path d="M1119.5 408.5L1121.5 408.5L1122.5 409.5L1122.5 413.5L1121.5 414.5L1119.5 414.5L1118.5 413.5L1118.5 409.5L1119.5 408.5 M1123.5 413.5L1123.5 414.5 M1125.5 409.5L1127.5 408.5L1127.5 414.5 M1133.5 411.5L1130.5 411.5L1130.5 410.5L1130.5 409.5L1130.5 408.5L1132.5 408.5L1133.5 409.5L1133.5 413.5L1132.5 414.5L1130.5 414.5 M1135.5 409.5L1135.5 408.5L1137.5 408.5L1138.5 409.5L1138.5 410.5L1137.5 411.5L1136.5 411.5 M1137.5 411.5L1138.5 412.5L1138.5 413.5L1137.5 414.5L1135.5 414.5L1135.5 413.5" stroke="#ffff00" stroke-width="1" fill="none"/><path d="M966.5 425.5L968.5 419.5L970.5 425.5 M967.5 423.5L969.5 423.5 M971.5 422.5L975.5 422.5 M978.5 420.5L979.5 419.5L980.5 419.5L981.5 420.5L981.5 421.5L978.5 425.5L981.5 425.5 M986.5 419.5L983.5 419.5L983.5 422.5L985.5 422.5L986.5 423.5L986.5 424.5L985.5 425.5L984.5 425.5L983.5 424.5 M988.5 423.5L989.5 422.5L990.5 423.5L991.5 422.5 M993.5 420.5L994.5 419.5L995.5 419.5L996.5 420.5L996.5 421.5L993.5 425.5L996.5 425.5 M1001.5 419.5L999.5 419.5L998.5 420.5L998.5 424.5L999.5 425.5L1000.5 425.5L1001.5 424.5L1001.5 423.5L1000.5 422.5L998.5 422.5" stroke="#ffff00" stroke-width="1" fill="none"/><path d="M1027.5 419.5L1025.5 419.5L1024.5 420.5L1024.5 424.5L1025.5 425.5L1027.5 425.5L1028.5 424.5L1028.5 423.5L1027.5 422.5L1024.5 422.5 M1032.5 419.5L1030.5 419.5L1029.5 420.5L1029.5 424.5L1030.5 425.5L1032.5 425.5L1033.5 424.5L1033.5 423.5L1032.5 422.5L1029.5 422.5 M1034.5 420.5L1035.5 419.5L1037.5 419.5L1038.5 420.5L1038.5 421.5L1034.5 425.5L1038.5 425.5" stroke="#ffff00" stroke-width="1" fill="none"/><path d="M1055.5 420.5L1056.5 419.5L1058.5 419.5L1059.5 420.5L1059.5 421.5L1058.5 422.5L1056.5 422.5 M1058.5 422.5L1059.5 423.5L1059.5 424.5L1058.5 425.5L1056.5 425.5L1055.5 424.5 M1064.5 422.5L1061.5 422.5L1060.5 421.5L1060.5 420.5L1061.5 419.5L1063.5 419.5L1064.5 420.5L1064.5 424.5L1063.5 425.5L1060.5 425.5 M1069.5 419.5L1065.5 419.5L1065.5 422.5L1068.5 422.5L1069.5 423.5L1069.5 424.5L1068.5 425.5L1066.5 425.5L1065.5 424.5" stroke="#ffff00" stroke-width="1" fill="none"/><path d="M1084.5 420.5L1086.5 419.5L1086.5 425.5 M1091.5 419.5L1089.5 419.5L1088.5 420.5L1088.5 424.5L1089.5 425.5L1091.5 425.5L1092.5 424.5L1092.5 423.5L1091.5 422.5L1088.5 422.5" stroke="#ffff00" stroke-width="1" fill="none"/><path d="M1104.5 420.5L1105.5 419.5L1107.5 419.5L1108.5 420.5L1108.5 421.5L1104.5 425.5L1108.5 425.5" stroke="#ffff00" stroke-width="1" fill="none"/><path d="M1119.5 419.5L1121.5 419.5L1122.5 420.5L1122.5 424.5L1121.5 425.5L1119.5 425.5L1118.5 424.5L1118.5 420.5L1119.5 419.5 M1123.5 424.5L1123.5 425.5 M1129.5 419.5L1126.5 419.5L1125.5 422.5L1128.5 422.5L1129.5 423.5L1129.5 424.5L1128.5 425.5L1126.5 425.5L1125.5 424.5 M1130.5 420.5L1131.5 419.5L1133.5 419.5L1134.5 420.5L1134.5 421.5L1130.5 425.5L1134.5 425.5 M1135.5 420.5L1136.5 419.5L1138.5 419.5L1139.5 420.5L1139.5 421.5L1138.5 422.5L1137.5 422.5 M1138.5 422.5L1139.5 423.5L1139.5 424.5L1138.5 425.5L1136.5 425.5L1135.5 424.5" stroke="#ffff00" stroke-width="1" fill="none"/><path d="M966.5 435.5L968.5 429.5L970.5 435.5 M967.5 433.5L969.5 433.5 M971.5 432.5L975.5 432.5 M978.5 430.5L979.5 429.5L980.5 429.5L981.5 430.5L981.5 431.5L978.5 435.5L981.5 435.5 M983.5 429.5L986.5 429.5L984.5 435.5" stroke="#ffff00" stroke-width="1" fill="none"/><path d="M1024.5 430.5L1025.5 429.5L1027.5 429.5L1028.5 430.5L1028.5 431.5L1027.5 432.5L1025.5 432.5 M1027.5 432.5L1028.5 433.5L1028.5 434.5L1027.5 435.5L1025.5 435.5L1024.5 434.5 M1033.5 432.5L1030.5 432.5L1029.5 431.5L1029.5 430.5L1030.5 429.5L1032.5 429.5L1033.5 430.5L1033.5 434.5L1032.5 435.5L1029.5 435.5 M1038.5 429.5L1034.5 429.5L1034.5 432.5L1037.5 432.5L1038.5 433.5L1038.5 434.5L1037.5 435.5L1035.5 435.5L1034.5 434.5" stroke="#ffff00" stroke-width="1" fill="none"/><path d="M1056.5 430.5L1057.5 429.5L1059.5 429.5L1060.5 430.5L1060.5 431.5L1056.5 435.5L1060.5 435.5 M1062.5 429.5L1064.5 429.5L1065.5 430.5L1065.5 431.5L1064.5 432.5L1062.5 432.5L1061.5 431.5L1061.5 430.5L1062.5 429.5 M1062.5 432.5L1064.5 432.5L1065.5 433.5L1065.5 434.5L1064.5 435.5L1062.5 435.5L1061.5 434.5L1061.5 433.5L1062.5 432.5 M1066.5 430.5L1068.5 429.5L1068.5 435.5" stroke="#ffff00" stroke-width="1" fill="none"/><path d="M1084.5 430.5L1086.5 429.5L1086.5 435.5 M1091.5 429.5L1089.5 429.5L1088.5 430.5L1088.5 434.5L1089.5 435.5L1091.5 435.5L1092.5 434.5L1092.5 433.5L1091.5 432.5L1088.5 432.5" stroke="#ffff00" stroke-width="1" fill="none"/><path d="M1104.5 430.5L1106.5 429.5L1106.5 435.5" stroke="#ffff00" stroke-width="1" fill="none"/><path d="M1120.5 429.5L1122.5 429.5L1123.5 430.5L1123.5 434.5L1122.5 435.5L1120.5 435.5L1119.5 434.5L1119.5 430.5L1120.5 429.5 M1124.5 434.5L1124.5 435.5 M1126.5 430.5L1128.5 429.5L1128.5 435.5 M1131.5 430.5L1132.5 429.5L1132.5 435.5 M1135.5 430.5L1136.5 429.5L1136.5 435.5" stroke="#ffff00" stroke-width="1" fill="none"/><path d="M966.5 445.5L968.5 439.5L970.5 445.5 M967.5 443.5L969.5 443.5 M971.5 442.5L975.5 442.5 M978.5 440.5L979.5 439.5L980.5 439.5L981.5 440.5L981.5 441.5L978.5 445.5L981.5 445.5 M984.5 439.5L985.5 439.5L986.5 440.5L986.5 441.5L985.5 442.5L984.5 442.5L983.5 441.5L983.5 440.5L984.5 439.5 M984.5 442.5L985.5 442.5L986.5 443.5L986.5 444.5L985.5 445.5L984.5 445.5L983.5 444.5L983.5 443.5L984.5 442.5" stroke="#ffff00" stroke-width="1" fill="none"/><path d="M1024.5 440.5L1025.5 439.5L1027.5 439.5L1028.5 440.5L1028.5 441.5L1027.5 442.5L1025.5 442.5 M1027.5 442.5L1028.5 443.5L1028.5 444.5L1027.5 445.5L1025.5 445.5L1024.5 444.5 M1033.5 442.5L1030.5 442.5L1029.5 441.5L1029.5 440.5L1030.5 439.5L1032.5 439.5L1033.5 440.5L1033.5 444.5L1032.5 445.5L1029.5 445.5 M1038.5 439.5L1034.5 439.5L1034.5 442.5L1037.5 442.5L1038.5 443.5L1038.5 444.5L1037.5 445.5L1035.5 445.5L1034.5 444.5" stroke="#ffff00" stroke-width="1" fill="none"/><path d="M1055.5 440.5L1056.5 439.5L1058.5 439.5L1059.5 440.5L1059.5 441.5L1055.5 445.5L1059.5 445.5 M1060.5 440.5L1061.5 439.5L1063.5 439.5L1064.5 440.5L1064.5 441.5L1063.5 442.5L1061.5 442.5 M1063.5 442.5L1064.5 443.5L1064.5 444.5L1063.5 445.5L1061.5 445.5L1060.5 444.5 M1065.5 440.5L1066.5 439.5L1068.5 439.5L1069.5 440.5L1069.5 441.5L1068.5 442.5L1066.5 442.5 M1068.5 442.5L1069.5 443.5L1069.5 444.5L1068.5 445.5L1066.5 445.5L1065.5 444.5" stroke="#ffff00" stroke-width="1" fill="none"/><path d="M1084.5 440.5L1086.5 439.5L1086.5 445.5 M1091.5 439.5L1089.5 439.5L1088.5 440.5L1088.5 444.5L1089.5 445.5L1091.5 445.5L1092.5 444.5L1092.5 443.5L1091.5 442.5L1088.5 442.5" stroke="#ffff00" stroke-width="1" fill="none"/><path d="M1104.5 440.5L1106.5 439.5L1106.5 445.5" stroke="#ffff00" stroke-width="1" fill="none"/><path d="M1119.5 439.5L1121.5 439.5L1122.5 440.5L1122.5 444.5L1121.5 445.5L1119.5 445.5L1118.5 444.5L1118.5 440.5L1119.5 439.5 M1123.5 444.5L1123.5 445.5 M1126.5 439.5L1128.5 439.5L1129.5 440.5L1129.5 444.5L1128.5 445.5L1126.5 445.5L1125.5 444.5L1125.5 440.5L1126.5 439.5 M1134.5 442.5L1131.5 442.5L1130.5 441.5L1130.5 440.5L1131.5 439.5L1133.5 439.5L1134.5 440.5L1134.5 444.5L1133.5 445.5L1131.5 445.5 M1135.5 440.5L1136.5 439.5L1138.5 439.5L1139.5 440.5L1139.5 441.5L1135.5 445.5L1139.5 445.5" stroke="#ffff00" stroke-width="1" fill="none"/><path d="M966.5 455.5L968.5 449.5L970.5 455.5 M967.5 453.5L969.5 453.5 M971.5 452.5L975.5 452.5 M978.5 450.5L979.5 449.5L980.5 449.5L981.5 450.5L981.5 451.5L978.5 455.5L981.5 455.5 M986.5 452.5L984.5 452.5L983.5 451.5L983.5 450.5L984.5 449.5L985.5 449.5L986.5 450.5L986.5 454.5L985.5 455.5L983.5 455.5" stroke="#ffff00" stroke-width="1" fill="none"/><path d="M1024.5 449.5L1028.5 449.5L1025.5 455.5 M1033.5 452.5L1030.5 452.5L1029.5 451.5L1029.5 450.5L1030.5 449.5L1032.5 449.5L1033.5 450.5L1033.5 454.5L1032.5 455.5L1029.5 455.5 M1038.5 449.5L1034.5 449.5L1034.5 452.5L1037.5 452.5L1038.5 453.5L1038.5 454.5L1037.5 455.5L1035.5 455.5L1034.5 454.5" stroke="#ffff00" stroke-width="1" fill="none"/><path d="M1055.5 450.5L1056.5 449.5L1058.5 449.5L1059.5 450.5L1059.5 451.5L1058.5 452.5L1056.5 452.5 M1058.5 452.5L1059.5 453.5L1059.5 454.5L1058.5 455.5L1056.5 455.5L1055.5 454.5 M1064.5 452.5L1061.5 452.5L1060.5 451.5L1060.5 450.5L1061.5 449.5L1063.5 449.5L1064.5 450.5L1064.5 454.5L1063.5 455.5L1060.5 455.5 M1069.5 449.5L1065.5 449.5L1065.5 452.5L1068.5 452.5L1069.5 453.5L1069.5 454.5L1068.5 455.5L1066.5 455.5L1065.5 454.5" stroke="#ffff00" stroke-width="1" fill="none"/><path d="M1084.5 450.5L1086.5 449.5L1086.5 455.5 M1091.5 449.5L1089.5 449.5L1088.5 450.5L1088.5 454.5L1089.5 455.5L1091.5 455.5L1092.5 454.5L1092.5 453.5L1091.5 452.5L1088.5 452.5" stroke="#ffff00" stroke-width="1" fill="none"/><path d="M1104.5 450.5L1106.5 449.5L1106.5 455.5" stroke="#ffff00" stroke-width="1" fill="none"/><path d="M1119.5 449.5L1121.5 449.5L1122.5 450.5L1122.5 454.5L1121.5 455.5L1119.5 455.5L1118.5 454.5L1118.5 450.5L1119.5 449.5 M1123.5 454.5L1123.5 455.5 M1125.5 450.5L1126.5 449.5L1128.5 449.5L1129.5 450.5L1129.5 451.5L1128.5 452.5L1127.5 452.5 M1128.5 452.5L1129.5 453.5L1129.5 454.5L1128.5 455.5L1126.5 455.5L1125.5 454.5 M1130.5 450.5L1132.5 449.5L1132.5 455.5 M1137.5 455.5L1137.5 449.5L1135.5 453.5L1138.5 453.5" stroke="#ffff00" stroke-width="1" fill="none"/><path d="M966.5 466.5L968.5 460.5L970.5 466.5 M967.5 464.5L969.5 464.5 M971.5 463.5L975.5 463.5 M978.5 461.5L979.5 460.5L980.5 460.5L981.5 461.5L981.5 462.5L980.5 463.5L979.5 463.5 M980.5 463.5L981.5 464.5L981.5 465.5L980.5 466.5L979.5 466.5L978.5 465.5 M984.5 460.5L985.5 460.5L986.5 461.5L986.5 465.5L985.5 466.5L984.5 466.5L983.5 465.5L983.5 461.5L984.5 460.5" stroke="#ffff00" stroke-width="1" fill="none"/><path d="M1024.5 461.5L1025.5 460.5L1027.5 460.5L1028.5 461.5L1028.5 462.5L1027.5 463.5L1025.5 463.5 M1027.5 463.5L1028.5 464.5L1028.5 465.5L1027.5 466.5L1025.5 466.5L1024.5 465.5 M1033.5 463.5L1030.5 463.5L1029.5 462.5L1029.5 461.5L1030.5 460.5L1032.5 460.5L1033.5 461.5L1033.5 465.5L1032.5 466.5L1029.5 466.5 M1038.5 460.5L1034.5 460.5L1034.5 463.5L1037.5 463.5L1038.5 464.5L1038.5 465.5L1037.5 466.5L1035.5 466.5L1034.5 465.5" stroke="#ffff00" stroke-width="1" fill="none"/><path d="M1055.5 461.5L1056.5 460.5L1058.5 460.5L1059.5 461.5L1059.5 462.5L1055.5 466.5L1059.5 466.5 M1060.5 461.5L1061.5 460.5L1063.5 460.5L1064.5 461.5L1064.5 462.5L1063.5 463.5L1061.5 463.5 M1063.5 463.5L1064.5 464.5L1064.5 465.5L1063.5 466.5L1061.5 466.5L1060.5 465.5 M1065.5 461.5L1066.5 460.5L1068.5 460.5L1069.5 461.5L1069.5 462.5L1068.5 463.5L1066.5 463.5 M1068.5 463.5L1069.5 464.5L1069.5 465.5L1068.5 466.5L1066.5 466.5L1065.5 465.5" stroke="#ffff00" stroke-width="1" fill="none"/><path d="M1084.5 461.5L1086.5 460.5L1086.5 466.5 M1091.5 460.5L1089.5 460.5L1088.5 461.5L1088.5 465.5L1089.5 466.5L1091.5 466.5L1092.5 465.5L1092.5 464.5L1091.5 463.5L1088.5 463.5" stroke="#ffff00" stroke-width="1" fill="none"/><path d="M1104.5 461.5L1106.5 460.5L1106.5 466.5" stroke="#ffff00" stroke-width="1" fill="none"/><path d="M1119.5 460.5L1121.5 460.5L1122.5 461.5L1122.5 465.5L1121.5 466.5L1119.5 466.5L1118.5 465.5L1118.5 461.5L1119.5 460.5 M1123.5 465.5L1123.5 466.5 M1126.5 460.5L1128.5 460.5L1129.5 461.5L1129.5 465.5L1128.5 466.5L1126.5 466.5L1125.5 465.5L1125.5 461.5L1126.5 460.5 M1134.5 463.5L1131.5 463.5L1130.5 462.5L1130.5 461.5L1131.5 460.5L1133.5 460.5L1134.5 461.5L1134.5 465.5L1133.5 466.5L1131.5 466.5 M1135.5 461.5L1136.5 460.5L1138.5 460.5L1139.5 461.5L1139.5 462.5L1135.5 466.5L1139.5 466.5" stroke="#ffff00" stroke-width="1" fill="none"/><path d="M966.5 476.5L968.5 470.5L970.5 476.5 M967.5 474.5L969.5 474.5 M971.5 473.5L975.5 473.5 M978.5 471.5L979.5 470.5L980.5 470.5L981.5 471.5L981.5 472.5L980.5 473.5L979.5 473.5 M980.5 473.5L981.5 474.5L981.5 475.5L980.5 476.5L979.5 476.5L978.5 475.5 M983.5 471.5L985.5 470.5L985.5 476.5 M987.5 474.5L988.5 473.5L989.5 474.5L990.5 473.5 M992.5 471.5L993.5 470.5L995.5 470.5L995.5 471.5L995.5 472.5L995.5 473.5L993.5 473.5 M995.5 473.5L995.5 474.5L995.5 475.5L995.5 476.5L993.5 476.5L992.5 475.5 M997.5 471.5L998.5 470.5L1000.5 470.5L1000.5 471.5L1000.5 472.5L997.5 476.5L1000.5 476.5" stroke="#ffff00" stroke-width="1" fill="none"/><path d="M1024.5 471.5L1025.5 470.5L1027.5 470.5L1028.5 471.5L1028.5 472.5L1027.5 473.5L1025.5 473.5 M1027.5 473.5L1028.5 474.5L1028.5 475.5L1027.5 476.5L1025.5 476.5L1024.5 475.5 M1033.5 473.5L1030.5 473.5L1029.5 472.5L1029.5 471.5L1030.5 470.5L1032.5 470.5L1033.5 471.5L1033.5 475.5L1032.5 476.5L1029.5 476.5 M1038.5 470.5L1034.5 470.5L1034.5 473.5L1037.5 473.5L1038.5 474.5L1038.5 475.5L1037.5 476.5L1035.5 476.5L1034.5 475.5" stroke="#ffff00" stroke-width="1" fill="none"/><path d="M1056.5 471.5L1057.5 470.5L1059.5 470.5L1060.5 471.5L1060.5 472.5L1059.5 473.5L1057.5 473.5 M1059.5 473.5L1060.5 474.5L1060.5 475.5L1059.5 476.5L1057.5 476.5L1056.5 475.5 M1061.5 470.5L1065.5 470.5L1062.5 476.5 M1066.5 471.5L1068.5 470.5L1068.5 476.5" stroke="#ffff00" stroke-width="1" fill="none"/><path d="M1084.5 471.5L1086.5 470.5L1086.5 476.5 M1091.5 470.5L1089.5 470.5L1088.5 471.5L1088.5 475.5L1089.5 476.5L1091.5 476.5L1092.5 475.5L1092.5 474.5L1091.5 473.5L1088.5 473.5" stroke="#ffff00" stroke-width="1" fill="none"/><path d="M1104.5 471.5L1105.5 470.5L1107.5 470.5L1108.5 471.5L1108.5 472.5L1104.5 476.5L1108.5 476.5" stroke="#ffff00" stroke-width="1" fill="none"/><path d="M1119.5 470.5L1121.5 470.5L1122.5 471.5L1122.5 475.5L1121.5 476.5L1119.5 476.5L1118.5 475.5L1118.5 471.5L1119.5 470.5 M1123.5 475.5L1123.5 476.5 M1125.5 471.5L1126.5 470.5L1128.5 470.5L1129.5 471.5L1129.5 472.5L1125.5 476.5L1129.5 476.5 M1134.5 473.5L1131.5 473.5L1130.5 472.5L1130.5 471.5L1131.5 470.5L1133.5 470.5L1134.5 471.5L1134.5 475.5L1133.5 476.5L1131.5 476.5 M1135.5 471.5L1136.5 470.5L1138.5 470.5L1139.5 471.5L1139.5 472.5L1138.5 473.5L1137.5 473.5 M1138.5 473.5L1139.5 474.5L1139.5 475.5L1138.5 476.5L1136.5 476.5L1135.5 475.5" stroke="#ffff00" stroke-width="1" fill="none"/><path d="M966.5 486.5L968.5 480.5L970.5 486.5 M967.5 484.5L969.5 484.5 M971.5 483.5L975.5 483.5 M978.5 481.5L979.5 480.5L980.5 480.5L981.5 481.5L981.5 482.5L980.5 483.5L979.5 483.5 M980.5 483.5L981.5 484.5L981.5 485.5L980.5 486.5L979.5 486.5L978.5 485.5 M983.5 481.5L984.5 480.5L985.5 480.5L986.5 481.5L986.5 482.5L985.5 483.5L984.5 483.5 M985.5 483.5L986.5 484.5L986.5 485.5L985.5 486.5L984.5 486.5L983.5 485.5" stroke="#ffff00" stroke-width="1" fill="none"/><path d="M1027.5 486.5L1027.5 480.5L1024.5 484.5L1028.5 484.5 M1030.5 480.5L1032.5 480.5L1033.5 481.5L1033.5 482.5L1032.5 483.5L1030.5 483.5L1029.5 482.5L1029.5 481.5L1030.5 480.5 M1030.5 483.5L1032.5 483.5L1033.5 484.5L1033.5 485.5L1032.5 486.5L1030.5 486.5L1029.5 485.5L1029.5 484.5L1030.5 483.5 M1038.5 483.5L1035.5 483.5L1034.5 482.5L1034.5 481.5L1035.5 480.5L1037.5 480.5L1038.5 481.5L1038.5 485.5L1037.5 486.5L1034.5 486.5" stroke="#ffff00" stroke-width="1" fill="none"/><path d="M1055.5 481.5L1056.5 480.5L1058.5 480.5L1059.5 481.5L1059.5 482.5L1058.5 483.5L1056.5 483.5 M1058.5 483.5L1059.5 484.5L1059.5 485.5L1058.5 486.5L1056.5 486.5L1055.5 485.5 M1064.5 483.5L1061.5 483.5L1060.5 482.5L1060.5 481.5L1061.5 480.5L1063.5 480.5L1064.5 481.5L1064.5 485.5L1063.5 486.5L1060.5 486.5 M1069.5 480.5L1065.5 480.5L1065.5 483.5L1068.5 483.5L1069.5 484.5L1069.5 485.5L1068.5 486.5L1066.5 486.5L1065.5 485.5" stroke="#ffff00" stroke-width="1" fill="none"/><path d="M1084.5 481.5L1086.5 480.5L1086.5 486.5 M1091.5 480.5L1089.5 480.5L1088.5 481.5L1088.5 485.5L1089.5 486.5L1091.5 486.5L1092.5 485.5L1092.5 484.5L1091.5 483.5L1088.5 483.5" stroke="#ffff00" stroke-width="1" fill="none"/><path d="M1104.5 481.5L1106.5 480.5L1106.5 486.5" stroke="#ffff00" stroke-width="1" fill="none"/><path d="M1119.5 480.5L1121.5 480.5L1122.5 481.5L1122.5 485.5L1121.5 486.5L1119.5 486.5L1118.5 485.5L1118.5 481.5L1119.5 480.5 M1123.5 485.5L1123.5 486.5 M1125.5 481.5L1127.5 480.5L1127.5 486.5 M1133.5 483.5L1130.5 483.5L1130.5 482.5L1130.5 481.5L1130.5 480.5L1132.5 480.5L1133.5 481.5L1133.5 485.5L1132.5 486.5L1130.5 486.5 M1135.5 481.5L1135.5 480.5L1137.5 480.5L1138.5 481.5L1138.5 482.5L1137.5 483.5L1136.5 483.5 M1137.5 483.5L1138.5 484.5L1138.5 485.5L1137.5 486.5L1135.5 486.5L1135.5 485.5" stroke="#ffff00" stroke-width="1" fill="none"/><path d="M966.5 496.5L968.5 490.5L970.5 496.5 M967.5 494.5L969.5 494.5 M971.5 493.5L975.5 493.5 M978.5 491.5L979.5 490.5L980.5 490.5L981.5 491.5L981.5 492.5L980.5 493.5L979.5 493.5 M980.5 493.5L981.5 494.5L981.5 495.5L980.5 496.5L979.5 496.5L978.5 495.5 M985.5 496.5L985.5 490.5L983.5 494.5L986.5 494.5 M988.5 494.5L989.5 493.5L990.5 494.5L991.5 493.5 M993.5 491.5L994.5 490.5L995.5 490.5L996.5 491.5L996.5 492.5L995.5 493.5L994.5 493.5 M995.5 493.5L996.5 494.5L996.5 495.5L995.5 496.5L994.5 496.5L993.5 495.5 M1001.5 490.5L998.5 490.5L998.5 493.5L1000.5 493.5L1001.5 494.5L1001.5 495.5L1000.5 496.5L999.5 496.5L998.5 495.5" stroke="#ffff00" stroke-width="1" fill="none"/><path d="M1027.5 490.5L1025.5 490.5L1024.5 491.5L1024.5 495.5L1025.5 496.5L1027.5 496.5L1028.5 495.5L1028.5 494.5L1027.5 493.5L1024.5 493.5 M1032.5 490.5L1030.5 490.5L1029.5 491.5L1029.5 495.5L1030.5 496.5L1032.5 496.5L1033.5 495.5L1033.5 494.5L1032.5 493.5L1029.5 493.5 M1034.5 491.5L1035.5 490.5L1037.5 490.5L1038.5 491.5L1038.5 492.5L1034.5 496.5L1038.5 496.5" stroke="#ffff00" stroke-width="1" fill="none"/><path d="M1055.5 491.5L1056.5 490.5L1058.5 490.5L1059.5 491.5L1059.5 492.5L1058.5 493.5L1056.5 493.5 M1058.5 493.5L1059.5 494.5L1059.5 495.5L1058.5 496.5L1056.5 496.5L1055.5 495.5 M1064.5 493.5L1061.5 493.5L1060.5 492.5L1060.5 491.5L1061.5 490.5L1063.5 490.5L1064.5 491.5L1064.5 495.5L1063.5 496.5L1060.5 496.5 M1069.5 490.5L1065.5 490.5L1065.5 493.5L1068.5 493.5L1069.5 494.5L1069.5 495.5L1068.5 496.5L1066.5 496.5L1065.5 495.5" stroke="#ffff00" stroke-width="1" fill="none"/><path d="M1084.5 491.5L1086.5 490.5L1086.5 496.5 M1091.5 490.5L1089.5 490.5L1088.5 491.5L1088.5 495.5L1089.5 496.5L1091.5 496.5L1092.5 495.5L1092.5 494.5L1091.5 493.5L1088.5 493.5" stroke="#ffff00" stroke-width="1" fill="none"/><path d="M1104.5 491.5L1105.5 490.5L1107.5 490.5L1108.5 491.5L1108.5 492.5L1104.5 496.5L1108.5 496.5" stroke="#ffff00" stroke-width="1" fill="none"/><path d="M1119.5 490.5L1121.5 490.5L1122.5 491.5L1122.5 495.5L1121.5 496.5L1119.5 496.5L1118.5 495.5L1118.5 491.5L1119.5 490.5 M1123.5 495.5L1123.5 496.5 M1129.5 490.5L1126.5 490.5L1125.5 493.5L1128.5 493.5L1129.5 494.5L1129.5 495.5L1128.5 496.5L1126.5 496.5L1125.5 495.5 M1130.5 491.5L1131.5 490.5L1133.5 490.5L1134.5 491.5L1134.5 492.5L1130.5 496.5L1134.5 496.5 M1135.5 491.5L1136.5 490.5L1138.5 490.5L1139.5 491.5L1139.5 492.5L1138.5 493.5L1137.5 493.5 M1138.5 493.5L1139.5 494.5L1139.5 495.5L1138.5 496.5L1136.5 496.5L1135.5 495.5" stroke="#ffff00" stroke-width="1" fill="none"/><path d="M966.5 507.5L968.5 501.5L970.5 507.5 M967.5 505.5L969.5 505.5 M971.5 504.5L975.5 504.5 M978.5 502.5L979.5 501.5L980.5 501.5L981.5 502.5L981.5 503.5L980.5 504.5L979.5 504.5 M980.5 504.5L981.5 505.5L981.5 506.5L980.5 507.5L979.5 507.5L978.5 506.5 M986.5 501.5L984.5 501.5L983.5 502.5L983.5 506.5L984.5 507.5L985.5 507.5L986.5 506.5L986.5 505.5L985.5 504.5L983.5 504.5" stroke="#ffff00" stroke-width="1" fill="none"/><path d="M1024.5 502.5L1025.5 501.5L1027.5 501.5L1028.5 502.5L1028.5 503.5L1027.5 504.5L1025.5 504.5 M1027.5 504.5L1028.5 505.5L1028.5 506.5L1027.5 507.5L1025.5 507.5L1024.5 506.5 M1033.5 504.5L1030.5 504.5L1029.5 503.5L1029.5 502.5L1030.5 501.5L1032.5 501.5L1033.5 502.5L1033.5 506.5L1032.5 507.5L1029.5 507.5 M1038.5 501.5L1034.5 501.5L1034.5 504.5L1037.5 504.5L1038.5 505.5L1038.5 506.5L1037.5 507.5L1035.5 507.5L1034.5 506.5" stroke="#ffff00" stroke-width="1" fill="none"/><path d="M1056.5 502.5L1057.5 501.5L1059.5 501.5L1060.5 502.5L1060.5 503.5L1056.5 507.5L1060.5 507.5 M1062.5 501.5L1064.5 501.5L1065.5 502.5L1065.5 503.5L1064.5 504.5L1062.5 504.5L1061.5 503.5L1061.5 502.5L1062.5 501.5 M1062.5 504.5L1064.5 504.5L1065.5 505.5L1065.5 506.5L1064.5 507.5L1062.5 507.5L1061.5 506.5L1061.5 505.5L1062.5 504.5 M1066.5 502.5L1068.5 501.5L1068.5 507.5" stroke="#ffff00" stroke-width="1" fill="none"/><path d="M1084.5 502.5L1086.5 501.5L1086.5 507.5 M1091.5 501.5L1089.5 501.5L1088.5 502.5L1088.5 506.5L1089.5 507.5L1091.5 507.5L1092.5 506.5L1092.5 505.5L1091.5 504.5L1088.5 504.5" stroke="#ffff00" stroke-width="1" fill="none"/><path d="M1104.5 502.5L1106.5 501.5L1106.5 507.5" stroke="#ffff00" stroke-width="1" fill="none"/><path d="M1120.5 501.5L1122.5 501.5L1123.5 502.5L1123.5 506.5L1122.5 507.5L1120.5 507.5L1119.5 506.5L1119.5 502.5L1120.5 501.5 M1124.5 506.5L1124.5 507.5 M1126.5 502.5L1128.5 501.5L1128.5 507.5 M1131.5 502.5L1132.5 501.5L1132.5 507.5 M1135.5 502.5L1136.5 501.5L1136.5 507.5" stroke="#ffff00" stroke-width="1" fill="none"/><path d="M966.5 517.5L968.5 511.5L970.5 517.5 M967.5 515.5L969.5 515.5 M971.5 514.5L975.5 514.5 M978.5 512.5L979.5 511.5L980.5 511.5L981.5 512.5L981.5 513.5L980.5 514.5L979.5 514.5 M980.5 514.5L981.5 515.5L981.5 516.5L980.5 517.5L979.5 517.5L978.5 516.5 M983.5 511.5L986.5 511.5L984.5 517.5 M988.5 515.5L989.5 514.5L990.5 515.5L991.5 514.5 M993.5 512.5L994.5 511.5L995.5 511.5L996.5 512.5L996.5 513.5L995.5 514.5L994.5 514.5 M995.5 514.5L996.5 515.5L996.5 516.5L995.5 517.5L994.5 517.5L993.5 516.5 M999.5 511.5L1000.5 511.5L1001.5 512.5L1001.5 513.5L1000.5 514.5L999.5 514.5L998.5 513.5L998.5 512.5L999.5 511.5 M999.5 514.5L1000.5 514.5L1001.5 515.5L1001.5 516.5L1000.5 517.5L999.5 517.5L998.5 516.5L998.5 515.5L999.5 514.5" stroke="#ffff00" stroke-width="1" fill="none"/><path d="M1027.5 511.5L1025.5 511.5L1024.5 512.5L1024.5 516.5L1025.5 517.5L1027.5 517.5L1028.5 516.5L1028.5 515.5L1027.5 514.5L1024.5 514.5 M1029.5 512.5L1030.5 511.5L1032.5 511.5L1033.5 512.5L1033.5 513.5L1032.5 514.5L1030.5 514.5 M1032.5 514.5L1033.5 515.5L1033.5 516.5L1032.5 517.5L1030.5 517.5L1029.5 516.5 M1034.5 512.5L1035.5 511.5L1037.5 511.5L1038.5 512.5L1038.5 513.5L1037.5 514.5L1035.5 514.5 M1037.5 514.5L1038.5 515.5L1038.5 516.5L1037.5 517.5L1035.5 517.5L1034.5 516.5" stroke="#ffff00" stroke-width="1" fill="none"/><path d="M1055.5 512.5L1056.5 511.5L1058.5 511.5L1059.5 512.5L1059.5 513.5L1058.5 514.5L1056.5 514.5 M1058.5 514.5L1059.5 515.5L1059.5 516.5L1058.5 517.5L1056.5 517.5L1055.5 516.5 M1064.5 514.5L1061.5 514.5L1060.5 513.5L1060.5 512.5L1061.5 511.5L1063.5 511.5L1064.5 512.5L1064.5 516.5L1063.5 517.5L1060.5 517.5 M1069.5 511.5L1065.5 511.5L1065.5 514.5L1068.5 514.5L1069.5 515.5L1069.5 516.5L1068.5 517.5L1066.5 517.5L1065.5 516.5" stroke="#ffff00" stroke-width="1" fill="none"/><path d="M1084.5 512.5L1086.5 511.5L1086.5 517.5 M1091.5 511.5L1089.5 511.5L1088.5 512.5L1088.5 516.5L1089.5 517.5L1091.5 517.5L1092.5 516.5L1092.5 515.5L1091.5 514.5L1088.5 514.5" stroke="#ffff00" stroke-width="1" fill="none"/><path d="M1104.5 512.5L1105.5 511.5L1107.5 511.5L1108.5 512.5L1108.5 513.5L1104.5 517.5L1108.5 517.5" stroke="#ffff00" stroke-width="1" fill="none"/><path d="M1124.5 511.5L1126.5 511.5L1127.5 512.5L1127.5 516.5L1126.5 517.5L1124.5 517.5L1123.5 516.5L1123.5 512.5L1124.5 511.5 M1128.5 516.5L1128.5 517.5 M1134.5 511.5L1131.5 511.5L1130.5 514.5L1133.5 514.5L1134.5 515.5L1134.5 516.5L1133.5 517.5L1131.5 517.5L1130.5 516.5" stroke="#ffff00" stroke-width="1" fill="none"/><path d="M966.5 527.5L968.5 521.5L970.5 527.5 M967.5 525.5L969.5 525.5 M971.5 524.5L975.5 524.5 M978.5 522.5L979.5 521.5L980.5 521.5L981.5 522.5L981.5 523.5L980.5 524.5L979.5 524.5 M980.5 524.5L981.5 525.5L981.5 526.5L980.5 527.5L979.5 527.5L978.5 526.5 M986.5 524.5L984.5 524.5L983.5 523.5L983.5 522.5L984.5 521.5L985.5 521.5L986.5 522.5L986.5 526.5L985.5 527.5L983.5 527.5" stroke="#ffff00" stroke-width="1" fill="none"/><path d="M1024.5 521.5L1028.5 521.5L1025.5 527.5 M1032.5 527.5L1032.5 521.5L1029.5 525.5L1033.5 525.5 M1034.5 521.5L1038.5 521.5L1035.5 527.5" stroke="#ffff00" stroke-width="1" fill="none"/><path d="M1055.5 522.5L1056.5 521.5L1058.5 521.5L1059.5 522.5L1059.5 523.5L1058.5 524.5L1056.5 524.5 M1058.5 524.5L1059.5 525.5L1059.5 526.5L1058.5 527.5L1056.5 527.5L1055.5 526.5 M1064.5 524.5L1061.5 524.5L1060.5 523.5L1060.5 522.5L1061.5 521.5L1063.5 521.5L1064.5 522.5L1064.5 526.5L1063.5 527.5L1060.5 527.5 M1069.5 521.5L1065.5 521.5L1065.5 524.5L1068.5 524.5L1069.5 525.5L1069.5 526.5L1068.5 527.5L1066.5 527.5L1065.5 526.5" stroke="#ffff00" stroke-width="1" fill="none"/><path d="M1084.5 522.5L1086.5 521.5L1086.5 527.5 M1091.5 521.5L1089.5 521.5L1088.5 522.5L1088.5 526.5L1089.5 527.5L1091.5 527.5L1092.5 526.5L1092.5 525.5L1091.5 524.5L1088.5 524.5" stroke="#ffff00" stroke-width="1" fill="none"/><path d="M1104.5 522.5L1106.5 521.5L1106.5 527.5" stroke="#ffff00" stroke-width="1" fill="none"/><path d="M1119.5 521.5L1121.5 521.5L1122.5 522.5L1122.5 526.5L1121.5 527.5L1119.5 527.5L1118.5 526.5L1118.5 522.5L1119.5 521.5 M1123.5 526.5L1123.5 527.5 M1125.5 522.5L1126.5 521.5L1128.5 521.5L1129.5 522.5L1129.5 523.5L1125.5 527.5L1129.5 527.5 M1134.5 524.5L1131.5 524.5L1130.5 523.5L1130.5 522.5L1131.5 521.5L1133.5 521.5L1134.5 522.5L1134.5 526.5L1133.5 527.5L1131.5 527.5 M1139.5 521.5L1136.5 521.5L1135.5 524.5L1138.5 524.5L1139.5 525.5L1139.5 526.5L1138.5 527.5L1136.5 527.5L1135.5 526.5" stroke="#ffff00" stroke-width="1" fill="none"/><path d="M966.5 537.5L968.5 531.5L970.5 537.5 M967.5 535.5L969.5 535.5 M971.5 534.5L975.5 534.5 M980.5 537.5L980.5 531.5L978.5 535.5L981.5 535.5 M984.5 531.5L985.5 531.5L986.5 532.5L986.5 536.5L985.5 537.5L984.5 537.5L983.5 536.5L983.5 532.5L984.5 531.5" stroke="#ffff00" stroke-width="1" fill="none"/><path d="M1027.5 537.5L1027.5 531.5L1024.5 535.5L1028.5 535.5 M1030.5 531.5L1032.5 531.5L1033.5 532.5L1033.5 533.5L1032.5 534.5L1030.5 534.5L1029.5 533.5L1029.5 532.5L1030.5 531.5 M1030.5 534.5L1032.5 534.5L1033.5 535.5L1033.5 536.5L1032.5 537.5L1030.5 537.5L1029.5 536.5L1029.5 535.5L1030.5 534.5 M1038.5 534.5L1035.5 534.5L1034.5 533.5L1034.5 532.5L1035.5 531.5L1037.5 531.5L1038.5 532.5L1038.5 536.5L1037.5 537.5L1034.5 537.5" stroke="#ffff00" stroke-width="1" fill="none"/><path d="M1055.5 532.5L1056.5 531.5L1058.5 531.5L1059.5 532.5L1059.5 533.5L1058.5 534.5L1056.5 534.5 M1058.5 534.5L1059.5 535.5L1059.5 536.5L1058.5 537.5L1056.5 537.5L1055.5 536.5 M1064.5 534.5L1061.5 534.5L1060.5 533.5L1060.5 532.5L1061.5 531.5L1063.5 531.5L1064.5 532.5L1064.5 536.5L1063.5 537.5L1060.5 537.5 M1069.5 531.5L1065.5 531.5L1065.5 534.5L1068.5 534.5L1069.5 535.5L1069.5 536.5L1068.5 537.5L1066.5 537.5L1065.5 536.5" stroke="#ffff00" stroke-width="1" fill="none"/><path d="M1084.5 532.5L1086.5 531.5L1086.5 537.5 M1091.5 531.5L1089.5 531.5L1088.5 532.5L1088.5 536.5L1089.5 537.5L1091.5 537.5L1092.5 536.5L1092.5 535.5L1091.5 534.5L1088.5 534.5" stroke="#ffff00" stroke-width="1" fill="none"/><path d="M1104.5 532.5L1106.5 531.5L1106.5 537.5" stroke="#ffff00" stroke-width="1" fill="none"/><path d="M1119.5 531.5L1121.5 531.5L1122.5 532.5L1122.5 536.5L1121.5 537.5L1119.5 537.5L1118.5 536.5L1118.5 532.5L1119.5 531.5 M1123.5 536.5L1123.5 537.5 M1125.5 532.5L1127.5 531.5L1127.5 537.5 M1133.5 534.5L1130.5 534.5L1130.5 533.5L1130.5 532.5L1130.5 531.5L1132.5 531.5L1133.5 532.5L1133.5 536.5L1132.5 537.5L1130.5 537.5 M1135.5 532.5L1135.5 531.5L1137.5 531.5L1138.5 532.5L1138.5 533.5L1137.5 534.5L1136.5 534.5 M1137.5 534.5L1138.5 535.5L1138.5 536.5L1137.5 537.5L1135.5 537.5L1135.5 536.5" stroke="#ffff00" stroke-width="1" fill="none"/><path d="M966.5 547.5L968.5 541.5L970.5 547.5 M967.5 545.5L969.5 545.5 M971.5 544.5L975.5 544.5 M980.5 547.5L980.5 541.5L978.5 545.5L981.5 545.5 M983.5 542.5L985.5 541.5L985.5 547.5 M987.5 545.5L988.5 544.5L989.5 545.5L990.5 544.5 M995.5 547.5L995.5 541.5L992.5 545.5L995.5 545.5 M997.5 542.5L998.5 541.5L1000.5 541.5L1000.5 542.5L1000.5 543.5L997.5 547.5L1000.5 547.5" stroke="#ffff00" stroke-width="1" fill="none"/><path d="M1027.5 541.5L1025.5 541.5L1024.5 542.5L1024.5 546.5L1025.5 547.5L1027.5 547.5L1028.5 546.5L1028.5 545.5L1027.5 544.5L1024.5 544.5 M1032.5 541.5L1030.5 541.5L1029.5 542.5L1029.5 546.5L1030.5 547.5L1032.5 547.5L1033.5 546.5L1033.5 545.5L1032.5 544.5L1029.5 544.5 M1034.5 542.5L1035.5 541.5L1037.5 541.5L1038.5 542.5L1038.5 543.5L1034.5 547.5L1038.5 547.5" stroke="#ffff00" stroke-width="1" fill="none"/><path d="M1055.5 542.5L1056.5 541.5L1058.5 541.5L1059.5 542.5L1059.5 543.5L1058.5 544.5L1056.5 544.5 M1058.5 544.5L1059.5 545.5L1059.5 546.5L1058.5 547.5L1056.5 547.5L1055.5 546.5 M1064.5 544.5L1061.5 544.5L1060.5 543.5L1060.5 542.5L1061.5 541.5L1063.5 541.5L1064.5 542.5L1064.5 546.5L1063.5 547.5L1060.5 547.5 M1069.5 541.5L1065.5 541.5L1065.5 544.5L1068.5 544.5L1069.5 545.5L1069.5 546.5L1068.5 547.5L1066.5 547.5L1065.5 546.5" stroke="#ffff00" stroke-width="1" fill="none"/><path d="M1084.5 542.5L1086.5 541.5L1086.5 547.5 M1091.5 541.5L1089.5 541.5L1088.5 542.5L1088.5 546.5L1089.5 547.5L1091.5 547.5L1092.5 546.5L1092.5 545.5L1091.5 544.5L1088.5 544.5" stroke="#ffff00" stroke-width="1" fill="none"/><path d="M1104.5 542.5L1105.5 541.5L1107.5 541.5L1108.5 542.5L1108.5 543.5L1104.5 547.5L1108.5 547.5" stroke="#ffff00" stroke-width="1" fill="none"/><path d="M1119.5 541.5L1121.5 541.5L1122.5 542.5L1122.5 546.5L1121.5 547.5L1119.5 547.5L1118.5 546.5L1118.5 542.5L1119.5 541.5 M1123.5 546.5L1123.5 547.5 M1129.5 541.5L1126.5 541.5L1125.5 544.5L1128.5 544.5L1129.5 545.5L1129.5 546.5L1128.5 547.5L1126.5 547.5L1125.5 546.5 M1130.5 542.5L1131.5 541.5L1133.5 541.5L1134.5 542.5L1134.5 543.5L1130.5 547.5L1134.5 547.5 M1135.5 542.5L1136.5 541.5L1138.5 541.5L1139.5 542.5L1139.5 543.5L1138.5 544.5L1137.5 544.5 M1138.5 544.5L1139.5 545.5L1139.5 546.5L1138.5 547.5L1136.5 547.5L1135.5 546.5" stroke="#ffff00" stroke-width="1" fill="none"/><path d="M966.5 558.5L968.5 552.5L970.5 558.5 M967.5 556.5L969.5 556.5 M971.5 555.5L975.5 555.5 M980.5 558.5L980.5 552.5L978.5 556.5L981.5 556.5 M983.5 553.5L984.5 552.5L985.5 552.5L986.5 553.5L986.5 554.5L985.5 555.5L984.5 555.5 M985.5 555.5L986.5 556.5L986.5 557.5L985.5 558.5L984.5 558.5L983.5 557.5" stroke="#ffff00" stroke-width="1" fill="none"/><path d="M1024.5 553.5L1025.5 552.5L1027.5 552.5L1028.5 553.5L1028.5 554.5L1027.5 555.5L1025.5 555.5 M1027.5 555.5L1028.5 556.5L1028.5 557.5L1027.5 558.5L1025.5 558.5L1024.5 557.5 M1033.5 555.5L1030.5 555.5L1029.5 554.5L1029.5 553.5L1030.5 552.5L1032.5 552.5L1033.5 553.5L1033.5 557.5L1032.5 558.5L1029.5 558.5 M1038.5 552.5L1034.5 552.5L1034.5 555.5L1037.5 555.5L1038.5 556.5L1038.5 557.5L1037.5 558.5L1035.5 558.5L1034.5 557.5" stroke="#ffff00" stroke-width="1" fill="none"/><path d="M1056.5 553.5L1057.5 552.5L1059.5 552.5L1060.5 553.5L1060.5 554.5L1056.5 558.5L1060.5 558.5 M1062.5 552.5L1064.5 552.5L1065.5 553.5L1065.5 554.5L1064.5 555.5L1062.5 555.5L1061.5 554.5L1061.5 553.5L1062.5 552.5 M1062.5 555.5L1064.5 555.5L1065.5 556.5L1065.5 557.5L1064.5 558.5L1062.5 558.5L1061.5 557.5L1061.5 556.5L1062.5 555.5 M1066.5 553.5L1068.5 552.5L1068.5 558.5" stroke="#ffff00" stroke-width="1" fill="none"/><path d="M1084.5 553.5L1086.5 552.5L1086.5 558.5 M1091.5 552.5L1089.5 552.5L1088.5 553.5L1088.5 557.5L1089.5 558.5L1091.5 558.5L1092.5 557.5L1092.5 556.5L1091.5 555.5L1088.5 555.5" stroke="#ffff00" stroke-width="1" fill="none"/><path d="M1104.5 553.5L1106.5 552.5L1106.5 558.5" stroke="#ffff00" stroke-width="1" fill="none"/><path d="M1120.5 552.5L1122.5 552.5L1123.5 553.5L1123.5 557.5L1122.5 558.5L1120.5 558.5L1119.5 557.5L1119.5 553.5L1120.5 552.5 M1124.5 557.5L1124.5 558.5 M1126.5 553.5L1128.5 552.5L1128.5 558.5 M1131.5 553.5L1132.5 552.5L1132.5 558.5 M1135.5 553.5L1136.5 552.5L1136.5 558.5" stroke="#ffff00" stroke-width="1" fill="none"/><path d="M966.5 568.5L968.5 562.5L970.5 568.5 M967.5 566.5L969.5 566.5 M971.5 565.5L975.5 565.5 M980.5 568.5L980.5 562.5L978.5 566.5L981.5 566.5 M985.5 568.5L985.5 562.5L983.5 566.5L986.5 566.5" stroke="#ffff00" stroke-width="1" fill="none"/><path d="M1024.5 563.5L1025.5 562.5L1027.5 562.5L1028.5 563.5L1028.5 564.5L1027.5 565.5L1025.5 565.5 M1027.5 565.5L1028.5 566.5L1028.5 567.5L1027.5 568.5L1025.5 568.5L1024.5 567.5 M1033.5 565.5L1030.5 565.5L1029.5 564.5L1029.5 563.5L1030.5 562.5L1032.5 562.5L1033.5 563.5L1033.5 567.5L1032.5 568.5L1029.5 568.5 M1038.5 562.5L1034.5 562.5L1034.5 565.5L1037.5 565.5L1038.5 566.5L1038.5 567.5L1037.5 568.5L1035.5 568.5L1034.5 567.5" stroke="#ffff00" stroke-width="1" fill="none"/><path d="M1055.5 563.5L1056.5 562.5L1058.5 562.5L1059.5 563.5L1059.5 564.5L1055.5 568.5L1059.5 568.5 M1060.5 563.5L1061.5 562.5L1063.5 562.5L1064.5 563.5L1064.5 564.5L1063.5 565.5L1061.5 565.5 M1063.5 565.5L1064.5 566.5L1064.5 567.5L1063.5 568.5L1061.5 568.5L1060.5 567.5 M1065.5 563.5L1066.5 562.5L1068.5 562.5L1069.5 563.5L1069.5 564.5L1068.5 565.5L1066.5 565.5 M1068.5 565.5L1069.5 566.5L1069.5 567.5L1068.5 568.5L1066.5 568.5L1065.5 567.5" stroke="#ffff00" stroke-width="1" fill="none"/><path d="M1084.5 563.5L1086.5 562.5L1086.5 568.5 M1091.5 562.5L1089.5 562.5L1088.5 563.5L1088.5 567.5L1089.5 568.5L1091.5 568.5L1092.5 567.5L1092.5 566.5L1091.5 565.5L1088.5 565.5" stroke="#ffff00" stroke-width="1" fill="none"/><path d="M1104.5 563.5L1106.5 562.5L1106.5 568.5" stroke="#ffff00" stroke-width="1" fill="none"/><path d="M1119.5 562.5L1121.5 562.5L1122.5 563.5L1122.5 567.5L1121.5 568.5L1119.5 568.5L1118.5 567.5L1118.5 563.5L1119.5 562.5 M1123.5 567.5L1123.5 568.5 M1126.5 562.5L1128.5 562.5L1129.5 563.5L1129.5 567.5L1128.5 568.5L1126.5 568.5L1125.5 567.5L1125.5 563.5L1126.5 562.5 M1134.5 565.5L1131.5 565.5L1130.5 564.5L1130.5 563.5L1131.5 562.5L1133.5 562.5L1134.5 563.5L1134.5 567.5L1133.5 568.5L1131.5 568.5 M1135.5 563.5L1136.5 562.5L1138.5 562.5L1139.5 563.5L1139.5 564.5L1135.5 568.5L1139.5 568.5" stroke="#ffff00" stroke-width="1" fill="none"/><path d="M966.5 578.5L968.5 572.5L970.5 578.5 M967.5 576.5L969.5 576.5 M971.5 575.5L975.5 575.5 M980.5 578.5L980.5 572.5L978.5 576.5L981.5 576.5 M986.5 572.5L983.5 572.5L983.5 575.5L985.5 575.5L986.5 576.5L986.5 577.5L985.5 578.5L984.5 578.5L983.5 577.5" stroke="#ffff00" stroke-width="1" fill="none"/><path d="M1024.5 572.5L1028.5 572.5L1025.5 578.5 M1033.5 575.5L1030.5 575.5L1029.5 574.5L1029.5 573.5L1030.5 572.5L1032.5 572.5L1033.5 573.5L1033.5 577.5L1032.5 578.5L1029.5 578.5 M1038.5 572.5L1034.5 572.5L1034.5 575.5L1037.5 575.5L1038.5 576.5L1038.5 577.5L1037.5 578.5L1035.5 578.5L1034.5 577.5" stroke="#ffff00" stroke-width="1" fill="none"/><path d="M1055.5 573.5L1056.5 572.5L1058.5 572.5L1059.5 573.5L1059.5 574.5L1058.5 575.5L1056.5 575.5 M1058.5 575.5L1059.5 576.5L1059.5 577.5L1058.5 578.5L1056.5 578.5L1055.5 577.5 M1064.5 575.5L1061.5 575.5L1060.5 574.5L1060.5 573.5L1061.5 572.5L1063.5 572.5L1064.5 573.5L1064.5 577.5L1063.5 578.5L1060.5 578.5 M1069.5 572.5L1065.5 572.5L1065.5 575.5L1068.5 575.5L1069.5 576.5L1069.5 577.5L1068.5 578.5L1066.5 578.5L1065.5 577.5" stroke="#ffff00" stroke-width="1" fill="none"/><path d="M1084.5 573.5L1086.5 572.5L1086.5 578.5 M1091.5 572.5L1089.5 572.5L1088.5 573.5L1088.5 577.5L1089.5 578.5L1091.5 578.5L1092.5 577.5L1092.5 576.5L1091.5 575.5L1088.5 575.5" stroke="#ffff00" stroke-width="1" fill="none"/><path d="M1104.5 573.5L1106.5 572.5L1106.5 578.5" stroke="#ffff00" stroke-width="1" fill="none"/><path d="M1119.5 572.5L1121.5 572.5L1122.5 573.5L1122.5 577.5L1121.5 578.5L1119.5 578.5L1118.5 577.5L1118.5 573.5L1119.5 572.5 M1123.5 577.5L1123.5 578.5 M1125.5 573.5L1126.5 572.5L1128.5 572.5L1129.5 573.5L1129.5 574.5L1128.5 575.5L1127.5 575.5 M1128.5 575.5L1129.5 576.5L1129.5 577.5L1128.5 578.5L1126.5 578.5L1125.5 577.5 M1130.5 573.5L1132.5 572.5L1132.5 578.5 M1137.5 578.5L1137.5 572.5L1135.5 576.5L1138.5 576.5" stroke="#ffff00" stroke-width="1" fill="none"/><path d="M966.5 588.5L968.5 582.5L970.5 588.5 M967.5 586.5L969.5 586.5 M971.5 585.5L975.5 585.5 M980.5 588.5L980.5 582.5L978.5 586.5L981.5 586.5 M986.5 582.5L984.5 582.5L983.5 583.5L983.5 587.5L984.5 588.5L985.5 588.5L986.5 587.5L986.5 586.5L985.5 585.5L983.5 585.5" stroke="#ffff00" stroke-width="1" fill="none"/><path d="M1024.5 583.5L1025.5 582.5L1027.5 582.5L1028.5 583.5L1028.5 584.5L1027.5 585.5L1025.5 585.5 M1027.5 585.5L1028.5 586.5L1028.5 587.5L1027.5 588.5L1025.5 588.5L1024.5 587.5 M1033.5 585.5L1030.5 585.5L1029.5 584.5L1029.5 583.5L1030.5 582.5L1032.5 582.5L1033.5 583.5L1033.5 587.5L1032.5 588.5L1029.5 588.5 M1038.5 582.5L1034.5 582.5L1034.5 585.5L1037.5 585.5L1038.5 586.5L1038.5 587.5L1037.5 588.5L1035.5 588.5L1034.5 587.5" stroke="#ffff00" stroke-width="1" fill="none"/><path d="M1055.5 583.5L1056.5 582.5L1058.5 582.5L1059.5 583.5L1059.5 584.5L1055.5 588.5L1059.5 588.5 M1060.5 583.5L1061.5 582.5L1063.5 582.5L1064.5 583.5L1064.5 584.5L1063.5 585.5L1061.5 585.5 M1063.5 585.5L1064.5 586.5L1064.5 587.5L1063.5 588.5L1061.5 588.5L1060.5 587.5 M1065.5 583.5L1066.5 582.5L1068.5 582.5L1069.5 583.5L1069.5 584.5L1068.5 585.5L1066.5 585.5 M1068.5 585.5L1069.5 586.5L1069.5 587.5L1068.5 588.5L1066.5 588.5L1065.5 587.5" stroke="#ffff00" stroke-width="1" fill="none"/><path d="M1084.5 583.5L1086.5 582.5L1086.5 588.5 M1091.5 582.5L1089.5 582.5L1088.5 583.5L1088.5 587.5L1089.5 588.5L1091.5 588.5L1092.5 587.5L1092.5 586.5L1091.5 585.5L1088.5 585.5" stroke="#ffff00" stroke-width="1" fill="none"/><path d="M1104.5 583.5L1106.5 582.5L1106.5 588.5" stroke="#ffff00" stroke-width="1" fill="none"/><path d="M1119.5 582.5L1121.5 582.5L1122.5 583.5L1122.5 587.5L1121.5 588.5L1119.5 588.5L1118.5 587.5L1118.5 583.5L1119.5 582.5 M1123.5 587.5L1123.5 588.5 M1126.5 582.5L1128.5 582.5L1129.5 583.5L1129.5 587.5L1128.5 588.5L1126.5 588.5L1125.5 587.5L1125.5 583.5L1126.5 582.5 M1134.5 585.5L1131.5 585.5L1130.5 584.5L1130.5 583.5L1131.5 582.5L1133.5 582.5L1134.5 583.5L1134.5 587.5L1133.5 588.5L1131.5 588.5 M1135.5 583.5L1136.5 582.5L1138.5 582.5L1139.5 583.5L1139.5 584.5L1135.5 588.5L1139.5 588.5" stroke="#ffff00" stroke-width="1" fill="none"/><path d="M966.5 599.5L968.5 593.5L970.5 599.5 M967.5 597.5L969.5 597.5 M971.5 596.5L975.5 596.5 M980.5 599.5L980.5 593.5L978.5 597.5L981.5 597.5 M983.5 593.5L986.5 593.5L984.5 599.5 M988.5 597.5L989.5 596.5L990.5 597.5L991.5 596.5 M995.5 599.5L995.5 593.5L993.5 597.5L996.5 597.5 M999.5 593.5L1000.5 593.5L1001.5 594.5L1001.5 595.5L1000.5 596.5L999.5 596.5L998.5 595.5L998.5 594.5L999.5 593.5 M999.5 596.5L1000.5 596.5L1001.5 597.5L1001.5 598.5L1000.5 599.5L999.5 599.5L998.5 598.5L998.5 597.5L999.5 596.5" stroke="#ffff00" stroke-width="1" fill="none"/><path d="M1024.5 594.5L1025.5 593.5L1027.5 593.5L1028.5 594.5L1028.5 595.5L1027.5 596.5L1025.5 596.5 M1027.5 596.5L1028.5 597.5L1028.5 598.5L1027.5 599.5L1025.5 599.5L1024.5 598.5 M1033.5 596.5L1030.5 596.5L1029.5 595.5L1029.5 594.5L1030.5 593.5L1032.5 593.5L1033.5 594.5L1033.5 598.5L1032.5 599.5L1029.5 599.5 M1038.5 593.5L1034.5 593.5L1034.5 596.5L1037.5 596.5L1038.5 597.5L1038.5 598.5L1037.5 599.5L1035.5 599.5L1034.5 598.5" stroke="#ffff00" stroke-width="1" fill="none"/><path d="M1056.5 594.5L1057.5 593.5L1059.5 593.5L1060.5 594.5L1060.5 595.5L1059.5 596.5L1057.5 596.5 M1059.5 596.5L1060.5 597.5L1060.5 598.5L1059.5 599.5L1057.5 599.5L1056.5 598.5 M1061.5 593.5L1065.5 593.5L1062.5 599.5 M1066.5 594.5L1068.5 593.5L1068.5 599.5" stroke="#ffff00" stroke-width="1" fill="none"/><path d="M1084.5 594.5L1086.5 593.5L1086.5 599.5 M1091.5 593.5L1089.5 593.5L1088.5 594.5L1088.5 598.5L1089.5 599.5L1091.5 599.5L1092.5 598.5L1092.5 597.5L1091.5 596.5L1088.5 596.5" stroke="#ffff00" stroke-width="1" fill="none"/><path d="M1104.5 594.5L1105.5 593.5L1107.5 593.5L1108.5 594.5L1108.5 595.5L1104.5 599.5L1108.5 599.5" stroke="#ffff00" stroke-width="1" fill="none"/><path d="M1119.5 593.5L1121.5 593.5L1122.5 594.5L1122.5 598.5L1121.5 599.5L1119.5 599.5L1118.5 598.5L1118.5 594.5L1119.5 593.5 M1123.5 598.5L1123.5 599.5 M1125.5 594.5L1126.5 593.5L1128.5 593.5L1129.5 594.5L1129.5 595.5L1125.5 599.5L1129.5 599.5 M1134.5 596.5L1131.5 596.5L1130.5 595.5L1130.5 594.5L1131.5 593.5L1133.5 593.5L1134.5 594.5L1134.5 598.5L1133.5 599.5L1131.5 599.5 M1135.5 594.5L1136.5 593.5L1138.5 593.5L1139.5 594.5L1139.5 595.5L1138.5 596.5L1137.5 596.5 M1138.5 596.5L1139.5 597.5L1139.5 598.5L1138.5 599.5L1136.5 599.5L1135.5 598.5" stroke="#ffff00" stroke-width="1" fill="none"/><path d="M966.5 609.5L968.5 603.5L970.5 609.5 M967.5 607.5L969.5 607.5 M971.5 606.5L975.5 606.5 M980.5 609.5L980.5 603.5L978.5 607.5L981.5 607.5 M986.5 606.5L984.5 606.5L983.5 605.5L983.5 604.5L984.5 603.5L985.5 603.5L986.5 604.5L986.5 608.5L985.5 609.5L983.5 609.5" stroke="#ffff00" stroke-width="1" fill="none"/><path d="M1027.5 609.5L1027.5 603.5L1024.5 607.5L1028.5 607.5 M1030.5 603.5L1032.5 603.5L1033.5 604.5L1033.5 605.5L1032.5 606.5L1030.5 606.5L1029.5 605.5L1029.5 604.5L1030.5 603.5 M1030.5 606.5L1032.5 606.5L1033.5 607.5L1033.5 608.5L1032.5 609.5L1030.5 609.5L1029.5 608.5L1029.5 607.5L1030.5 606.5 M1038.5 606.5L1035.5 606.5L1034.5 605.5L1034.5 604.5L1035.5 603.5L1037.5 603.5L1038.5 604.5L1038.5 608.5L1037.5 609.5L1034.5 609.5" stroke="#ffff00" stroke-width="1" fill="none"/><path d="M1056.5 604.5L1058.5 603.5L1058.5 609.5 M1061.5 603.5L1063.5 603.5L1064.5 604.5L1064.5 608.5L1063.5 609.5L1061.5 609.5L1060.5 608.5L1060.5 604.5L1061.5 603.5 M1066.5 603.5L1068.5 603.5L1069.5 604.5L1069.5 608.5L1068.5 609.5L1066.5 609.5L1065.5 608.5L1065.5 604.5L1066.5 603.5" stroke="#ffff00" stroke-width="1" fill="none"/><path d="M1084.5 604.5L1086.5 603.5L1086.5 609.5 M1091.5 603.5L1089.5 603.5L1088.5 604.5L1088.5 608.5L1089.5 609.5L1091.5 609.5L1092.5 608.5L1092.5 607.5L1091.5 606.5L1088.5 606.5" stroke="#ffff00" stroke-width="1" fill="none"/><path d="M1104.5 604.5L1106.5 603.5L1106.5 609.5" stroke="#ffff00" stroke-width="1" fill="none"/><path d="M1119.5 603.5L1121.5 603.5L1122.5 604.5L1122.5 608.5L1121.5 609.5L1119.5 609.5L1118.5 608.5L1118.5 604.5L1119.5 603.5 M1123.5 608.5L1123.5 609.5 M1126.5 603.5L1128.5 603.5L1129.5 604.5L1129.5 608.5L1128.5 609.5L1126.5 609.5L1125.5 608.5L1125.5 604.5L1126.5 603.5 M1133.5 609.5L1133.5 603.5L1130.5 607.5L1134.5 607.5 M1139.5 606.5L1136.5 606.5L1135.5 605.5L1135.5 604.5L1136.5 603.5L1138.5 603.5L1139.5 604.5L1139.5 608.5L1138.5 609.5L1136.5 609.5" stroke="#ffff00" stroke-width="1" fill="none"/><path d="M966.5 619.5L968.5 613.5L970.5 619.5 M967.5 617.5L969.5 617.5 M971.5 616.5L975.5 616.5 M981.5 613.5L978.5 613.5L978.5 616.5L980.5 616.5L981.5 617.5L981.5 618.5L980.5 619.5L979.5 619.5L978.5 618.5 M984.5 613.5L985.5 613.5L986.5 614.5L986.5 618.5L985.5 619.5L984.5 619.5L983.5 618.5L983.5 614.5L984.5 613.5 M988.5 617.5L989.5 616.5L990.5 617.5L991.5 616.5 M996.5 613.5L993.5 613.5L993.5 616.5L995.5 616.5L996.5 617.5L996.5 618.5L995.5 619.5L994.5 619.5L993.5 618.5 M998.5 614.5L1000.5 613.5L1000.5 619.5" stroke="#ffff00" stroke-width="1" fill="none"/><path d="M1027.5 613.5L1025.5 613.5L1024.5 614.5L1024.5 618.5L1025.5 619.5L1027.5 619.5L1028.5 618.5L1028.5 617.5L1027.5 616.5L1024.5 616.5 M1032.5 613.5L1030.5 613.5L1029.5 614.5L1029.5 618.5L1030.5 619.5L1032.5 619.5L1033.5 618.5L1033.5 617.5L1032.5 616.5L1029.5 616.5 M1034.5 614.5L1035.5 613.5L1037.5 613.5L1038.5 614.5L1038.5 615.5L1034.5 619.5L1038.5 619.5" stroke="#ffff00" stroke-width="1" fill="none"/><path d="M1056.5 614.5L1058.5 613.5L1058.5 619.5 M1061.5 613.5L1063.5 613.5L1064.5 614.5L1064.5 618.5L1063.5 619.5L1061.5 619.5L1060.5 618.5L1060.5 614.5L1061.5 613.5 M1066.5 613.5L1068.5 613.5L1069.5 614.5L1069.5 618.5L1068.5 619.5L1066.5 619.5L1065.5 618.5L1065.5 614.5L1066.5 613.5" stroke="#ffff00" stroke-width="1" fill="none"/><path d="M1084.5 614.5L1086.5 613.5L1086.5 619.5 M1091.5 613.5L1089.5 613.5L1088.5 614.5L1088.5 618.5L1089.5 619.5L1091.5 619.5L1092.5 618.5L1092.5 617.5L1091.5 616.5L1088.5 616.5" stroke="#ffff00" stroke-width="1" fill="none"/><path d="M1104.5 614.5L1105.5 613.5L1107.5 613.5L1108.5 614.5L1108.5 615.5L1104.5 619.5L1108.5 619.5" stroke="#ffff00" stroke-width="1" fill="none"/><path d="M1119.5 613.5L1121.5 613.5L1122.5 614.5L1122.5 618.5L1121.5 619.5L1119.5 619.5L1118.5 618.5L1118.5 614.5L1119.5 613.5 M1123.5 618.5L1123.5 619.5 M1125.5 614.5L1127.5 613.5L1127.5 619.5 M1130.5 614.5L1130.5 613.5L1132.5 613.5L1133.5 614.5L1133.5 615.5L1132.5 616.5L1131.5 616.5 M1132.5 616.5L1133.5 617.5L1133.5 618.5L1132.5 619.5L1130.5 619.5L1130.5 618.5 M1135.5 614.5L1135.5 613.5L1137.5 613.5L1138.5 614.5L1138.5 615.5L1135.5 619.5L1138.5 619.5" stroke="#ffff00" stroke-width="1" fill="none"/><path d="M966.5 629.5L968.5 623.5L970.5 629.5 M967.5 627.5L969.5 627.5 M971.5 626.5L975.5 626.5 M981.5 623.5L978.5 623.5L978.5 626.5L980.5 626.5L981.5 627.5L981.5 628.5L980.5 629.5L979.5 629.5L978.5 628.5 M983.5 624.5L984.5 623.5L985.5 623.5L986.5 624.5L986.5 625.5L983.5 629.5L986.5 629.5" stroke="#ffff00" stroke-width="1" fill="none"/><path d="M1025.5 624.5L1026.5 623.5L1028.5 623.5L1029.5 624.5L1029.5 625.5L1025.5 629.5L1029.5 629.5 M1031.5 623.5L1033.5 623.5L1034.5 624.5L1034.5 625.5L1033.5 626.5L1031.5 626.5L1030.5 625.5L1030.5 624.5L1031.5 623.5 M1031.5 626.5L1033.5 626.5L1034.5 627.5L1034.5 628.5L1033.5 629.5L1031.5 629.5L1030.5 628.5L1030.5 627.5L1031.5 626.5 M1035.5 624.5L1037.5 623.5L1037.5 629.5" stroke="#ffff00" stroke-width="1" fill="none"/><path d="M1056.5 624.5L1058.5 623.5L1058.5 629.5 M1061.5 623.5L1063.5 623.5L1064.5 624.5L1064.5 628.5L1063.5 629.5L1061.5 629.5L1060.5 628.5L1060.5 624.5L1061.5 623.5 M1066.5 623.5L1068.5 623.5L1069.5 624.5L1069.5 628.5L1068.5 629.5L1066.5 629.5L1065.5 628.5L1065.5 624.5L1066.5 623.5" stroke="#ffff00" stroke-width="1" fill="none"/><path d="M1084.5 624.5L1086.5 623.5L1086.5 629.5 M1091.5 623.5L1089.5 623.5L1088.5 624.5L1088.5 628.5L1089.5 629.5L1091.5 629.5L1092.5 628.5L1092.5 627.5L1091.5 626.5L1088.5 626.5" stroke="#ffff00" stroke-width="1" fill="none"/><path d="M1104.5 624.5L1106.5 623.5L1106.5 629.5" stroke="#ffff00" stroke-width="1" fill="none"/><path d="M1119.5 623.5L1121.5 623.5L1122.5 624.5L1122.5 628.5L1121.5 629.5L1119.5 629.5L1118.5 628.5L1118.5 624.5L1119.5 623.5 M1123.5 628.5L1123.5 629.5 M1126.5 623.5L1128.5 623.5L1129.5 624.5L1129.5 628.5L1128.5 629.5L1126.5 629.5L1125.5 628.5L1125.5 624.5L1126.5 623.5 M1130.5 624.5L1131.5 623.5L1133.5 623.5L1134.5 624.5L1134.5 625.5L1130.5 629.5L1134.5 629.5 M1136.5 623.5L1138.5 623.5L1139.5 624.5L1139.5 625.5L1138.5 626.5L1136.5 626.5L1135.5 625.5L1135.5 624.5L1136.5 623.5 M1136.5 626.5L1138.5 626.5L1139.5 627.5L1139.5 628.5L1138.5 629.5L1136.5 629.5L1135.5 628.5L1135.5 627.5L1136.5 626.5" stroke="#ffff00" stroke-width="1" fill="none"/><path d="M966.5 640.5L968.5 634.5L970.5 640.5 M967.5 638.5L969.5 638.5 M971.5 637.5L975.5 637.5 M981.5 634.5L978.5 634.5L978.5 637.5L980.5 637.5L981.5 638.5L981.5 639.5L980.5 640.5L979.5 640.5L978.5 639.5 M983.5 635.5L984.5 634.5L985.5 634.5L986.5 635.5L986.5 636.5L985.5 637.5L984.5 637.5 M985.5 637.5L986.5 638.5L986.5 639.5L985.5 640.5L984.5 640.5L983.5 639.5 M988.5 638.5L989.5 637.5L990.5 638.5L991.5 637.5 M996.5 634.5L993.5 634.5L993.5 637.5L995.5 637.5L996.5 638.5L996.5 639.5L995.5 640.5L994.5 640.5L993.5 639.5 M1000.5 640.5L1000.5 634.5L998.5 638.5L1001.5 638.5" stroke="#ffff00" stroke-width="1" fill="none"/><path d="M1027.5 634.5L1025.5 634.5L1024.5 635.5L1024.5 639.5L1025.5 640.5L1027.5 640.5L1028.5 639.5L1028.5 638.5L1027.5 637.5L1024.5 637.5 M1029.5 635.5L1030.5 634.5L1032.5 634.5L1033.5 635.5L1033.5 636.5L1032.5 637.5L1030.5 637.5 M1032.5 637.5L1033.5 638.5L1033.5 639.5L1032.5 640.5L1030.5 640.5L1029.5 639.5 M1034.5 635.5L1035.5 634.5L1037.5 634.5L1038.5 635.5L1038.5 636.5L1037.5 637.5L1035.5 637.5 M1037.5 637.5L1038.5 638.5L1038.5 639.5L1037.5 640.5L1035.5 640.5L1034.5 639.5" stroke="#ffff00" stroke-width="1" fill="none"/><path d="M1056.5 635.5L1058.5 634.5L1058.5 640.5 M1061.5 634.5L1063.5 634.5L1064.5 635.5L1064.5 639.5L1063.5 640.5L1061.5 640.5L1060.5 639.5L1060.5 635.5L1061.5 634.5 M1066.5 634.5L1068.5 634.5L1069.5 635.5L1069.5 639.5L1068.5 640.5L1066.5 640.5L1065.5 639.5L1065.5 635.5L1066.5 634.5" stroke="#ffff00" stroke-width="1" fill="none"/><path d="M1084.5 635.5L1086.5 634.5L1086.5 640.5 M1091.5 634.5L1089.5 634.5L1088.5 635.5L1088.5 639.5L1089.5 640.5L1091.5 640.5L1092.5 639.5L1092.5 638.5L1091.5 637.5L1088.5 637.5" stroke="#ffff00" stroke-width="1" fill="none"/><path d="M1104.5 635.5L1105.5 634.5L1107.5 634.5L1108.5 635.5L1108.5 636.5L1104.5 640.5L1108.5 640.5" stroke="#ffff00" stroke-width="1" fill="none"/><path d="M1119.5 634.5L1121.5 634.5L1122.5 635.5L1122.5 639.5L1121.5 640.5L1119.5 640.5L1118.5 639.5L1118.5 635.5L1119.5 634.5 M1123.5 639.5L1123.5 640.5 M1125.5 635.5L1127.5 634.5L1127.5 640.5 M1130.5 635.5L1130.5 634.5L1132.5 634.5L1133.5 635.5L1133.5 636.5L1130.5 640.5L1133.5 640.5 M1135.5 634.5L1138.5 634.5L1135.5 640.5" stroke="#ffff00" stroke-width="1" fill="none"/><path d="M966.5 650.5L968.5 644.5L970.5 650.5 M967.5 648.5L969.5 648.5 M971.5 647.5L975.5 647.5 M981.5 644.5L978.5 644.5L978.5 647.5L980.5 647.5L981.5 648.5L981.5 649.5L980.5 650.5L979.5 650.5L978.5 649.5 M986.5 644.5L983.5 644.5L983.5 647.5L985.5 647.5L986.5 648.5L986.5 649.5L985.5 650.5L984.5 650.5L983.5 649.5" stroke="#ffff00" stroke-width="1" fill="none"/><path d="M1024.5 644.5L1028.5 644.5L1025.5 650.5 M1032.5 650.5L1032.5 644.5L1029.5 648.5L1033.5 648.5 M1034.5 644.5L1038.5 644.5L1035.5 650.5" stroke="#ffff00" stroke-width="1" fill="none"/><path d="M1056.5 645.5L1058.5 644.5L1058.5 650.5 M1061.5 644.5L1063.5 644.5L1064.5 645.5L1064.5 649.5L1063.5 650.5L1061.5 650.5L1060.5 649.5L1060.5 645.5L1061.5 644.5 M1066.5 644.5L1068.5 644.5L1069.5 645.5L1069.5 649.5L1068.5 650.5L1066.5 650.5L1065.5 649.5L1065.5 645.5L1066.5 644.5" stroke="#ffff00" stroke-width="1" fill="none"/><path d="M1084.5 645.5L1086.5 644.5L1086.5 650.5 M1091.5 644.5L1089.5 644.5L1088.5 645.5L1088.5 649.5L1089.5 650.5L1091.5 650.5L1092.5 649.5L1092.5 648.5L1091.5 647.5L1088.5 647.5" stroke="#ffff00" stroke-width="1" fill="none"/><path d="M1104.5 645.5L1106.5 644.5L1106.5 650.5" stroke="#ffff00" stroke-width="1" fill="none"/><path d="M1119.5 644.5L1121.5 644.5L1122.5 645.5L1122.5 649.5L1121.5 650.5L1119.5 650.5L1118.5 649.5L1118.5 645.5L1119.5 644.5 M1123.5 649.5L1123.5 650.5 M1126.5 644.5L1128.5 644.5L1129.5 645.5L1129.5 649.5L1128.5 650.5L1126.5 650.5L1125.5 649.5L1125.5 645.5L1126.5 644.5 M1130.5 644.5L1134.5 644.5L1131.5 650.5 M1139.5 644.5L1136.5 644.5L1135.5 647.5L1138.5 647.5L1139.5 648.5L1139.5 649.5L1138.5 650.5L1136.5 650.5L1135.5 649.5" stroke="#ffff00" stroke-width="1" fill="none"/><path d="M1105.5 654.5L1101.5 654.5L1101.5 657.5L1104.5 657.5L1105.5 658.5L1105.5 659.5L1104.5 660.5L1102.5 660.5L1101.5 659.5 M1110.5 654.5L1106.5 654.5L1106.5 657.5L1109.5 657.5L1110.5 658.5L1110.5 659.5L1109.5 660.5L1107.5 660.5L1106.5 659.5" stroke="#ffff00" stroke-width="1" fill="none"/><path d="M1117.5 655.5L1119.5 654.5L1119.5 660.5 M1122.5 654.5L1124.5 654.5L1125.5 655.5L1125.5 659.5L1124.5 660.5L1122.5 660.5L1121.5 659.5L1121.5 655.5L1122.5 654.5 M1127.5 659.5L1127.5 660.5 M1129.5 655.5L1130.5 654.5L1130.5 660.5 M1133.5 655.5L1134.5 654.5L1135.5 654.5L1136.5 655.5L1136.5 656.5L1135.5 657.5L1134.5 657.5 M1135.5 657.5L1136.5 658.5L1136.5 659.5L1135.5 660.5L1134.5 660.5L1133.5 659.5 M1138.5 655.5L1139.5 654.5L1139.5 660.5" stroke="#ffff00" stroke-width="1" fill="none"/></g><rect x="391.5" y="247.5" width="43.0" height="218.8" fill="none" stroke="#ffff00" stroke-width="1"/><line x1="391.5" y1="256.3" x2="434.5" y2="256.3" stroke="#ffff00" stroke-width="1"/><line x1="391.5" y1="291.3" x2="434.5" y2="291.3" stroke="#ffff00" stroke-width="1"/><line x1="391.5" y1="326.3" x2="434.5" y2="326.3" stroke="#ffff00" stroke-width="1"/><line x1="391.5" y1="361.3" x2="434.5" y2="361.3" stroke="#ffff00" stroke-width="1"/><line x1="391.5" y1="396.3" x2="434.5" y2="396.3" stroke="#ffff00" stroke-width="1"/><line x1="391.5" y1="431.3" x2="434.5" y2="431.3" stroke="#ffff00" stroke-width="1"/><rect x="473.5" y="247.5" width="116.0" height="218.8" fill="none" stroke="#ffff00" stroke-width="1"/><line x1="473.5" y1="256.3" x2="589.5" y2="256.3" stroke="#ffff00" stroke-width="1"/><line x1="473.5" y1="291.3" x2="589.5" y2="291.3" stroke="#ffff00" stroke-width="1"/><line x1="473.5" y1="326.3" x2="589.5" y2="326.3" stroke="#ffff00" stroke-width="1"/><line x1="473.5" y1="361.3" x2="589.5" y2="361.3" stroke="#ffff00" stroke-width="1"/><line x1="473.5" y1="396.3" x2="589.5" y2="396.3" stroke="#ffff00" stroke-width="1"/><line x1="473.5" y1="431.3" x2="589.5" y2="431.3" stroke="#ffff00" stroke-width="1"/><line x1="531.5" y1="247.5" x2="531.5" y2="256.3" stroke="#ffff00" stroke-width="1"/><line x1="531.5" y1="256.3" x2="531.5" y2="291.3" stroke="#ffff00" stroke-width="1"/><line x1="531.5" y1="291.3" x2="531.5" y2="326.3" stroke="#ffff00" stroke-width="1"/><line x1="531.5" y1="326.3" x2="531.5" y2="361.3" stroke="#ffff00" stroke-width="1"/><line x1="531.5" y1="361.3" x2="531.5" y2="396.3" stroke="#ffff00" stroke-width="1"/><line x1="531.5" y1="396.3" x2="531.5" y2="431.3" stroke="#ffff00" stroke-width="1"/><line x1="531.5" y1="431.3" x2="531.5" y2="466.3" stroke="#ffff00" stroke-width="1"/><rect x="628.5" y="247.5" width="25.0" height="218.8" fill="none" stroke="#ffff00" stroke-width="1"/><line x1="628.5" y1="256.3" x2="653.5" y2="256.3" stroke="#ffff00" stroke-width="1"/><line x1="628.5" y1="291.3" x2="653.5" y2="291.3" stroke="#ffff00" stroke-width="1"/><line x1="628.5" y1="326.3" x2="653.5" y2="326.3" stroke="#ffff00" stroke-width="1"/><line x1="628.5" y1="361.3" x2="653.5" y2="361.3" stroke="#ffff00" stroke-width="1"/><line x1="628.5" y1="396.3" x2="653.5" y2="396.3" stroke="#ffff00" stroke-width="1"/><line x1="628.5" y1="431.3" x2="653.5" y2="431.3" stroke="#ffff00" stroke-width="1"/><rect x="692.5" y="247.5" width="111.0" height="218.8" fill="none" stroke="#ffff00" stroke-width="1"/><line x1="692.5" y1="256.3" x2="803.5" y2="256.3" stroke="#ffff00" stroke-width="1"/><line x1="692.5" y1="291.3" x2="803.5" y2="291.3" stroke="#ffff00" stroke-width="1"/><line x1="692.5" y1="326.3" x2="803.5" y2="326.3" stroke="#ffff00" stroke-width="1"/><line x1="692.5" y1="361.3" x2="803.5" y2="361.3" stroke="#ffff00" stroke-width="1"/><line x1="692.5" y1="396.3" x2="803.5" y2="396.3" stroke="#ffff00" stroke-width="1"/><line x1="692.5" y1="431.3" x2="803.5" y2="431.3" stroke="#ffff00" stroke-width="1"/><line x1="748.5" y1="247.5" x2="748.5" y2="256.3" stroke="#ffff00" stroke-width="1"/><line x1="713.5" y1="256.3" x2="713.5" y2="291.3" stroke="#ffff00" stroke-width="1"/><line x1="783.5" y1="256.3" x2="783.5" y2="291.3" stroke="#ffff00" stroke-width="2"/><line x1="748.5" y1="291.3" x2="748.5" y2="326.3" stroke="#ffff00" stroke-width="1"/><line x1="713.5" y1="326.3" x2="713.5" y2="361.3" stroke="#ffff00" stroke-width="1"/><line x1="783.5" y1="326.3" x2="783.5" y2="361.3" stroke="#ffff00" stroke-width="2"/><line x1="748.5" y1="361.3" x2="748.5" y2="396.3" stroke="#ffff00" stroke-width="1"/><line x1="713.5" y1="396.3" x2="713.5" y2="431.3" stroke="#ffff00" stroke-width="1"/><line x1="783.5" y1="396.3" x2="783.5" y2="431.3" stroke="#ffff00" stroke-width="2"/><line x1="748.5" y1="431.3" x2="748.5" y2="466.3" stroke="#ffff00" stroke-width="1"/><rect x="842.5" y="247.5" width="66.0" height="218.8" fill="none" stroke="#ffff00" stroke-width="1"/><line x1="842.5" y1="256.3" x2="908.5" y2="256.3" stroke="#ffff00" stroke-width="1"/><line x1="842.5" y1="291.3" x2="908.5" y2="291.3" stroke="#ffff00" stroke-width="1"/><line x1="842.5" y1="326.3" x2="908.5" y2="326.3" stroke="#ffff00" stroke-width="1"/><line x1="842.5" y1="361.3" x2="908.5" y2="361.3" stroke="#ffff00" stroke-width="1"/><line x1="842.5" y1="396.3" x2="908.5" y2="396.3" stroke="#ffff00" stroke-width="1"/><line x1="842.5" y1="431.3" x2="908.5" y2="431.3" stroke="#ffff00" stroke-width="1"/><line x1="875.5" y1="256.3" x2="875.5" y2="291.3" stroke="#ffff00" stroke-width="1"/><line x1="875.5" y1="326.3" x2="875.5" y2="361.3" stroke="#ffff00" stroke-width="1"/><line x1="875.5" y1="396.3" x2="875.5" y2="431.3" stroke="#ffff00" stroke-width="1"/><path d="M371 250l5 3" stroke="#00ff00" stroke-width="1"/><path d="M380.5 566.5V608.5H496.5V584H607.5V517.5" stroke="#ffff00" stroke-width="2" fill="none"/><rect x="964.5" y="212.5" width="235.0" height="450.0" fill="none" stroke="#ffff00" stroke-width="1"/><line x1="964.5" y1="222.5" x2="1199.5" y2="222.5" stroke="#ffff00" stroke-width="1"/><line x1="964.5" y1="232.5" x2="1199.5" y2="232.5" stroke="#ffff00" stroke-width="1"/><line x1="964.5" y1="243.5" x2="1199.5" y2="243.5" stroke="#ffff00" stroke-width="1"/><line x1="964.5" y1="253.5" x2="1199.5" y2="253.5" stroke="#ffff00" stroke-width="1"/><line x1="964.5" y1="263.5" x2="1199.5" y2="263.5" stroke="#ffff00" stroke-width="1"/><line x1="964.5" y1="273.5" x2="1199.5" y2="273.5" stroke="#ffff00" stroke-width="1"/><line x1="964.5" y1="284.5" x2="1199.5" y2="284.5" stroke="#ffff00" stroke-width="1"/><line x1="964.5" y1="294.5" x2="1199.5" y2="294.5" stroke="#ffff00" stroke-width="1"/><line x1="964.5" y1="304.5" x2="1199.5" y2="304.5" stroke="#ffff00" stroke-width="1"/><line x1="964.5" y1="314.5" x2="1199.5" y2="314.5" stroke="#ffff00" stroke-width="1"/><line x1="964.5" y1="325.5" x2="1199.5" y2="325.5" stroke="#ffff00" stroke-width="1"/><line x1="964.5" y1="335.5" x2="1199.5" y2="335.5" stroke="#ffff00" stroke-width="1"/><line x1="964.5" y1="345.5" x2="1199.5" y2="345.5" stroke="#ffff00" stroke-width="1"/><line x1="964.5" y1="355.5" x2="1199.5" y2="355.5" stroke="#ffff00" stroke-width="1"/><line x1="964.5" y1="366.5" x2="1199.5" y2="366.5" stroke="#ffff00" stroke-width="1"/><line x1="964.5" y1="376.5" x2="1199.5" y2="376.5" stroke="#ffff00" stroke-width="1"/><line x1="964.5" y1="386.5" x2="1199.5" y2="386.5" stroke="#ffff00" stroke-width="1"/><line x1="964.5" y1="396.5" x2="1199.5" y2="396.5" stroke="#ffff00" stroke-width="1"/><line x1="964.5" y1="406.5" x2="1199.5" y2="406.5" stroke="#ffff00" stroke-width="1"/><line x1="964.5" y1="417.5" x2="1199.5" y2="417.5" stroke="#ffff00" stroke-width="1"/><line x1="964.5" y1="427.5" x2="1199.5" y2="427.5" stroke="#ffff00" stroke-width="1"/><line x1="964.5" y1="437.5" x2="1199.5" y2="437.5" stroke="#ffff00" stroke-width="1"/><line x1="964.5" y1="447.5" x2="1199.5" y2="447.5" stroke="#ffff00" stroke-width="1"/><line x1="964.5" y1="458.5" x2="1199.5" y2="458.5" stroke="#ffff00" stroke-width="1"/><line x1="964.5" y1="468.5" x2="1199.5" y2="468.5" stroke="#ffff00" stroke-width="1"/><line x1="964.5" y1="478.5" x2="1199.5" y2="478.5" stroke="#ffff00" stroke-width="1"/><line x1="964.5" y1="488.5" x2="1199.5" y2="488.5" stroke="#ffff00" stroke-width="1"/><line x1="964.5" y1="499.5" x2="1199.5" y2="499.5" stroke="#ffff00" stroke-width="1"/><line x1="964.5" y1="509.5" x2="1199.5" y2="509.5" stroke="#ffff00" stroke-width="1"/><line x1="964.5" y1="519.5" x2="1199.5" y2="519.5" stroke="#ffff00" stroke-width="1"/><line x1="964.5" y1="529.5" x2="1199.5" y2="529.5" stroke="#ffff00" stroke-width="1"/><line x1="964.5" y1="539.5" x2="1199.5" y2="539.5" stroke="#ffff00" stroke-width="1"/><line x1="964.5" y1="550.5" x2="1199.5" y2="550.5" stroke="#ffff00" stroke-width="1"/><line x1="964.5" y1="560.5" x2="1199.5" y2="560.5" stroke="#ffff00" stroke-width="1"/><line x1="964.5" y1="570.5" x2="1199.5" y2="570.5" stroke="#ffff00" stroke-width="1"/><line x1="964.5" y1="580.5" x2="1199.5" y2="580.5" stroke="#ffff00" stroke-width="1"/><line x1="964.5" y1="591.5" x2="1199.5" y2="591.5" stroke="#ffff00" stroke-width="1"/><line x1="964.5" y1="601.5" x2="1199.5" y2="601.5" stroke="#ffff00" stroke-width="1"/><line x1="964.5" y1="611.5" x2="1199.5" y2="611.5" stroke="#ffff00" stroke-width="1"/><line x1="964.5" y1="621.5" x2="1199.5" y2="621.5" stroke="#ffff00" stroke-width="1"/><line x1="964.5" y1="632.5" x2="1199.5" y2="632.5" stroke="#ffff00" stroke-width="1"/><line x1="964.5" y1="642.5" x2="1199.5" y2="642.5" stroke="#ffff00" stroke-width="1"/><line x1="964.5" y1="652.5" x2="1199.5" y2="652.5" stroke="#ffff00" stroke-width="1"/><line x1="1015.5" y1="222.5" x2="1015.5" y2="652.5" stroke="#ffff00" stroke-width="1"/><line x1="1046.5" y1="222.5" x2="1046.5" y2="652.5" stroke="#ffff00" stroke-width="1"/><line x1="1077.5" y1="222.5" x2="1077.5" y2="652.5" stroke="#ffff00" stroke-width="1"/><line x1="1097.5" y1="222.5" x2="1097.5" y2="662.5" stroke="#ffff00" stroke-width="1"/><line x1="1113.5" y1="222.5" x2="1113.5" y2="662.5" stroke="#ffff00" stroke-width="1"/><line x1="1143.5" y1="222.5" x2="1143.5" y2="662.5" stroke="#ffff00" stroke-width="1"/><text x="1082" y="220.5" fill="#ffff00" font-size="8" font-weight="bold" text-anchor="middle">板件尺寸清单</text><text x="966" y="230.5" fill="#ffff00" font-size="8" font-weight="bold" text-anchor="start">板件编号</text><text x="1031" y="230.5" fill="#ffff00" font-size="8" font-weight="bold" text-anchor="middle">长</text><text x="1062" y="230.5" fill="#ffff00" font-size="8" font-weight="bold" text-anchor="middle">宽</text><text x="1087.5" y="230.5" fill="#ffff00" font-size="8" font-weight="bold" text-anchor="middle">厚</text><text x="1105.5" y="230.5" fill="#ffff00" font-size="8" font-weight="bold" text-anchor="middle">数量</text><text x="1128.5" y="230.5" fill="#ffff00" font-size="8" font-weight="bold" text-anchor="middle">面积</text><text x="1146" y="230.5" fill="#ffff00" font-size="8" font-weight="bold" text-anchor="start">备注</text><text x="1030" y="660.5" fill="#ffff00" font-size="8" font-weight="bold" text-anchor="middle">合计</text><line x1="155" y1="623.5" x2="1600" y2="623.5" stroke="#ffffff" stroke-width="1"/><line x1="704.5" y1="58" x2="704.5" y2="777" stroke="#ffffff" stroke-width="1"/><rect x="696.5" y="615.5" width="16" height="16" fill="#000" stroke="#fff" stroke-width="1"/><line x1="704.5" y1="615.5" x2="704.5" y2="631.5" stroke="#fff"/><line x1="696.5" y1="623.5" x2="712.5" y2="623.5" stroke="#fff"/><path d="M174.5 706V757.5H225" stroke="#fff" stroke-width="1" fill="none"/><rect x="170.5" y="752.5" width="9" height="9" fill="#000" stroke="#fff"/><path d="M176.5 690l6 6 6-6M182.5 696v7" stroke="#fff" stroke-width="1.2" fill="none"/><path d="M229 743l13 13M242 743l-13 13" stroke="#fff" stroke-width="1.2" fill="none"/></svg>
<div class="a" style="left:161px;top:33px;width:96px;height:464px;background:#8e8e8e;border-radius:5px 5px 0 0"></div>
<div class="a" style="left:163.5px;top:56px;width:91px;height:438px;background:#b0d0e2;"></div>
<svg class="ic" style="left:163px;top:34px" width="20" height="22" viewBox="0 0 20 22"><path d="M9 3C4 2 1.5 9 2.5 14c.5 4 3 6 6 4" stroke="#ee1111" stroke-width="3.4" fill="none"/><path d="M8.5 2.5l1.5 3" stroke="#ee1111" stroke-width="2.5"/><path d="M17 8c-3 0-4 3-2 6s0 5-3 5" stroke="#ee1111" stroke-width="2.8" fill="none"/></svg>
<div class="a cjk" style="left:186px;top:35px;height:18px;line-height:18px;font-size:12px;color:#dde8f4">开单</div>
<svg class="ic" style="left:236px;top:38px" width="12" height="12" viewBox="0 0 12 12"><path d="M1 1l10 10M11 1L1 11" stroke="#9aa8b4" stroke-width="1.5"/></svg>
<div class="a" style="left:165px;top:58px;width:88px;height:23px;border:1px solid #707070;border-radius:3px;background:#f8f8f8"></div>
<div class="a cjk bt" style="left:167.5px;top:60.5px;width:83px;height:18px;background:#00e600;line-height:16px;text-align:center;font-size:12px;color:#000">开完成面</div>
<div class="a" style="left:165px;top:89px;width:88px;height:23px;border:1px solid #707070;border-radius:3px;background:#f8f8f8"></div>
<div class="a cjk bt" style="left:167.5px;top:91.5px;width:83px;height:18px;background:#00b0f0;line-height:16px;text-align:center;font-size:12px;color:#000">长宽互换</div>
<div class="a" style="left:165px;top:120px;width:88px;height:23px;border:1px solid #707070;border-radius:3px;background:#f8f8f8"></div>
<div class="a cjk bt" style="left:167.5px;top:122.5px;width:83px;height:18px;background:#f0f0c0;line-height:16px;text-align:center;font-size:12px;color:#000">属性面板</div>
<div class="a" style="left:165px;top:151px;width:88px;height:23px;border:1px solid #707070;border-radius:3px;background:#f8f8f8"></div>
<div class="a cjk bt" style="left:167.5px;top:153.5px;width:83px;height:18px;background:#f0f0c0;line-height:16px;text-align:center;font-size:12px;color:#000">开粘接条</div>
<div class="a" style="left:165px;top:182px;width:88px;height:23px;border:1px solid #707070;border-radius:3px;background:#f8f8f8"></div>
<div class="a cjk bt" style="left:167.5px;top:184.5px;width:83px;height:18px;background:#f0f0c0;line-height:16px;text-align:center;font-size:12px;color:#000">附加工艺</div>
<div class="a" style="left:165px;top:213px;width:88px;height:23px;border:1px solid #707070;border-radius:3px;background:#f8f8f8"></div>
<div class="a cjk bt" style="left:167.5px;top:215.5px;width:83px;height:18px;background:#f0f0c0;line-height:16px;text-align:center;font-size:12px;color:#000">加工核对</div>
<div class="a" style="left:165px;top:244px;width:88px;height:23px;border:1px solid #707070;border-radius:3px;background:#f8f8f8"></div>
<div class="a cjk bt" style="left:167.5px;top:246.5px;width:83px;height:18px;background:#b0b0b0;line-height:16px;text-align:center;font-size:12px;color:#000">列出箱号</div>
<div class="a" style="left:165px;top:275px;width:88px;height:23px;border:1px solid #707070;border-radius:3px;background:#f8f8f8"></div>
<div class="a cjk bt" style="left:167.5px;top:277.5px;width:83px;height:18px;background:#b0b0b0;line-height:16px;text-align:center;font-size:12px;color:#000">清单-CAD</div>
<div class="a" style="left:165px;top:306px;width:88px;height:23px;border:1px solid #2080e0;border-radius:3px;background:#f8f8f8"></div>
<div class="a" style="left:166px;top:307px;width:86px;height:21px;border:1px solid #40b0f0;border-radius:2px"></div>
<div class="a cjk bt" style="left:167.5px;top:308.5px;width:83px;height:18px;background:#f0c080;line-height:16px;text-align:center;font-size:12px;color:#000">线型米数</div>
<div class="a" style="left:165px;top:337px;width:88px;height:23px;border:1px solid #707070;border-radius:3px;background:#f8f8f8"></div>
<div class="a cjk bt" style="left:167.5px;top:339.5px;width:83px;height:18px;background:#f0c080;line-height:16px;text-align:center;font-size:12px;color:#000">清除数据</div>
<div class="a" style="left:165px;top:368px;width:88px;height:23px;border:1px solid #707070;border-radius:3px;background:#f8f8f8"></div>
<div class="a cjk bt" style="left:167.5px;top:370.5px;width:83px;height:18px;background:#f0c080;line-height:16px;text-align:center;font-size:12px;color:#000">定义工序</div>
<div class="a" style="left:165px;top:399px;width:88px;height:23px;border:1px solid #707070;border-radius:3px;background:#f8f8f8"></div>
<div class="a cjk bt" style="left:167.5px;top:401.5px;width:83px;height:18px;background:#1080f0;line-height:16px;text-align:center;font-size:12px;color:#000">开槽打孔</div>
<div class="a" style="left:165px;top:430px;width:88px;height:23px;border:1px solid #707070;border-radius:3px;background:#f8f8f8"></div>
<div class="a cjk bt" style="left:167.5px;top:432.5px;width:83px;height:18px;background:#00e600;line-height:16px;text-align:center;font-size:12px;color:#000">开单设置</div>
<div class="a" style="left:165px;top:461px;width:88px;height:23px;border:1px solid #707070;border-radius:3px;background:#f8f8f8"></div>
<div class="a cjk bt" style="left:167.5px;top:463.5px;width:83px;height:18px;background:#00e600;line-height:16px;text-align:center;font-size:12px;color:#000">导出清单</div>
<div class="a" style="left:155px;top:776px;width:1445px;height:15px;background:#f0f0f0;"></div>
<div class="a" style="left:155px;top:790px;width:1445px;height:3px;background:#e4e4e4;"></div>
<div class="a" style="left:155px;top:793px;width:1445px;height:5px;background:#646464;"></div>
<div class="a" style="left:156px;top:777px;width:13px;height:13px;background:#f2f2f2;border-right:1px solid #c8c8c8"></div>
<div class="a" style="left:170px;top:777px;width:13px;height:13px;background:#f2f2f2;border-right:1px solid #c8c8c8"></div>
<div class="a" style="left:184px;top:777px;width:13px;height:13px;background:#f2f2f2;border-right:1px solid #c8c8c8"></div>
<div class="a" style="left:198px;top:777px;width:13px;height:13px;background:#f2f2f2;border-right:1px solid #c8c8c8"></div>
<svg class="ic" style="left:158px;top:779px" width="10" height="10" viewBox="0 0 10 10"><path d="M1.5 0v10" stroke="#555" stroke-width="1.5"/><path d="M9 0.5v9L3 5z" fill="#666"/></svg>
<svg class="ic" style="left:174px;top:779px" width="8" height="10" viewBox="0 0 8 10"><path d="M7 0.5v9L1 5z" fill="#666"/></svg>
<svg class="ic" style="left:187px;top:779px" width="8" height="10" viewBox="0 0 8 10"><path d="M1 0.5v9L7 5z" fill="#666"/></svg>
<svg class="ic" style="left:200px;top:779px" width="10" height="10" viewBox="0 0 10 10"><path d="M1 0.5v9L7 5z" fill="#666"/><path d="M8.5 0v10" stroke="#555" stroke-width="1.5"/></svg>
<svg class="ic" style="left:211px;top:776px" width="142" height="15" viewBox="0 0 142 15"><path d="M1 0L6 14H44L47 0z" fill="#000"/><path d="M47 0L43 14M93 0l-5 14M139 0l-5 14" stroke="#444" stroke-width="1" fill="none"/></svg>
<div class="a cjk" style="left:223px;top:776px;height:15px;line-height:15px;font-size:13px;color:#fff">模型</div>
<div class="a cjk" style="left:263px;top:776px;height:15px;line-height:15px;font-size:12.5px;color:#000">布局<span style="font-size:11px">1</span></div>
<div class="a cjk" style="left:309px;top:776px;height:15px;line-height:15px;font-size:12.5px;color:#000">布局<span style="font-size:11px">2</span></div>
<div class="a" style="left:1306px;top:777px;width:294px;height:13px;background:#e0e0e0;"></div>
<div class="a" style="left:1306px;top:777px;width:5px;height:13px;background:#f4f4f4;border:1px solid #a0b0b0;border-right:none"></div>
<svg class="ic" style="left:1318px;top:779px" width="6" height="9" viewBox="0 0 6 9"><path d="M5.5 0.5v8L0.5 4.5z" fill="#000"/></svg>
<div class="a" style="left:1347px;top:778px;width:15px;height:12px;background:#d8d8dc;border:1px solid #8a8a90;border-radius:2px;background:linear-gradient(#f0f0f4,#c8c8d0)"></div>
<div class="a" style="left:155px;top:798px;width:1445px;height:102px;background:#c0c0c0;"></div>
<div class="a" style="left:155px;top:798px;width:22px;height:27px;background:#7a7a7a;"></div>
<div class="a" style="left:155px;top:825px;width:22px;height:26px;background:#6c6c6c;"></div>
<div class="a" style="left:155px;top:851px;width:22px;height:49px;background:#5c5c5c;"></div>
<div class="a" style="left:158px;top:802px;width:2px;height:2px;background:#c8c8c8;"></div>
<div class="a" style="left:158px;top:806px;width:2px;height:2px;background:#c8c8c8;"></div>
<div class="a" style="left:161px;top:802px;width:2px;height:2px;background:#c8c8c8;"></div>
<div class="a" style="left:161px;top:806px;width:2px;height:2px;background:#c8c8c8;"></div>
<div class="a" style="left:164px;top:802px;width:2px;height:2px;background:#c8c8c8;"></div>
<div class="a" style="left:164px;top:806px;width:2px;height:2px;background:#c8c8c8;"></div>
<div class="a" style="left:167px;top:802px;width:2px;height:2px;background:#c8c8c8;"></div>
<div class="a" style="left:167px;top:806px;width:2px;height:2px;background:#c8c8c8;"></div>
<div class="a" style="left:170px;top:802px;width:2px;height:2px;background:#c8c8c8;"></div>
<div class="a" style="left:170px;top:806px;width:2px;height:2px;background:#c8c8c8;"></div>
<div class="a" style="left:173px;top:802px;width:2px;height:2px;background:#c8c8c8;"></div>
<div class="a" style="left:173px;top:806px;width:2px;height:2px;background:#c8c8c8;"></div>
<svg class="ic" style="left:160px;top:813px" width="12" height="11" viewBox="0 0 12 11"><path d="M1.5 1.5l9 8M10.5 1.5l-9 8" stroke="#f0f0f0" stroke-width="2"/></svg>
<svg class="ic" style="left:158px;top:833px" width="16" height="17" viewBox="0 0 16 17"><path d="M13 15L6 8" stroke="#e8e8e8" stroke-width="3.2"/><path d="M6 8c-3 1-5-1-4.5-4L4 6l2-2-2-2.5C7 1 9 3 8 6z" fill="#e8e8e8" stroke="#333" stroke-width="0.8"/></svg>
<div class="a cjk it" style="left:179px;top:797px;height:15px;line-height:15px;font-size:13px;color:#000;white-space:nowrap">命令<span style="font-family:'Liberation Mono',monospace;font-size:11.7px">:</span></div>
<div class="a cjk it" style="left:179px;top:812px;height:15px;line-height:15px;font-size:13px;color:#000;white-space:nowrap"><span style="font-family:'Liberation Mono',monospace;font-size:11.7px">*************</span>完成编号<span style="font-family:'Liberation Mono',monospace;font-size:11.7px">***********</span></div>
<div class="a cjk it" style="left:179px;top:827px;height:15px;line-height:15px;font-size:13px;color:#000;white-space:nowrap">命令<span style="font-family:'Liberation Mono',monospace;font-size:11.7px">:</span></div>
<div class="a cjk it" style="left:179px;top:842px;height:15px;line-height:15px;font-size:13px;color:#000;white-space:nowrap">命令<span style="font-family:'Liberation Mono',monospace;font-size:11.7px">:</span></div>
<div class="a cjk it" style="left:179px;top:857px;height:15px;line-height:15px;font-size:13px;color:#000;white-space:nowrap">请选择【编号，单行】文本：指定对角点：找到<span style="font-family:'Liberation Mono',monospace;font-size:11.7px">&nbsp;55&nbsp;</span>个</div>
<div class="a cjk it" style="left:179px;top:872px;height:15px;line-height:15px;font-size:13px;color:#000;white-space:nowrap">请选择【编号，单行】文本：</div>
<div class="a cjk it" style="left:179px;top:887px;height:15px;line-height:15px;font-size:13px;color:#000;white-space:nowrap">请指定表格插入点</div>
</body></html>
